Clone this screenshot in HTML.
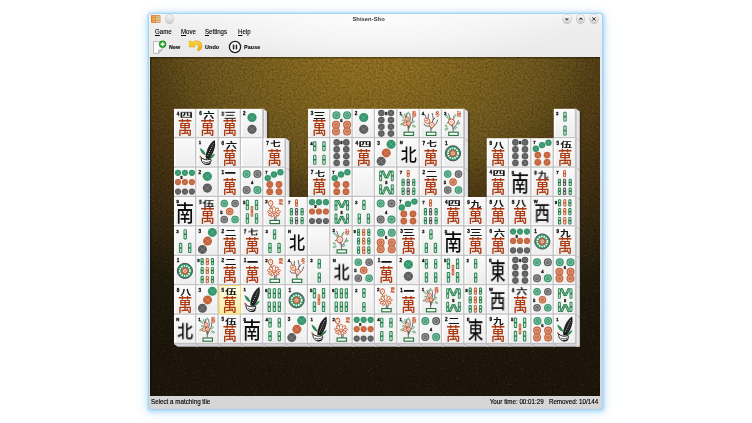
<!DOCTYPE html>
<html lang="en"><head><meta charset="utf-8"><title>Shisen-Sho</title>
<style>
html,body{margin:0;padding:0;background:#fff;}
body{width:752px;height:423px;overflow:hidden;position:relative;font-family:"Liberation Sans",sans-serif;}
#win{will-change:transform;position:absolute;left:148px;top:13px;width:455px;height:396px;}
#frame{position:absolute;left:.8px;top:.8px;right:1.3px;bottom:.4px;border-radius:3px 3px 2px 2px;
background:radial-gradient(ellipse 200px 46px at 50% 6px,rgba(255,255,255,.75) 0,rgba(255,255,255,.45) 50%,rgba(255,255,255,0) 100%),linear-gradient(#f5f5f5 0,#eeeeee 14px,#e9e9e9 44px,#dadada 340px,#d6d6d6 100%);
box-shadow:0 0 1.2px .6px #a2d3f3,.4px .5px 4px 1.2px rgba(140,200,242,.8),0 2px 11px 3px rgba(175,218,246,.45);}
.t{position:absolute;white-space:nowrap;color:#1c1c1c;line-height:1;transform-origin:0 0;}
#title{left:170.6px;width:100px;top:3.6px;text-align:center;font-size:5.8px;font-weight:700;letter-spacing:.05px;color:#333;}
.m{top:16.1px;font-size:7.1px;transform:scaleX(.86);color:#000;-webkit-text-stroke:.12px #000;}
.m u{text-decoration-thickness:.6px;text-underline-offset:.6px;}
.tb{top:31.2px;font-size:6px;font-weight:700;letter-spacing:.1px;color:#111;-webkit-text-stroke:.15px #111;transform:scaleX(.9);}
.sb{top:385.9px;font-size:7.1px;transform:scaleX(.88);color:#000;-webkit-text-stroke:.15px #000;}
.wb{position:absolute;top:2.2px;width:7.8px;height:7.8px;border-radius:50%;background:linear-gradient(#f8f8f8 10%,#e2e2e2 60%,#cbcbcb 100%);box-shadow:0 0 0 .6px #b6b6b6,0 .7px 1px rgba(0,0,0,.2);}
</style></head><body>
<div id="win">
<div id="frame"></div>
<svg style="position:absolute;left:3.4px;top:2.2px" width="9.4" height="7.8" viewBox="0 0 9.4 7.8"><rect width="9.4" height="7.8" rx=".7" fill="#c9722f"/><rect x=".5" y=".5" width="4.2" height="6.8" rx=".4" fill="#ee8a3c"/><rect x="4.9" y=".5" width="4" height="6.8" rx=".4" fill="#f3c49a"/><circle cx="2.6" cy="3.9" r="1.3" fill="#f7b13c"/><rect x=".9" y=".8" width="3.4" height=".9" fill="#f6b684" fill-opacity=".8"/><rect x=".9" y="6.1" width="3.4" height=".8" fill="#f6b684" fill-opacity=".6"/><rect x="5.5" y="1.8" width="1.2" height="1.2" fill="#7fae3e"/><rect x="7.2" y="1.8" width="1.2" height="1.2" fill="#7fae3e"/><rect x="5.5" y="4.5" width="1.2" height="1.2" fill="#7fae3e"/><rect x="7.2" y="4.5" width="1.2" height="1.2" fill="#7fae3e"/></svg>
<div class="wb" style="left:17.6px;width:7.6px;height:7.6px;top:2.2px;background:radial-gradient(circle at 50% 50%,#bdbdbd 0,#bdbdbd 6%,transparent 9%),linear-gradient(#f4f4f4,#cfcfcf)"></div>
<div class="t" id="title">Shisen-Sho</div>
<div class="wb" style="left:414.9px"><svg width="7.8" height="7.8" viewBox="0 0 8.6 8.6" style="display:block"><path d="M2.7 3.6 L4.3 5.3 L5.9 3.6" stroke="#303030" stroke-width="1.15" fill="none"/></svg></div>
<div class="wb" style="left:428.7px"><svg width="7.8" height="7.8" viewBox="0 0 8.6 8.6" style="display:block"><path d="M2.7 5.1 L4.3 3.4 L5.9 5.1" stroke="#303030" stroke-width="1.15" fill="none"/></svg></div>
<div class="wb" style="left:442.1px"><svg width="7.8" height="7.8" viewBox="0 0 8.6 8.6" style="display:block"><path d="M2.5 2.5 L6.1 6.1 M6.1 2.5 L2.5 6.1" stroke="#262626" stroke-width="1.05" fill="none"/></svg></div>
<div class="t m" style="left:6.9px"><u>G</u>ame</div>
<div class="t m" style="left:32.7px"><u>M</u>ove</div>
<div class="t m" style="left:57.3px"><u>S</u>ettings</div>
<div class="t m" style="left:89.5px"><u>H</u>elp</div>
<svg style="position:absolute;left:4px;top:26px" width="16" height="16" viewBox="0 0 16 16"><path d="M1.5 2.6 H10 V10.8 L6.6 14.3 H1.5 Z" fill="#fdfdfd" stroke="#a2a2a2" stroke-width=".7"/><path d="M10 10.8 H6.6 V14.3 Z" fill="#d0d0d0" stroke="#9a9a9a" stroke-width=".5"/><circle cx="10.6" cy="5.2" r="3.4" fill="#23aa1d" stroke="#167a12" stroke-width=".6"/><path d="M10.6 3.2 V7.2 M8.6 5.2 H12.6" stroke="#fff" stroke-width="1.4"/></svg>
<div class="t tb" style="left:20.9px">New</div>
<svg style="position:absolute;left:40px;top:26px" width="16" height="14" viewBox="0 0 16 14"><defs><linearGradient id="ug" x1="0" y1="0" x2="1" y2="1"><stop offset="0" stop-color="#fbd622"/><stop offset=".55" stop-color="#f5bd1a"/><stop offset="1" stop-color="#ec9f18"/></linearGradient></defs><path d="M1.3 2 L1.3 7.9 H7.6 L5.9 6.2 C7.3 4.9 9.6 5 10.2 6.8 C10.7 8.3 10 9.9 9 10.8 L11.4 11.9 C13.6 10.2 14.7 7.4 13.6 4.9 C12.2 1.7 7.4 .6 4.3 3.4 L2.9 2 Z" fill="url(#ug)" stroke="#dba012" stroke-width=".5" stroke-linejoin="round"/><path d="M5.4 4.4 C8 2.6 11.6 3.6 12.4 6.6" fill="none" stroke="#fdeea0" stroke-width=".7" stroke-opacity=".8"/></svg>
<div class="t tb" style="left:56.8px">Undo</div>
<svg style="position:absolute;left:79.7px;top:27px" width="14" height="14" viewBox="0 0 14 14"><circle cx="7" cy="7" r="5.6" fill="#fcfcfc" stroke="#1e1e1e" stroke-width="1.3"/><rect x="4.8" y="4.6" width="1.5" height="4.8" fill="#1e1e1e"/><rect x="7.7" y="4.6" width="1.5" height="4.8" fill="#1e1e1e"/></svg>
<div class="t tb" style="left:95.8px">Pause</div>
<svg width="450" height="339" viewBox="0 0 450 339" style="position:absolute;left:2px;top:44px;display:block"><defs>
<radialGradient id="bg" gradientUnits="userSpaceOnUse" cx="225" cy="0" r="320" gradientTransform="translate(225 0) scale(1.6 1) translate(-225 0)">
<stop offset="0" stop-color="#987525"/>
<stop offset="0.078" stop-color="#947324"/>
<stop offset="0.2" stop-color="#846821"/>
<stop offset="0.324" stop-color="#745b20"/>
<stop offset="0.374" stop-color="#68531b"/>
<stop offset="0.423" stop-color="#5b4418"/>
<stop offset="0.5375" stop-color="#473313"/>
<stop offset="0.67" stop-color="#362911"/>
<stop offset="0.8" stop-color="#241d0e"/>
<stop offset="1" stop-color="#1f170c"/>
</radialGradient>
<linearGradient id="fh" x1="0" x2="1" y1="0" y2="0">
<stop offset="0" stop-color="#d9d9d9"/><stop offset="0.07" stop-color="#f3f3f3"/><stop offset="0.3" stop-color="#ffffff"/><stop offset="0.8" stop-color="#fbfbfb"/><stop offset="0.94" stop-color="#ececec"/><stop offset="1" stop-color="#d4d4d6"/>
</linearGradient>
<linearGradient id="fv" x1="0" x2="0" y1="0" y2="1">
<stop offset="0" stop-color="#fff" stop-opacity=".9"/><stop offset="0.05" stop-color="#fff" stop-opacity="0"/><stop offset="0.85" stop-color="#000" stop-opacity="0"/><stop offset="0.95" stop-color="#000" stop-opacity=".07"/><stop offset="1" stop-color="#000" stop-opacity=".2"/>
</linearGradient>
<linearGradient id="fi" x1="0" x2="0" y1="0" y2="1">
<stop offset="0" stop-color="#f9f9f9"/><stop offset="0.5" stop-color="#f4f4f4"/><stop offset="1" stop-color="#eeeeee"/>
</linearGradient>
<linearGradient id="fs" x1="0" x2="0" y1="0" y2="1">
<stop offset="0" stop-color="#fffce6"/><stop offset="0.6" stop-color="#fdf4c0"/><stop offset="1" stop-color="#f9e69c"/>
</linearGradient>
<linearGradient id="sr" x1="0" x2="1" y1="0" y2="0">
<stop offset="0" stop-color="#efeff1"/><stop offset="0.7" stop-color="#e0e0e3"/><stop offset="1" stop-color="#c6c6ca"/>
</linearGradient>
<linearGradient id="sb" x1="0" x2="0" y1="0" y2="1">
<stop offset="0" stop-color="#e2e2e4"/><stop offset="0.7" stop-color="#cfcfd2"/><stop offset="1" stop-color="#b4b4b8"/>
</linearGradient>
<filter id="grain" x="0" y="0" width="100%" height="100%">
<feTurbulence type="fractalNoise" baseFrequency="0.5" numOctaves="3" seed="7" result="n"/>
<feColorMatrix type="matrix" values="0 0 0 0 0  0 0 0 0 0  0 0 0 0 0  1.6 1.0 0 0 -1.0"/>
</filter>
<filter id="grain2" x="0" y="0" width="100%" height="100%">
<feTurbulence type="fractalNoise" baseFrequency="0.45" numOctaves="3" seed="23" result="n"/>
<feColorMatrix type="matrix" values="0 0 0 0 .78  0 0 0 0 .62  0 0 0 0 .25  0 1.4 1.4 0 -1.62"/>
</filter>
</defs><rect width="450" height="339" fill="url(#bg)"/><rect width="450" height="339" fill="#000" filter="url(#grain)" opacity=".3"/><rect width="450" height="339" fill="#000" filter="url(#grain2)" opacity=".16"/><rect width="450" height="1.6" fill="#000" fill-opacity=".32"/><rect width="1.4" height="339" fill="#000" fill-opacity=".3"/><g transform="translate(24 51.8)"><path d="M22.34 0 L27.79 4 V33.7 H4.75 L0 29.4 Z" fill="#1a1408" fill-opacity=".3"/><path d="M22.34 0 L26.79 3.2 V32.9 H4.15 L0 29.4 Z" fill="#2e281c" fill-opacity=".55"/><path d="M22.34 0 L26.09 2.8 V32.2 H22.34 V29.4 Z" fill="url(#sr)"/><path d="M0 29.4 L3.75 32.2 H26.09 L22.34 29.4 Z" fill="url(#sb)"/><rect width="22.34" height="29.4" fill="#fdfdfd"/><rect x="1.5" y="1.5" width="19.14" height="26" rx="1.6" fill="url(#fi)"/><path d="M21.79 0 V28.85 H0" fill="none" stroke="#c4c4c7" stroke-width="1.7" stroke-opacity=".75"/><path d="M22.04 0 V29.1 H0" fill="none" stroke="#adadb1" stroke-width=".6"/><text x="2.8" y="6.7" font-family="'Liberation Sans',sans-serif" font-size="4.6" font-weight="700" fill="#111" stroke="#111" stroke-width=".3">4</text><text transform="translate(12.23 7.56) scale(1.35 0.61)" text-anchor="middle" font-family="'Liberation Sans','Noto Sans CJK SC',sans-serif" font-size="10" font-weight="700" fill="#151515">四</text><text transform="translate(11.16 25.4) scale(1.46 1.71)" text-anchor="middle" font-family="'Liberation Sans','Noto Sans CJK SC',sans-serif" font-size="10" font-weight="500" fill="#ab3a12">萬</text></g>
<g transform="translate(46.34 51.8)"><path d="M22.34 0 L27.79 4 V33.7 H4.75 L0 29.4 Z" fill="#1a1408" fill-opacity=".3"/><path d="M22.34 0 L26.79 3.2 V32.9 H4.15 L0 29.4 Z" fill="#2e281c" fill-opacity=".55"/><path d="M22.34 0 L26.09 2.8 V32.2 H22.34 V29.4 Z" fill="url(#sr)"/><path d="M0 29.4 L3.75 32.2 H26.09 L22.34 29.4 Z" fill="url(#sb)"/><rect width="22.34" height="29.4" fill="#fdfdfd"/><rect x="1.5" y="1.5" width="19.14" height="26" rx="1.6" fill="url(#fi)"/><path d="M21.79 0 V28.85 H0" fill="none" stroke="#c4c4c7" stroke-width="1.7" stroke-opacity=".75"/><path d="M22.04 0 V29.1 H0" fill="none" stroke="#adadb1" stroke-width=".6"/><text x="2.8" y="6.7" font-family="'Liberation Sans',sans-serif" font-size="4.6" font-weight="700" fill="#111" stroke="#111" stroke-width=".3">6</text><text transform="translate(12.71 9.47) scale(1.14 0.79)" text-anchor="middle" font-family="'Liberation Sans','Noto Sans CJK SC',sans-serif" font-size="10" font-weight="700" fill="#151515">六</text><text transform="translate(11.16 25.4) scale(1.46 1.71)" text-anchor="middle" font-family="'Liberation Sans','Noto Sans CJK SC',sans-serif" font-size="10" font-weight="500" fill="#ab3a12">萬</text></g>
<g transform="translate(68.68 51.8)"><path d="M22.34 0 L27.79 4 V33.7 H4.75 L0 29.4 Z" fill="#1a1408" fill-opacity=".3"/><path d="M22.34 0 L26.79 3.2 V32.9 H4.15 L0 29.4 Z" fill="#2e281c" fill-opacity=".55"/><path d="M22.34 0 L26.09 2.8 V32.2 H22.34 V29.4 Z" fill="url(#sr)"/><path d="M0 29.4 L3.75 32.2 H26.09 L22.34 29.4 Z" fill="url(#sb)"/><rect width="22.34" height="29.4" fill="#fdfdfd"/><rect x="1.5" y="1.5" width="19.14" height="26" rx="1.6" fill="url(#fi)"/><path d="M21.79 0 V28.85 H0" fill="none" stroke="#c4c4c7" stroke-width="1.7" stroke-opacity=".75"/><path d="M22.04 0 V29.1 H0" fill="none" stroke="#adadb1" stroke-width=".6"/><text x="2.8" y="6.7" font-family="'Liberation Sans',sans-serif" font-size="4.6" font-weight="700" fill="#111" stroke="#111" stroke-width=".3">3</text><text transform="translate(11.4 8.76) scale(1.29 0.81)" text-anchor="middle" font-family="'Liberation Sans','Noto Sans CJK SC',sans-serif" font-size="10" font-weight="700" fill="#151515">三</text><text transform="translate(11.16 25.4) scale(1.46 1.71)" text-anchor="middle" font-family="'Liberation Sans','Noto Sans CJK SC',sans-serif" font-size="10" font-weight="500" fill="#ab3a12">萬</text></g>
<g transform="translate(91.02 51.8)"><path d="M22.34 0 L27.79 4 V33.7 H4.75 L0 29.4 Z" fill="#1a1408" fill-opacity=".3"/><path d="M22.34 0 L26.79 3.2 V32.9 H4.15 L0 29.4 Z" fill="#2e281c" fill-opacity=".55"/><path d="M22.34 0 L26.09 2.8 V32.2 H22.34 V29.4 Z" fill="url(#sr)"/><path d="M0 29.4 L3.75 32.2 H26.09 L22.34 29.4 Z" fill="url(#sb)"/><rect width="22.34" height="29.4" fill="#fdfdfd"/><rect x="1.5" y="1.5" width="19.14" height="26" rx="1.6" fill="url(#fi)"/><path d="M21.79 0 V28.85 H0" fill="none" stroke="#c4c4c7" stroke-width="1.7" stroke-opacity=".75"/><path d="M22.04 0 V29.1 H0" fill="none" stroke="#adadb1" stroke-width=".6"/><text x="2.1" y="6.7" font-family="'Liberation Sans',sans-serif" font-size="4.6" font-weight="700" fill="#111" stroke="#111" stroke-width=".3">2</text><circle cx="11" cy="8.7" r="4.6" fill="#33956a"/><path d="M7.96 5.66 L14.04 11.74 M14.04 5.66 L7.96 11.74" stroke="#fff" stroke-opacity=".22" stroke-width="0.92"/><circle cx="11" cy="20.5" r="4.6" fill="#5c5c5c"/><path d="M7.96 17.46 L14.04 23.54 M14.04 17.46 L7.96 23.54" stroke="#fff" stroke-opacity=".22" stroke-width="0.92"/></g>
<g transform="translate(158.04 51.8)"><path d="M22.34 0 L27.79 4 V33.7 H4.75 L0 29.4 Z" fill="#1a1408" fill-opacity=".3"/><path d="M22.34 0 L26.79 3.2 V32.9 H4.15 L0 29.4 Z" fill="#2e281c" fill-opacity=".55"/><path d="M22.34 0 L26.09 2.8 V32.2 H22.34 V29.4 Z" fill="url(#sr)"/><path d="M0 29.4 L3.75 32.2 H26.09 L22.34 29.4 Z" fill="url(#sb)"/><rect width="22.34" height="29.4" fill="#fdfdfd"/><rect x="1.5" y="1.5" width="19.14" height="26" rx="1.6" fill="url(#fi)"/><path d="M21.79 0 V28.85 H0" fill="none" stroke="#c4c4c7" stroke-width="1.7" stroke-opacity=".75"/><path d="M22.04 0 V29.1 H0" fill="none" stroke="#adadb1" stroke-width=".6"/><text x="2.8" y="6.7" font-family="'Liberation Sans',sans-serif" font-size="4.6" font-weight="700" fill="#111" stroke="#111" stroke-width=".3">3</text><text transform="translate(11.4 8.76) scale(1.29 0.81)" text-anchor="middle" font-family="'Liberation Sans','Noto Sans CJK SC',sans-serif" font-size="10" font-weight="700" fill="#151515">三</text><text transform="translate(11.16 25.4) scale(1.46 1.71)" text-anchor="middle" font-family="'Liberation Sans','Noto Sans CJK SC',sans-serif" font-size="10" font-weight="500" fill="#ab3a12">萬</text></g>
<g transform="translate(180.38 51.8)"><path d="M22.34 0 L27.79 4 V33.7 H4.75 L0 29.4 Z" fill="#1a1408" fill-opacity=".3"/><path d="M22.34 0 L26.79 3.2 V32.9 H4.15 L0 29.4 Z" fill="#2e281c" fill-opacity=".55"/><path d="M22.34 0 L26.09 2.8 V32.2 H22.34 V29.4 Z" fill="url(#sr)"/><path d="M0 29.4 L3.75 32.2 H26.09 L22.34 29.4 Z" fill="url(#sb)"/><rect width="22.34" height="29.4" fill="#fdfdfd"/><rect x="1.5" y="1.5" width="19.14" height="26" rx="1.6" fill="url(#fi)"/><path d="M21.79 0 V28.85 H0" fill="none" stroke="#c4c4c7" stroke-width="1.7" stroke-opacity=".75"/><path d="M22.04 0 V29.1 H0" fill="none" stroke="#adadb1" stroke-width=".6"/><circle cx="6" cy="6.4" r="4" fill="#33956a"/><circle cx="6" cy="6.4" r="2.48" fill="none" stroke="#fff" stroke-opacity=".55" stroke-width="0.8"/><circle cx="6" cy="6.4" r="1" fill="none" stroke="#fff" stroke-opacity=".4" stroke-width="0.56"/><circle cx="16.7" cy="6.4" r="4" fill="#33956a"/><circle cx="16.7" cy="6.4" r="2.48" fill="none" stroke="#fff" stroke-opacity=".55" stroke-width="0.8"/><circle cx="16.7" cy="6.4" r="1" fill="none" stroke="#fff" stroke-opacity=".4" stroke-width="0.56"/><circle cx="5.6" cy="16" r="4" fill="#c4623a"/><circle cx="5.6" cy="16" r="2.48" fill="none" stroke="#fff" stroke-opacity=".55" stroke-width="0.8"/><circle cx="5.6" cy="16" r="1" fill="none" stroke="#fff" stroke-opacity=".4" stroke-width="0.56"/><circle cx="16.7" cy="16" r="4" fill="#c4623a"/><circle cx="16.7" cy="16" r="2.48" fill="none" stroke="#fff" stroke-opacity=".55" stroke-width="0.8"/><circle cx="16.7" cy="16" r="1" fill="none" stroke="#fff" stroke-opacity=".4" stroke-width="0.56"/><circle cx="5.6" cy="22.8" r="4" fill="#c4623a"/><circle cx="5.6" cy="22.8" r="2.48" fill="none" stroke="#fff" stroke-opacity=".55" stroke-width="0.8"/><circle cx="5.6" cy="22.8" r="1" fill="none" stroke="#fff" stroke-opacity=".4" stroke-width="0.56"/><circle cx="16.7" cy="22.8" r="4" fill="#c4623a"/><circle cx="16.7" cy="22.8" r="2.48" fill="none" stroke="#fff" stroke-opacity=".55" stroke-width="0.8"/><circle cx="16.7" cy="22.8" r="1" fill="none" stroke="#fff" stroke-opacity=".4" stroke-width="0.56"/><text x="9.9" y="12.8" font-family="'Liberation Sans',sans-serif" font-size="4.2" font-weight="700" fill="#111" stroke="#111" stroke-width=".3">6</text></g>
<g transform="translate(202.72 51.8)"><path d="M22.34 0 L27.79 4 V33.7 H4.75 L0 29.4 Z" fill="#1a1408" fill-opacity=".3"/><path d="M22.34 0 L26.79 3.2 V32.9 H4.15 L0 29.4 Z" fill="#2e281c" fill-opacity=".55"/><path d="M22.34 0 L26.09 2.8 V32.2 H22.34 V29.4 Z" fill="url(#sr)"/><path d="M0 29.4 L3.75 32.2 H26.09 L22.34 29.4 Z" fill="url(#sb)"/><rect width="22.34" height="29.4" fill="#fdfdfd"/><rect x="1.5" y="1.5" width="19.14" height="26" rx="1.6" fill="url(#fi)"/><path d="M21.79 0 V28.85 H0" fill="none" stroke="#c4c4c7" stroke-width="1.7" stroke-opacity=".75"/><path d="M22.04 0 V29.1 H0" fill="none" stroke="#adadb1" stroke-width=".6"/><text x="2.1" y="6.7" font-family="'Liberation Sans',sans-serif" font-size="4.6" font-weight="700" fill="#111" stroke="#111" stroke-width=".3">2</text><circle cx="11" cy="8.7" r="4.6" fill="#33956a"/><path d="M7.96 5.66 L14.04 11.74 M14.04 5.66 L7.96 11.74" stroke="#fff" stroke-opacity=".22" stroke-width="0.92"/><circle cx="11" cy="20.5" r="4.6" fill="#5c5c5c"/><path d="M7.96 17.46 L14.04 23.54 M14.04 17.46 L7.96 23.54" stroke="#fff" stroke-opacity=".22" stroke-width="0.92"/></g>
<g transform="translate(225.06 51.8)"><path d="M22.34 0 L27.79 4 V33.7 H4.75 L0 29.4 Z" fill="#1a1408" fill-opacity=".3"/><path d="M22.34 0 L26.79 3.2 V32.9 H4.15 L0 29.4 Z" fill="#2e281c" fill-opacity=".55"/><path d="M22.34 0 L26.09 2.8 V32.2 H22.34 V29.4 Z" fill="url(#sr)"/><path d="M0 29.4 L3.75 32.2 H26.09 L22.34 29.4 Z" fill="url(#sb)"/><rect width="22.34" height="29.4" fill="#fdfdfd"/><rect x="1.5" y="1.5" width="19.14" height="26" rx="1.6" fill="url(#fi)"/><path d="M21.79 0 V28.85 H0" fill="none" stroke="#c4c4c7" stroke-width="1.7" stroke-opacity=".75"/><path d="M22.04 0 V29.1 H0" fill="none" stroke="#adadb1" stroke-width=".6"/><circle cx="6.3" cy="4.2" r="3.3" fill="#5c5c5c"/><path d="M4.12 2.02 L8.48 6.38 M8.48 2.02 L4.12 6.38" stroke="#fff" stroke-opacity=".22" stroke-width="0.66"/><circle cx="15.9" cy="4.2" r="3.3" fill="#5c5c5c"/><path d="M13.72 2.02 L18.08 6.38 M18.08 2.02 L13.72 6.38" stroke="#fff" stroke-opacity=".22" stroke-width="0.66"/><circle cx="6.3" cy="11.2" r="3.3" fill="#5c5c5c"/><path d="M4.12 9.02 L8.48 13.38 M8.48 9.02 L4.12 13.38" stroke="#fff" stroke-opacity=".22" stroke-width="0.66"/><circle cx="15.9" cy="11.2" r="3.3" fill="#5c5c5c"/><path d="M13.72 9.02 L18.08 13.38 M18.08 9.02 L13.72 13.38" stroke="#fff" stroke-opacity=".22" stroke-width="0.66"/><circle cx="6.3" cy="18" r="3.3" fill="#5c5c5c"/><path d="M4.12 15.82 L8.48 20.18 M8.48 15.82 L4.12 20.18" stroke="#fff" stroke-opacity=".22" stroke-width="0.66"/><circle cx="15.9" cy="18" r="3.3" fill="#5c5c5c"/><path d="M13.72 15.82 L18.08 20.18 M18.08 15.82 L13.72 20.18" stroke="#fff" stroke-opacity=".22" stroke-width="0.66"/><circle cx="6.3" cy="24.8" r="3.3" fill="#5c5c5c"/><path d="M4.12 22.62 L8.48 26.98 M8.48 22.62 L4.12 26.98" stroke="#fff" stroke-opacity=".22" stroke-width="0.66"/><circle cx="15.9" cy="24.8" r="3.3" fill="#5c5c5c"/><path d="M13.72 22.62 L18.08 26.98 M18.08 22.62 L13.72 26.98" stroke="#fff" stroke-opacity=".22" stroke-width="0.66"/><text x="9.9" y="6" font-family="'Liberation Sans',sans-serif" font-size="4.2" font-weight="700" fill="#111" stroke="#111" stroke-width=".3">8</text></g>
<g transform="translate(247.4 51.8)"><path d="M22.34 0 L27.79 4 V33.7 H4.75 L0 29.4 Z" fill="#1a1408" fill-opacity=".3"/><path d="M22.34 0 L26.79 3.2 V32.9 H4.15 L0 29.4 Z" fill="#2e281c" fill-opacity=".55"/><path d="M22.34 0 L26.09 2.8 V32.2 H22.34 V29.4 Z" fill="url(#sr)"/><path d="M0 29.4 L3.75 32.2 H26.09 L22.34 29.4 Z" fill="url(#sb)"/><rect width="22.34" height="29.4" fill="#fdfdfd"/><rect x="1.5" y="1.5" width="19.14" height="26" rx="1.6" fill="url(#fi)"/><path d="M21.79 0 V28.85 H0" fill="none" stroke="#c4c4c7" stroke-width="1.7" stroke-opacity=".75"/><path d="M22.04 0 V29.1 H0" fill="none" stroke="#adadb1" stroke-width=".6"/><text x="2" y="6" font-family="'Liberation Sans',sans-serif" font-size="4.3" font-weight="700" fill="#111" stroke="#111" stroke-width=".3">1</text><text transform="translate(16.79 7.24) scale(0.47 0.54)" text-anchor="middle" font-family="'Liberation Sans','Noto Sans CJK SC',sans-serif" font-size="10" font-weight="700" fill="#c24e22">春</text><rect x="6.7" y="23.4" width="9.4" height="3.2" fill="#fff" stroke="#2a7440" stroke-width="1.15"/><path d="M11 23 L10.6 16 L7.2 4.8 M10.7 18 L9 10 L9.4 4.4 M11 19 L13 10 L12.2 4.6 M11 20.4 L15 12 L15.4 8" stroke="#3a3a3a" stroke-width=".7" fill="none"/><ellipse cx="5.4" cy="7.6" rx="1.6" ry="0.75" transform="rotate(40 5.4 7.6)" fill="#eef6ef" stroke="#4a9a62" stroke-width=".7"/><ellipse cx="4.8" cy="15.2" rx="1.6" ry="0.75" transform="rotate(-20 4.8 15.2)" fill="#eef6ef" stroke="#4a9a62" stroke-width=".7"/><ellipse cx="15.6" cy="13.2" rx="1.6" ry="0.75" transform="rotate(-35 15.6 13.2)" fill="#eef6ef" stroke="#4a9a62" stroke-width=".7"/><ellipse cx="16.6" cy="17.4" rx="1.6" ry="0.75" transform="rotate(20 16.6 17.4)" fill="#eef6ef" stroke="#4a9a62" stroke-width=".7"/><ellipse cx="10.6" cy="4.4" rx="1.3" ry="0.6" transform="rotate(-60 10.6 4.4)" fill="#eef6ef" stroke="#4a9a62" stroke-width=".7"/><ellipse cx="6.2" cy="11.6" rx="1.3" ry="0.6" transform="rotate(10 6.2 11.6)" fill="#eef6ef" stroke="#4a9a62" stroke-width=".7"/><circle cx="9.7" cy="10.2" r="2" fill="#fff" stroke="#c4562a" stroke-width=".9"/><path d="M8.6 10.2 L10.8 10.2 M9.7 9.1 L9.7 11.3" stroke="#c4562a" stroke-width=".5" stroke-opacity=".8"/><circle cx="7.7" cy="15" r="1.9" fill="#fff" stroke="#c4562a" stroke-width=".9"/><path d="M6.66 15 L8.75 15 M7.7 13.96 L7.7 16.05" stroke="#c4562a" stroke-width=".5" stroke-opacity=".8"/><circle cx="11.2" cy="14.7" r="1.9" fill="#fff" stroke="#c4562a" stroke-width=".9"/><path d="M10.15 14.7 L12.24 14.7 M11.2 13.65 L11.2 15.74" stroke="#c4562a" stroke-width=".5" stroke-opacity=".8"/></g>
<g transform="translate(269.74 51.8)"><path d="M22.34 0 L27.79 4 V33.7 H4.75 L0 29.4 Z" fill="#1a1408" fill-opacity=".3"/><path d="M22.34 0 L26.79 3.2 V32.9 H4.15 L0 29.4 Z" fill="#2e281c" fill-opacity=".55"/><path d="M22.34 0 L26.09 2.8 V32.2 H22.34 V29.4 Z" fill="url(#sr)"/><path d="M0 29.4 L3.75 32.2 H26.09 L22.34 29.4 Z" fill="url(#sb)"/><rect width="22.34" height="29.4" fill="#fdfdfd"/><rect x="1.5" y="1.5" width="19.14" height="26" rx="1.6" fill="url(#fi)"/><path d="M21.79 0 V28.85 H0" fill="none" stroke="#c4c4c7" stroke-width="1.7" stroke-opacity=".75"/><path d="M22.04 0 V29.1 H0" fill="none" stroke="#adadb1" stroke-width=".6"/><text x="2" y="6" font-family="'Liberation Sans',sans-serif" font-size="4.3" font-weight="700" fill="#111" stroke="#111" stroke-width=".3">4</text><text transform="translate(17.69 7.2) scale(0.46 0.53)" text-anchor="middle" font-family="'Liberation Sans','Noto Sans CJK SC',sans-serif" font-size="10" font-weight="700" fill="#c24e22">冬</text><rect x="6.7" y="23.4" width="9.4" height="3.2" fill="#fff" stroke="#2a7440" stroke-width="1.15"/><path d="M11.4 23 L10.8 17.4 L5.2 6.2 L3.6 4.6 M8.2 12 L8.8 5.2 M10.9 18.6 L13.6 10 L12.4 4.2 M13.2 11.4 L15.4 8.6 M11.2 20.6 L16.6 14.6 L18 10.8 M10.8 17.6 L5.6 17 L4.2 14.8" stroke="#3a3a3a" stroke-width=".75" fill="none"/><circle cx="7.6" cy="12.2" r="2.5" fill="#fff" stroke="#c4562a" stroke-width=".9"/><path d="M6.22 12.2 L8.97 12.2 M7.6 10.82 L7.6 13.57" stroke="#c4562a" stroke-width=".5" stroke-opacity=".8"/><circle cx="12" cy="16.1" r="2.5" fill="#fff" stroke="#c4562a" stroke-width=".9"/><path d="M10.62 16.1 L13.38 16.1 M12 14.73 L12 17.48" stroke="#c4562a" stroke-width=".5" stroke-opacity=".8"/><circle cx="6" cy="10.6" r="1.3" fill="#fff" stroke="#c4562a" stroke-width=".7"/></g>
<g transform="translate(292.08 51.8)"><path d="M22.34 0 L27.79 4 V33.7 H4.75 L0 29.4 Z" fill="#1a1408" fill-opacity=".3"/><path d="M22.34 0 L26.79 3.2 V32.9 H4.15 L0 29.4 Z" fill="#2e281c" fill-opacity=".55"/><path d="M22.34 0 L26.09 2.8 V32.2 H22.34 V29.4 Z" fill="url(#sr)"/><path d="M0 29.4 L3.75 32.2 H26.09 L22.34 29.4 Z" fill="url(#sb)"/><rect width="22.34" height="29.4" fill="#fdfdfd"/><rect x="1.5" y="1.5" width="19.14" height="26" rx="1.6" fill="url(#fi)"/><path d="M21.79 0 V28.85 H0" fill="none" stroke="#c4c4c7" stroke-width="1.7" stroke-opacity=".75"/><path d="M22.04 0 V29.1 H0" fill="none" stroke="#adadb1" stroke-width=".6"/><text x="2" y="6" font-family="'Liberation Sans',sans-serif" font-size="4.3" font-weight="700" fill="#111" stroke="#111" stroke-width=".3">3</text><text transform="translate(17.01 7.24) scale(0.47 0.54)" text-anchor="middle" font-family="'Liberation Sans','Noto Sans CJK SC',sans-serif" font-size="10" font-weight="700" fill="#c24e22">秋</text><rect x="6.7" y="23.4" width="9.4" height="3.2" fill="#fff" stroke="#2a7440" stroke-width="1.15"/><path d="M11.2 23 L10.6 16 L6.2 4.6 M10.8 18.4 L6.6 13.6 L4.6 14.2 M11 20 L14.6 15.4 L16.4 11.4 M10.2 14 L12.8 6.4" stroke="#3a3a3a" stroke-width=".7" fill="none"/><ellipse cx="4.6" cy="7.6" rx="1.6" ry="0.75" transform="rotate(35 4.6 7.6)" fill="#eef6ef" stroke="#4a9a62" stroke-width=".7"/><ellipse cx="12.6" cy="7.2" rx="1.6" ry="0.75" transform="rotate(-50 12.6 7.2)" fill="#eef6ef" stroke="#4a9a62" stroke-width=".7"/><ellipse cx="4.4" cy="20.2" rx="1.6" ry="0.75" transform="rotate(-25 4.4 20.2)" fill="#eef6ef" stroke="#4a9a62" stroke-width=".7"/><ellipse cx="13.2" cy="19.2" rx="1.6" ry="0.75" transform="rotate(-30 13.2 19.2)" fill="#eef6ef" stroke="#4a9a62" stroke-width=".7"/><ellipse cx="16.6" cy="14.6" rx="1.4" ry="0.65" transform="rotate(-20 16.6 14.6)" fill="#eef6ef" stroke="#4a9a62" stroke-width=".7"/><ellipse cx="7" cy="10.2" rx="1.3" ry="0.6" transform="rotate(60 7 10.2)" fill="#eef6ef" stroke="#4a9a62" stroke-width=".7"/><ellipse cx="4" cy="17" rx="1.2" ry="0.55" transform="rotate(30 4 17)" fill="#eef6ef" stroke="#4a9a62" stroke-width=".7"/><circle cx="9.4" cy="13.2" r="3.0" fill="#fff" stroke="#c4562a" stroke-width="1"/><path d="M7.6 13.6 Q9.4 10.8 11.2 13.6 M8.4 15 Q9.4 13.6 10.4 15" stroke="#c4562a" stroke-width=".6" fill="none"/></g>
<g transform="translate(403.78 51.8)"><path d="M22.34 0 L27.79 4 V33.7 H4.75 L0 29.4 Z" fill="#1a1408" fill-opacity=".3"/><path d="M22.34 0 L26.79 3.2 V32.9 H4.15 L0 29.4 Z" fill="#2e281c" fill-opacity=".55"/><path d="M22.34 0 L26.09 2.8 V32.2 H22.34 V29.4 Z" fill="url(#sr)"/><path d="M0 29.4 L3.75 32.2 H26.09 L22.34 29.4 Z" fill="url(#sb)"/><rect width="22.34" height="29.4" fill="#fdfdfd"/><rect x="1.5" y="1.5" width="19.14" height="26" rx="1.6" fill="url(#fi)"/><path d="M21.79 0 V28.85 H0" fill="none" stroke="#c4c4c7" stroke-width="1.7" stroke-opacity=".75"/><path d="M22.04 0 V29.1 H0" fill="none" stroke="#adadb1" stroke-width=".6"/><text x="2.2" y="6.5" font-family="'Liberation Sans',sans-serif" font-size="4.4" font-weight="700" fill="#111" stroke="#111" stroke-width=".3">2</text><rect x="9.55" y="2.9" width="3.3" height="9.9" rx="1.2" fill="#1f7f48"/><rect x="10.4" y="3.8" width="1.6" height="8.1" rx=".4" fill="#fff" fill-opacity=".74"/><rect x="9.95" y="7.1" width="2.5" height="1.5" fill="#1f7f48"/><rect x="9.55" y="16.7" width="3.3" height="10.1" rx="1.2" fill="#1f7f48"/><rect x="10.4" y="17.6" width="1.6" height="8.3" rx=".4" fill="#fff" fill-opacity=".74"/><rect x="9.95" y="21" width="2.5" height="1.5" fill="#1f7f48"/></g>
<g transform="translate(24 81.2)"><path d="M22.34 0 L27.79 4 V33.7 H4.75 L0 29.4 Z" fill="#1a1408" fill-opacity=".3"/><path d="M22.34 0 L26.79 3.2 V32.9 H4.15 L0 29.4 Z" fill="#2e281c" fill-opacity=".55"/><path d="M22.34 0 L26.09 2.8 V32.2 H22.34 V29.4 Z" fill="url(#sr)"/><path d="M0 29.4 L3.75 32.2 H26.09 L22.34 29.4 Z" fill="url(#sb)"/><rect width="22.34" height="29.4" fill="#fdfdfd"/><rect x="1.5" y="1.5" width="19.14" height="26" rx="1.6" fill="url(#fi)"/><path d="M21.79 0 V28.85 H0" fill="none" stroke="#c4c4c7" stroke-width="1.7" stroke-opacity=".75"/><path d="M22.04 0 V29.1 H0" fill="none" stroke="#adadb1" stroke-width=".6"/></g>
<g transform="translate(46.34 81.2)"><path d="M22.34 0 L27.79 4 V33.7 H4.75 L0 29.4 Z" fill="#1a1408" fill-opacity=".3"/><path d="M22.34 0 L26.79 3.2 V32.9 H4.15 L0 29.4 Z" fill="#2e281c" fill-opacity=".55"/><path d="M22.34 0 L26.09 2.8 V32.2 H22.34 V29.4 Z" fill="url(#sr)"/><path d="M0 29.4 L3.75 32.2 H26.09 L22.34 29.4 Z" fill="url(#sb)"/><rect width="22.34" height="29.4" fill="#fdfdfd"/><rect x="1.5" y="1.5" width="19.14" height="26" rx="1.6" fill="url(#fi)"/><path d="M21.79 0 V28.85 H0" fill="none" stroke="#c4c4c7" stroke-width="1.7" stroke-opacity=".75"/><path d="M22.04 0 V29.1 H0" fill="none" stroke="#adadb1" stroke-width=".6"/><text x="2.4" y="6.2" font-family="'Liberation Sans',sans-serif" font-size="4.3" font-weight="700" fill="#111" stroke="#111" stroke-width=".3">1</text><path d="M3.6 9.8 C6.4 11 8.8 13.6 9.6 17.2 C6.4 16.6 4 13.6 3.6 9.8Z" fill="#2c8a50"/><path d="M18.9 15.6 C17.8 18.6 15.4 20.6 12.4 21.2 C13.2 18.4 15.8 16.2 18.9 15.6Z" fill="#2c8a50"/><path d="M9.4 20.4 C8.8 14.4 12.6 5.4 18.3 1.9 C19.9 7.4 17.4 15.4 12.6 20.8 Z" fill="#1b1b1b"/><path d="M11.4 17.6 L17.1 4.8" stroke="#fff" stroke-opacity=".8" stroke-width="1" stroke-dasharray=".9 1.2" fill="none"/><path d="M13.4 17 L18 7.4" stroke="#fff" stroke-opacity=".5" stroke-width=".7" stroke-dasharray=".7 1.2" fill="none"/><path d="M10.2 15.4 L14.8 5.6" stroke="#fff" stroke-opacity=".35" stroke-width=".6" stroke-dasharray=".6 1.3" fill="none"/><path d="M4.9 19.3 C6.8 21.6 10.6 22.2 14.3 21 C15.6 23.4 13.4 26.2 9.8 26.2 C6.6 26 4.7 23 4.9 19.3Z" fill="#fff" stroke="#1b1b1b" stroke-width="1"/><path d="M7 23.4 C9.2 24.8 12 24.6 13.8 23" stroke="#1b1b1b" stroke-width=".8" fill="none"/><path d="M9.4 26 C11.4 26.6 13.4 25.8 14.2 24.4" stroke="#1b1b1b" stroke-width="1.2" fill="none"/><circle cx="4.1" cy="18.5" r=".85" fill="#c6501e"/></g>
<g transform="translate(68.68 81.2)"><path d="M22.34 0 L27.79 4 V33.7 H4.75 L0 29.4 Z" fill="#1a1408" fill-opacity=".3"/><path d="M22.34 0 L26.79 3.2 V32.9 H4.15 L0 29.4 Z" fill="#2e281c" fill-opacity=".55"/><path d="M22.34 0 L26.09 2.8 V32.2 H22.34 V29.4 Z" fill="url(#sr)"/><path d="M0 29.4 L3.75 32.2 H26.09 L22.34 29.4 Z" fill="url(#sb)"/><rect width="22.34" height="29.4" fill="#fdfdfd"/><rect x="1.5" y="1.5" width="19.14" height="26" rx="1.6" fill="url(#fi)"/><path d="M21.79 0 V28.85 H0" fill="none" stroke="#c4c4c7" stroke-width="1.7" stroke-opacity=".75"/><path d="M22.04 0 V29.1 H0" fill="none" stroke="#adadb1" stroke-width=".6"/><text x="2.8" y="6.7" font-family="'Liberation Sans',sans-serif" font-size="4.6" font-weight="700" fill="#111" stroke="#111" stroke-width=".3">6</text><text transform="translate(12.71 9.47) scale(1.14 0.79)" text-anchor="middle" font-family="'Liberation Sans','Noto Sans CJK SC',sans-serif" font-size="10" font-weight="700" fill="#151515">六</text><text transform="translate(11.16 25.4) scale(1.46 1.71)" text-anchor="middle" font-family="'Liberation Sans','Noto Sans CJK SC',sans-serif" font-size="10" font-weight="500" fill="#ab3a12">萬</text></g>
<g transform="translate(91.02 81.2)"><path d="M22.34 0 L27.79 4 V33.7 H4.75 L0 29.4 Z" fill="#1a1408" fill-opacity=".3"/><path d="M22.34 0 L26.79 3.2 V32.9 H4.15 L0 29.4 Z" fill="#2e281c" fill-opacity=".55"/><path d="M22.34 0 L26.09 2.8 V32.2 H22.34 V29.4 Z" fill="url(#sr)"/><path d="M0 29.4 L3.75 32.2 H26.09 L22.34 29.4 Z" fill="url(#sb)"/><rect width="22.34" height="29.4" fill="#fdfdfd"/><rect x="1.5" y="1.5" width="19.14" height="26" rx="1.6" fill="url(#fi)"/><path d="M21.79 0 V28.85 H0" fill="none" stroke="#c4c4c7" stroke-width="1.7" stroke-opacity=".75"/><path d="M22.04 0 V29.1 H0" fill="none" stroke="#adadb1" stroke-width=".6"/></g>
<g transform="translate(113.36 81.2)"><path d="M22.34 0 L27.79 4 V33.7 H4.75 L0 29.4 Z" fill="#1a1408" fill-opacity=".3"/><path d="M22.34 0 L26.79 3.2 V32.9 H4.15 L0 29.4 Z" fill="#2e281c" fill-opacity=".55"/><path d="M22.34 0 L26.09 2.8 V32.2 H22.34 V29.4 Z" fill="url(#sr)"/><path d="M0 29.4 L3.75 32.2 H26.09 L22.34 29.4 Z" fill="url(#sb)"/><rect width="22.34" height="29.4" fill="#fdfdfd"/><rect x="1.5" y="1.5" width="19.14" height="26" rx="1.6" fill="url(#fi)"/><path d="M21.79 0 V28.85 H0" fill="none" stroke="#c4c4c7" stroke-width="1.7" stroke-opacity=".75"/><path d="M22.04 0 V29.1 H0" fill="none" stroke="#adadb1" stroke-width=".6"/><text x="2.8" y="6.7" font-family="'Liberation Sans',sans-serif" font-size="4.6" font-weight="700" fill="#111" stroke="#111" stroke-width=".3">7</text><text transform="translate(11.97 7.97) scale(1.04 0.72)" text-anchor="middle" font-family="'Liberation Sans','Noto Sans CJK SC',sans-serif" font-size="10" font-weight="700" fill="#151515">七</text><text transform="translate(11.16 25.4) scale(1.46 1.71)" text-anchor="middle" font-family="'Liberation Sans','Noto Sans CJK SC',sans-serif" font-size="10" font-weight="500" fill="#ab3a12">萬</text></g>
<g transform="translate(158.04 81.2)"><path d="M22.34 0 L27.79 4 V33.7 H4.75 L0 29.4 Z" fill="#1a1408" fill-opacity=".3"/><path d="M22.34 0 L26.79 3.2 V32.9 H4.15 L0 29.4 Z" fill="#2e281c" fill-opacity=".55"/><path d="M22.34 0 L26.09 2.8 V32.2 H22.34 V29.4 Z" fill="url(#sr)"/><path d="M0 29.4 L3.75 32.2 H26.09 L22.34 29.4 Z" fill="url(#sb)"/><rect width="22.34" height="29.4" fill="#fdfdfd"/><rect x="1.5" y="1.5" width="19.14" height="26" rx="1.6" fill="url(#fi)"/><path d="M21.79 0 V28.85 H0" fill="none" stroke="#c4c4c7" stroke-width="1.7" stroke-opacity=".75"/><path d="M22.04 0 V29.1 H0" fill="none" stroke="#adadb1" stroke-width=".6"/><text x="2.2" y="6.5" font-family="'Liberation Sans',sans-serif" font-size="4.4" font-weight="700" fill="#111" stroke="#111" stroke-width=".3">4</text><rect x="5.05" y="3.1" width="3.3" height="9.9" rx="1.2" fill="#1f7f48"/><rect x="5.9" y="4" width="1.6" height="8.1" rx=".4" fill="#fff" fill-opacity=".74"/><rect x="5.45" y="7.3" width="2.5" height="1.5" fill="#1f7f48"/><rect x="5.05" y="16.5" width="3.3" height="10.1" rx="1.2" fill="#1f7f48"/><rect x="5.9" y="17.4" width="1.6" height="8.3" rx=".4" fill="#fff" fill-opacity=".74"/><rect x="5.45" y="20.8" width="2.5" height="1.5" fill="#1f7f48"/><rect x="14.25" y="3.1" width="3.3" height="9.9" rx="1.2" fill="#1f7f48"/><rect x="15.1" y="4" width="1.6" height="8.1" rx=".4" fill="#fff" fill-opacity=".74"/><rect x="14.65" y="7.3" width="2.5" height="1.5" fill="#1f7f48"/><rect x="14.25" y="16.5" width="3.3" height="10.1" rx="1.2" fill="#1f7f48"/><rect x="15.1" y="17.4" width="1.6" height="8.3" rx=".4" fill="#fff" fill-opacity=".74"/><rect x="14.65" y="20.8" width="2.5" height="1.5" fill="#1f7f48"/></g>
<g transform="translate(180.38 81.2)"><path d="M22.34 0 L27.79 4 V33.7 H4.75 L0 29.4 Z" fill="#1a1408" fill-opacity=".3"/><path d="M22.34 0 L26.79 3.2 V32.9 H4.15 L0 29.4 Z" fill="#2e281c" fill-opacity=".55"/><path d="M22.34 0 L26.09 2.8 V32.2 H22.34 V29.4 Z" fill="url(#sr)"/><path d="M0 29.4 L3.75 32.2 H26.09 L22.34 29.4 Z" fill="url(#sb)"/><rect width="22.34" height="29.4" fill="#fdfdfd"/><rect x="1.5" y="1.5" width="19.14" height="26" rx="1.6" fill="url(#fi)"/><path d="M21.79 0 V28.85 H0" fill="none" stroke="#c4c4c7" stroke-width="1.7" stroke-opacity=".75"/><path d="M22.04 0 V29.1 H0" fill="none" stroke="#adadb1" stroke-width=".6"/><circle cx="6.3" cy="4.2" r="3.3" fill="#5c5c5c"/><path d="M4.12 2.02 L8.48 6.38 M8.48 2.02 L4.12 6.38" stroke="#fff" stroke-opacity=".22" stroke-width="0.66"/><circle cx="15.9" cy="4.2" r="3.3" fill="#5c5c5c"/><path d="M13.72 2.02 L18.08 6.38 M18.08 2.02 L13.72 6.38" stroke="#fff" stroke-opacity=".22" stroke-width="0.66"/><circle cx="6.3" cy="11.2" r="3.3" fill="#5c5c5c"/><path d="M4.12 9.02 L8.48 13.38 M8.48 9.02 L4.12 13.38" stroke="#fff" stroke-opacity=".22" stroke-width="0.66"/><circle cx="15.9" cy="11.2" r="3.3" fill="#5c5c5c"/><path d="M13.72 9.02 L18.08 13.38 M18.08 9.02 L13.72 13.38" stroke="#fff" stroke-opacity=".22" stroke-width="0.66"/><circle cx="6.3" cy="18" r="3.3" fill="#5c5c5c"/><path d="M4.12 15.82 L8.48 20.18 M8.48 15.82 L4.12 20.18" stroke="#fff" stroke-opacity=".22" stroke-width="0.66"/><circle cx="15.9" cy="18" r="3.3" fill="#5c5c5c"/><path d="M13.72 15.82 L18.08 20.18 M18.08 15.82 L13.72 20.18" stroke="#fff" stroke-opacity=".22" stroke-width="0.66"/><circle cx="6.3" cy="24.8" r="3.3" fill="#5c5c5c"/><path d="M4.12 22.62 L8.48 26.98 M8.48 22.62 L4.12 26.98" stroke="#fff" stroke-opacity=".22" stroke-width="0.66"/><circle cx="15.9" cy="24.8" r="3.3" fill="#5c5c5c"/><path d="M13.72 22.62 L18.08 26.98 M18.08 22.62 L13.72 26.98" stroke="#fff" stroke-opacity=".22" stroke-width="0.66"/><text x="9.9" y="6" font-family="'Liberation Sans',sans-serif" font-size="4.2" font-weight="700" fill="#111" stroke="#111" stroke-width=".3">8</text></g>
<g transform="translate(202.72 81.2)"><path d="M22.34 0 L27.79 4 V33.7 H4.75 L0 29.4 Z" fill="#1a1408" fill-opacity=".3"/><path d="M22.34 0 L26.79 3.2 V32.9 H4.15 L0 29.4 Z" fill="#2e281c" fill-opacity=".55"/><path d="M22.34 0 L26.09 2.8 V32.2 H22.34 V29.4 Z" fill="url(#sr)"/><path d="M0 29.4 L3.75 32.2 H26.09 L22.34 29.4 Z" fill="url(#sb)"/><rect width="22.34" height="29.4" fill="#fdfdfd"/><rect x="1.5" y="1.5" width="19.14" height="26" rx="1.6" fill="url(#fi)"/><path d="M21.79 0 V28.85 H0" fill="none" stroke="#c4c4c7" stroke-width="1.7" stroke-opacity=".75"/><path d="M22.04 0 V29.1 H0" fill="none" stroke="#adadb1" stroke-width=".6"/><text x="2.8" y="6.7" font-family="'Liberation Sans',sans-serif" font-size="4.6" font-weight="700" fill="#111" stroke="#111" stroke-width=".3">4</text><text transform="translate(12.23 7.56) scale(1.35 0.61)" text-anchor="middle" font-family="'Liberation Sans','Noto Sans CJK SC',sans-serif" font-size="10" font-weight="700" fill="#151515">四</text><text transform="translate(11.16 25.4) scale(1.46 1.71)" text-anchor="middle" font-family="'Liberation Sans','Noto Sans CJK SC',sans-serif" font-size="10" font-weight="500" fill="#ab3a12">萬</text></g>
<g transform="translate(225.06 81.2)"><path d="M22.34 0 L27.79 4 V33.7 H4.75 L0 29.4 Z" fill="#1a1408" fill-opacity=".3"/><path d="M22.34 0 L26.79 3.2 V32.9 H4.15 L0 29.4 Z" fill="#2e281c" fill-opacity=".55"/><path d="M22.34 0 L26.09 2.8 V32.2 H22.34 V29.4 Z" fill="url(#sr)"/><path d="M0 29.4 L3.75 32.2 H26.09 L22.34 29.4 Z" fill="url(#sb)"/><rect width="22.34" height="29.4" fill="#fdfdfd"/><rect x="1.5" y="1.5" width="19.14" height="26" rx="1.6" fill="url(#fi)"/><path d="M21.79 0 V28.85 H0" fill="none" stroke="#c4c4c7" stroke-width="1.7" stroke-opacity=".75"/><path d="M22.04 0 V29.1 H0" fill="none" stroke="#adadb1" stroke-width=".6"/><text x="2.1" y="6.7" font-family="'Liberation Sans',sans-serif" font-size="4.6" font-weight="700" fill="#111" stroke="#111" stroke-width=".3">3</text><circle cx="16" cy="6" r="4.5" fill="#33956a"/><path d="M13.03 3.03 L18.97 8.97 M18.97 3.03 L13.03 8.97" stroke="#fff" stroke-opacity=".22" stroke-width="0.9"/><circle cx="11.2" cy="14.7" r="4.5" fill="#c4623a"/><path d="M8.23 11.73 L14.17 17.67 M14.17 11.73 L8.23 17.67" stroke="#fff" stroke-opacity=".22" stroke-width="0.9"/><circle cx="6.1" cy="23" r="4.5" fill="#5c5c5c"/><path d="M3.13 20.03 L9.07 25.97 M9.07 20.03 L3.13 25.97" stroke="#fff" stroke-opacity=".22" stroke-width="0.9"/></g>
<g transform="translate(247.4 81.2)"><path d="M22.34 0 L27.79 4 V33.7 H4.75 L0 29.4 Z" fill="#1a1408" fill-opacity=".3"/><path d="M22.34 0 L26.79 3.2 V32.9 H4.15 L0 29.4 Z" fill="#2e281c" fill-opacity=".55"/><path d="M22.34 0 L26.09 2.8 V32.2 H22.34 V29.4 Z" fill="url(#sr)"/><path d="M0 29.4 L3.75 32.2 H26.09 L22.34 29.4 Z" fill="url(#sb)"/><rect width="22.34" height="29.4" fill="#fdfdfd"/><rect x="1.5" y="1.5" width="19.14" height="26" rx="1.6" fill="url(#fi)"/><path d="M21.79 0 V28.85 H0" fill="none" stroke="#c4c4c7" stroke-width="1.7" stroke-opacity=".75"/><path d="M22.04 0 V29.1 H0" fill="none" stroke="#adadb1" stroke-width=".6"/><text x="2.3" y="6.2" font-family="'Liberation Sans',sans-serif" font-size="4.2" font-weight="700" fill="#111" stroke="#111" stroke-width=".3">N</text><text transform="translate(11.31 22.89) scale(1.61 1.76)" text-anchor="middle" font-family="'Liberation Sans','Noto Sans CJK SC',sans-serif" font-size="10" font-weight="500" fill="#0d0d0d">北</text></g>
<g transform="translate(269.74 81.2)"><path d="M22.34 0 L27.79 4 V33.7 H4.75 L0 29.4 Z" fill="#1a1408" fill-opacity=".3"/><path d="M22.34 0 L26.79 3.2 V32.9 H4.15 L0 29.4 Z" fill="#2e281c" fill-opacity=".55"/><path d="M22.34 0 L26.09 2.8 V32.2 H22.34 V29.4 Z" fill="url(#sr)"/><path d="M0 29.4 L3.75 32.2 H26.09 L22.34 29.4 Z" fill="url(#sb)"/><rect width="22.34" height="29.4" fill="#fdfdfd"/><rect x="1.5" y="1.5" width="19.14" height="26" rx="1.6" fill="url(#fi)"/><path d="M21.79 0 V28.85 H0" fill="none" stroke="#c4c4c7" stroke-width="1.7" stroke-opacity=".75"/><path d="M22.04 0 V29.1 H0" fill="none" stroke="#adadb1" stroke-width=".6"/><text x="2.8" y="6.7" font-family="'Liberation Sans',sans-serif" font-size="4.6" font-weight="700" fill="#111" stroke="#111" stroke-width=".3">7</text><text transform="translate(11.97 7.97) scale(1.04 0.72)" text-anchor="middle" font-family="'Liberation Sans','Noto Sans CJK SC',sans-serif" font-size="10" font-weight="700" fill="#151515">七</text><text transform="translate(11.16 25.4) scale(1.46 1.71)" text-anchor="middle" font-family="'Liberation Sans','Noto Sans CJK SC',sans-serif" font-size="10" font-weight="500" fill="#ab3a12">萬</text></g>
<g transform="translate(292.08 81.2)"><path d="M22.34 0 L27.79 4 V33.7 H4.75 L0 29.4 Z" fill="#1a1408" fill-opacity=".3"/><path d="M22.34 0 L26.79 3.2 V32.9 H4.15 L0 29.4 Z" fill="#2e281c" fill-opacity=".55"/><path d="M22.34 0 L26.09 2.8 V32.2 H22.34 V29.4 Z" fill="url(#sr)"/><path d="M0 29.4 L3.75 32.2 H26.09 L22.34 29.4 Z" fill="url(#sb)"/><rect width="22.34" height="29.4" fill="#fdfdfd"/><rect x="1.5" y="1.5" width="19.14" height="26" rx="1.6" fill="url(#fi)"/><path d="M21.79 0 V28.85 H0" fill="none" stroke="#c4c4c7" stroke-width="1.7" stroke-opacity=".75"/><path d="M22.04 0 V29.1 H0" fill="none" stroke="#adadb1" stroke-width=".6"/><text x="2.8" y="6.7" font-family="'Liberation Sans',sans-serif" font-size="4.6" font-weight="700" fill="#111" stroke="#111" stroke-width=".3">1</text><circle cx="10.9" cy="15.1" r="7.6" fill="#33956a" stroke="#4a4a4a" stroke-width="0.9"/><circle cx="10.9" cy="15.1" r="5.07" fill="none" stroke="#fff" stroke-width="1.7" stroke-dasharray="1.5 .95"/><circle cx="10.9" cy="15.1" r="3.5" fill="#c4623a"/><circle cx="10.9" cy="15.1" r="1.6" fill="none" stroke="#fff" stroke-opacity=".8" stroke-width=".8"/><path d="M10.1 15.1 h1.6 M10.9 14.3 v1.6" stroke="#fff" stroke-opacity=".7" stroke-width=".5"/></g>
<g transform="translate(336.76 81.2)"><path d="M22.34 0 L27.79 4 V33.7 H4.75 L0 29.4 Z" fill="#1a1408" fill-opacity=".3"/><path d="M22.34 0 L26.79 3.2 V32.9 H4.15 L0 29.4 Z" fill="#2e281c" fill-opacity=".55"/><path d="M22.34 0 L26.09 2.8 V32.2 H22.34 V29.4 Z" fill="url(#sr)"/><path d="M0 29.4 L3.75 32.2 H26.09 L22.34 29.4 Z" fill="url(#sb)"/><rect width="22.34" height="29.4" fill="#fdfdfd"/><rect x="1.5" y="1.5" width="19.14" height="26" rx="1.6" fill="url(#fi)"/><path d="M21.79 0 V28.85 H0" fill="none" stroke="#c4c4c7" stroke-width="1.7" stroke-opacity=".75"/><path d="M22.04 0 V29.1 H0" fill="none" stroke="#adadb1" stroke-width=".6"/><text x="2.8" y="6.7" font-family="'Liberation Sans',sans-serif" font-size="4.6" font-weight="700" fill="#111" stroke="#111" stroke-width=".3">8</text><text transform="translate(11.82 9.49) scale(1.12 0.83)" text-anchor="middle" font-family="'Liberation Sans','Noto Sans CJK SC',sans-serif" font-size="10" font-weight="700" fill="#151515">八</text><text transform="translate(11.16 25.4) scale(1.46 1.71)" text-anchor="middle" font-family="'Liberation Sans','Noto Sans CJK SC',sans-serif" font-size="10" font-weight="500" fill="#ab3a12">萬</text></g>
<g transform="translate(359.1 81.2)"><path d="M22.34 0 L27.79 4 V33.7 H4.75 L0 29.4 Z" fill="#1a1408" fill-opacity=".3"/><path d="M22.34 0 L26.79 3.2 V32.9 H4.15 L0 29.4 Z" fill="#2e281c" fill-opacity=".55"/><path d="M22.34 0 L26.09 2.8 V32.2 H22.34 V29.4 Z" fill="url(#sr)"/><path d="M0 29.4 L3.75 32.2 H26.09 L22.34 29.4 Z" fill="url(#sb)"/><rect width="22.34" height="29.4" fill="#fdfdfd"/><rect x="1.5" y="1.5" width="19.14" height="26" rx="1.6" fill="url(#fi)"/><path d="M21.79 0 V28.85 H0" fill="none" stroke="#c4c4c7" stroke-width="1.7" stroke-opacity=".75"/><path d="M22.04 0 V29.1 H0" fill="none" stroke="#adadb1" stroke-width=".6"/><circle cx="6.3" cy="4.2" r="3.3" fill="#5c5c5c"/><path d="M4.12 2.02 L8.48 6.38 M8.48 2.02 L4.12 6.38" stroke="#fff" stroke-opacity=".22" stroke-width="0.66"/><circle cx="15.9" cy="4.2" r="3.3" fill="#5c5c5c"/><path d="M13.72 2.02 L18.08 6.38 M18.08 2.02 L13.72 6.38" stroke="#fff" stroke-opacity=".22" stroke-width="0.66"/><circle cx="6.3" cy="11.2" r="3.3" fill="#5c5c5c"/><path d="M4.12 9.02 L8.48 13.38 M8.48 9.02 L4.12 13.38" stroke="#fff" stroke-opacity=".22" stroke-width="0.66"/><circle cx="15.9" cy="11.2" r="3.3" fill="#5c5c5c"/><path d="M13.72 9.02 L18.08 13.38 M18.08 9.02 L13.72 13.38" stroke="#fff" stroke-opacity=".22" stroke-width="0.66"/><circle cx="6.3" cy="18" r="3.3" fill="#5c5c5c"/><path d="M4.12 15.82 L8.48 20.18 M8.48 15.82 L4.12 20.18" stroke="#fff" stroke-opacity=".22" stroke-width="0.66"/><circle cx="15.9" cy="18" r="3.3" fill="#5c5c5c"/><path d="M13.72 15.82 L18.08 20.18 M18.08 15.82 L13.72 20.18" stroke="#fff" stroke-opacity=".22" stroke-width="0.66"/><circle cx="6.3" cy="24.8" r="3.3" fill="#5c5c5c"/><path d="M4.12 22.62 L8.48 26.98 M8.48 22.62 L4.12 26.98" stroke="#fff" stroke-opacity=".22" stroke-width="0.66"/><circle cx="15.9" cy="24.8" r="3.3" fill="#5c5c5c"/><path d="M13.72 22.62 L18.08 26.98 M18.08 22.62 L13.72 26.98" stroke="#fff" stroke-opacity=".22" stroke-width="0.66"/><text x="9.9" y="6" font-family="'Liberation Sans',sans-serif" font-size="4.2" font-weight="700" fill="#111" stroke="#111" stroke-width=".3">8</text></g>
<g transform="translate(381.44 81.2)"><path d="M22.34 0 L27.79 4 V33.7 H4.75 L0 29.4 Z" fill="#1a1408" fill-opacity=".3"/><path d="M22.34 0 L26.79 3.2 V32.9 H4.15 L0 29.4 Z" fill="#2e281c" fill-opacity=".55"/><path d="M22.34 0 L26.09 2.8 V32.2 H22.34 V29.4 Z" fill="url(#sr)"/><path d="M0 29.4 L3.75 32.2 H26.09 L22.34 29.4 Z" fill="url(#sb)"/><rect width="22.34" height="29.4" fill="#fdfdfd"/><rect x="1.5" y="1.5" width="19.14" height="26" rx="1.6" fill="url(#fi)"/><path d="M21.79 0 V28.85 H0" fill="none" stroke="#c4c4c7" stroke-width="1.7" stroke-opacity=".75"/><path d="M22.04 0 V29.1 H0" fill="none" stroke="#adadb1" stroke-width=".6"/><text x="1.9" y="6" font-family="'Liberation Sans',sans-serif" font-size="4.2" font-weight="700" fill="#111" stroke="#111" stroke-width=".3">7</text><circle cx="4.4" cy="10.5" r="3.2" fill="#33956a"/><path d="M2.29 8.39 L6.51 12.61 M6.51 8.39 L2.29 12.61" stroke="#fff" stroke-opacity=".22" stroke-width="0.64"/><circle cx="10.6" cy="6.9" r="3.2" fill="#33956a"/><path d="M8.49 4.79 L12.71 9.01 M12.71 4.79 L8.49 9.01" stroke="#fff" stroke-opacity=".22" stroke-width="0.64"/><circle cx="17" cy="4.6" r="3.2" fill="#33956a"/><path d="M14.89 2.49 L19.11 6.71 M19.11 2.49 L14.89 6.71" stroke="#fff" stroke-opacity=".22" stroke-width="0.64"/><circle cx="6.4" cy="16.9" r="3.4" fill="#c4623a"/><path d="M4.16 14.66 L8.64 19.14 M8.64 14.66 L4.16 19.14" stroke="#fff" stroke-opacity=".22" stroke-width="0.68"/><circle cx="15.6" cy="16.9" r="3.4" fill="#c4623a"/><path d="M13.36 14.66 L17.84 19.14 M17.84 14.66 L13.36 19.14" stroke="#fff" stroke-opacity=".22" stroke-width="0.68"/><circle cx="6.4" cy="24.1" r="3.4" fill="#c4623a"/><path d="M4.16 21.86 L8.64 26.34 M8.64 21.86 L4.16 26.34" stroke="#fff" stroke-opacity=".22" stroke-width="0.68"/><circle cx="15.6" cy="24.1" r="3.4" fill="#c4623a"/><path d="M13.36 21.86 L17.84 26.34 M17.84 21.86 L13.36 26.34" stroke="#fff" stroke-opacity=".22" stroke-width="0.68"/></g>
<g transform="translate(403.78 81.2)"><path d="M22.34 0 L27.79 4 V33.7 H4.75 L0 29.4 Z" fill="#1a1408" fill-opacity=".3"/><path d="M22.34 0 L26.79 3.2 V32.9 H4.15 L0 29.4 Z" fill="#2e281c" fill-opacity=".55"/><path d="M22.34 0 L26.09 2.8 V32.2 H22.34 V29.4 Z" fill="url(#sr)"/><path d="M0 29.4 L3.75 32.2 H26.09 L22.34 29.4 Z" fill="url(#sb)"/><rect width="22.34" height="29.4" fill="#fdfdfd"/><rect x="1.5" y="1.5" width="19.14" height="26" rx="1.6" fill="url(#fi)"/><path d="M21.79 0 V28.85 H0" fill="none" stroke="#c4c4c7" stroke-width="1.7" stroke-opacity=".75"/><path d="M22.04 0 V29.1 H0" fill="none" stroke="#adadb1" stroke-width=".6"/><text x="2.8" y="6.7" font-family="'Liberation Sans',sans-serif" font-size="4.6" font-weight="700" fill="#111" stroke="#111" stroke-width=".3">5</text><text transform="translate(12.26 8.95) scale(1.18 0.72)" text-anchor="middle" font-family="'Liberation Sans','Noto Sans CJK SC',sans-serif" font-size="10" font-weight="700" fill="#151515">伍</text><text transform="translate(11.16 25.4) scale(1.46 1.71)" text-anchor="middle" font-family="'Liberation Sans','Noto Sans CJK SC',sans-serif" font-size="10" font-weight="500" fill="#ab3a12">萬</text></g>
<g transform="translate(24 110.6)"><path d="M22.34 0 L27.79 4 V33.7 H4.75 L0 29.4 Z" fill="#1a1408" fill-opacity=".3"/><path d="M22.34 0 L26.79 3.2 V32.9 H4.15 L0 29.4 Z" fill="#2e281c" fill-opacity=".55"/><path d="M22.34 0 L26.09 2.8 V32.2 H22.34 V29.4 Z" fill="url(#sr)"/><path d="M0 29.4 L3.75 32.2 H26.09 L22.34 29.4 Z" fill="url(#sb)"/><rect width="22.34" height="29.4" fill="#fdfdfd"/><rect x="1.5" y="1.5" width="19.14" height="26" rx="1.6" fill="url(#fi)"/><path d="M21.79 0 V28.85 H0" fill="none" stroke="#c4c4c7" stroke-width="1.7" stroke-opacity=".75"/><path d="M22.04 0 V29.1 H0" fill="none" stroke="#adadb1" stroke-width=".6"/><circle cx="4" cy="5.2" r="3.1" fill="#33956a"/><path d="M1.95 3.15 L6.05 7.25 M6.05 3.15 L1.95 7.25" stroke="#fff" stroke-opacity=".22" stroke-width="0.62"/><circle cx="10.9" cy="5.2" r="3.1" fill="#33956a"/><path d="M8.85 3.15 L12.95 7.25 M12.95 3.15 L8.85 7.25" stroke="#fff" stroke-opacity=".22" stroke-width="0.62"/><circle cx="17.9" cy="5.2" r="3.1" fill="#33956a"/><path d="M15.85 3.15 L19.95 7.25 M19.95 3.15 L15.85 7.25" stroke="#fff" stroke-opacity=".22" stroke-width="0.62"/><circle cx="4" cy="14.5" r="3.1" fill="#c4623a"/><path d="M1.95 12.45 L6.05 16.55 M6.05 12.45 L1.95 16.55" stroke="#fff" stroke-opacity=".22" stroke-width="0.62"/><circle cx="10.9" cy="14.5" r="3.1" fill="#c4623a"/><path d="M8.85 12.45 L12.95 16.55 M12.95 12.45 L8.85 16.55" stroke="#fff" stroke-opacity=".22" stroke-width="0.62"/><circle cx="17.9" cy="14.5" r="3.1" fill="#c4623a"/><path d="M15.85 12.45 L19.95 16.55 M19.95 12.45 L15.85 16.55" stroke="#fff" stroke-opacity=".22" stroke-width="0.62"/><circle cx="4" cy="24" r="3.1" fill="#5c5c5c"/><path d="M1.95 21.95 L6.05 26.05 M6.05 21.95 L1.95 26.05" stroke="#fff" stroke-opacity=".22" stroke-width="0.62"/><circle cx="10.9" cy="24" r="3.1" fill="#5c5c5c"/><path d="M8.85 21.95 L12.95 26.05 M12.95 21.95 L8.85 26.05" stroke="#fff" stroke-opacity=".22" stroke-width="0.62"/><circle cx="17.9" cy="24" r="3.1" fill="#5c5c5c"/><path d="M15.85 21.95 L19.95 26.05 M19.95 21.95 L15.85 26.05" stroke="#fff" stroke-opacity=".22" stroke-width="0.62"/><text x="6.3" y="11.4" font-family="'Liberation Sans',sans-serif" font-size="4.2" font-weight="700" fill="#111" stroke="#111" stroke-width=".3">9</text></g>
<g transform="translate(46.34 110.6)"><path d="M22.34 0 L27.79 4 V33.7 H4.75 L0 29.4 Z" fill="#1a1408" fill-opacity=".3"/><path d="M22.34 0 L26.79 3.2 V32.9 H4.15 L0 29.4 Z" fill="#2e281c" fill-opacity=".55"/><path d="M22.34 0 L26.09 2.8 V32.2 H22.34 V29.4 Z" fill="url(#sr)"/><path d="M0 29.4 L3.75 32.2 H26.09 L22.34 29.4 Z" fill="url(#sb)"/><rect width="22.34" height="29.4" fill="#fdfdfd"/><rect x="1.5" y="1.5" width="19.14" height="26" rx="1.6" fill="url(#fi)"/><path d="M21.79 0 V28.85 H0" fill="none" stroke="#c4c4c7" stroke-width="1.7" stroke-opacity=".75"/><path d="M22.04 0 V29.1 H0" fill="none" stroke="#adadb1" stroke-width=".6"/><text x="2.1" y="6.7" font-family="'Liberation Sans',sans-serif" font-size="4.6" font-weight="700" fill="#111" stroke="#111" stroke-width=".3">2</text><circle cx="11" cy="8.7" r="4.6" fill="#33956a"/><path d="M7.96 5.66 L14.04 11.74 M14.04 5.66 L7.96 11.74" stroke="#fff" stroke-opacity=".22" stroke-width="0.92"/><circle cx="11" cy="20.5" r="4.6" fill="#5c5c5c"/><path d="M7.96 17.46 L14.04 23.54 M14.04 17.46 L7.96 23.54" stroke="#fff" stroke-opacity=".22" stroke-width="0.92"/></g>
<g transform="translate(68.68 110.6)"><path d="M22.34 0 L27.79 4 V33.7 H4.75 L0 29.4 Z" fill="#1a1408" fill-opacity=".3"/><path d="M22.34 0 L26.79 3.2 V32.9 H4.15 L0 29.4 Z" fill="#2e281c" fill-opacity=".55"/><path d="M22.34 0 L26.09 2.8 V32.2 H22.34 V29.4 Z" fill="url(#sr)"/><path d="M0 29.4 L3.75 32.2 H26.09 L22.34 29.4 Z" fill="url(#sb)"/><rect width="22.34" height="29.4" fill="#fdfdfd"/><rect x="1.5" y="1.5" width="19.14" height="26" rx="1.6" fill="url(#fi)"/><path d="M21.79 0 V28.85 H0" fill="none" stroke="#c4c4c7" stroke-width="1.7" stroke-opacity=".75"/><path d="M22.04 0 V29.1 H0" fill="none" stroke="#adadb1" stroke-width=".6"/><text x="2.8" y="6.7" font-family="'Liberation Sans',sans-serif" font-size="4.6" font-weight="700" fill="#111" stroke="#111" stroke-width=".3">1</text><text transform="translate(11.52 10.7) scale(1.11 1.35)" text-anchor="middle" font-family="'Liberation Sans','Noto Sans CJK SC',sans-serif" font-size="10" font-weight="700" fill="#151515">一</text><text transform="translate(11.16 25.4) scale(1.46 1.71)" text-anchor="middle" font-family="'Liberation Sans','Noto Sans CJK SC',sans-serif" font-size="10" font-weight="500" fill="#ab3a12">萬</text></g>
<g transform="translate(91.02 110.6)"><path d="M22.34 0 L27.79 4 V33.7 H4.75 L0 29.4 Z" fill="#1a1408" fill-opacity=".3"/><path d="M22.34 0 L26.79 3.2 V32.9 H4.15 L0 29.4 Z" fill="#2e281c" fill-opacity=".55"/><path d="M22.34 0 L26.09 2.8 V32.2 H22.34 V29.4 Z" fill="url(#sr)"/><path d="M0 29.4 L3.75 32.2 H26.09 L22.34 29.4 Z" fill="url(#sb)"/><rect width="22.34" height="29.4" fill="#fdfdfd"/><rect x="1.5" y="1.5" width="19.14" height="26" rx="1.6" fill="url(#fi)"/><path d="M21.79 0 V28.85 H0" fill="none" stroke="#c4c4c7" stroke-width="1.7" stroke-opacity=".75"/><path d="M22.04 0 V29.1 H0" fill="none" stroke="#adadb1" stroke-width=".6"/><text x="9.9" y="16.8" font-family="'Liberation Sans',sans-serif" font-size="4.2" font-weight="700" fill="#111" stroke="#111" stroke-width=".3">4</text><circle cx="5.6" cy="6.5" r="4" fill="#33956a"/><circle cx="5.6" cy="6.5" r="2.48" fill="none" stroke="#fff" stroke-opacity=".55" stroke-width="0.8"/><circle cx="5.6" cy="6.5" r="1" fill="none" stroke="#fff" stroke-opacity=".4" stroke-width="0.56"/><circle cx="16.4" cy="6.5" r="4" fill="#5c5c5c"/><circle cx="16.4" cy="6.5" r="2.48" fill="none" stroke="#fff" stroke-opacity=".55" stroke-width="0.8"/><circle cx="16.4" cy="6.5" r="1" fill="none" stroke="#fff" stroke-opacity=".4" stroke-width="0.56"/><circle cx="5.6" cy="22.5" r="4" fill="#5c5c5c"/><circle cx="5.6" cy="22.5" r="2.48" fill="none" stroke="#fff" stroke-opacity=".55" stroke-width="0.8"/><circle cx="5.6" cy="22.5" r="1" fill="none" stroke="#fff" stroke-opacity=".4" stroke-width="0.56"/><circle cx="16.4" cy="22.5" r="4" fill="#33956a"/><circle cx="16.4" cy="22.5" r="2.48" fill="none" stroke="#fff" stroke-opacity=".55" stroke-width="0.8"/><circle cx="16.4" cy="22.5" r="1" fill="none" stroke="#fff" stroke-opacity=".4" stroke-width="0.56"/></g>
<g transform="translate(113.36 110.6)"><path d="M22.34 0 L27.79 4 V33.7 H4.75 L0 29.4 Z" fill="#1a1408" fill-opacity=".3"/><path d="M22.34 0 L26.79 3.2 V32.9 H4.15 L0 29.4 Z" fill="#2e281c" fill-opacity=".55"/><path d="M22.34 0 L26.09 2.8 V32.2 H22.34 V29.4 Z" fill="url(#sr)"/><path d="M0 29.4 L3.75 32.2 H26.09 L22.34 29.4 Z" fill="url(#sb)"/><rect width="22.34" height="29.4" fill="#fdfdfd"/><rect x="1.5" y="1.5" width="19.14" height="26" rx="1.6" fill="url(#fi)"/><path d="M21.79 0 V28.85 H0" fill="none" stroke="#c4c4c7" stroke-width="1.7" stroke-opacity=".75"/><path d="M22.04 0 V29.1 H0" fill="none" stroke="#adadb1" stroke-width=".6"/><text x="1.9" y="6" font-family="'Liberation Sans',sans-serif" font-size="4.2" font-weight="700" fill="#111" stroke="#111" stroke-width=".3">7</text><circle cx="4.4" cy="10.5" r="3.2" fill="#33956a"/><path d="M2.29 8.39 L6.51 12.61 M6.51 8.39 L2.29 12.61" stroke="#fff" stroke-opacity=".22" stroke-width="0.64"/><circle cx="10.6" cy="6.9" r="3.2" fill="#33956a"/><path d="M8.49 4.79 L12.71 9.01 M12.71 4.79 L8.49 9.01" stroke="#fff" stroke-opacity=".22" stroke-width="0.64"/><circle cx="17" cy="4.6" r="3.2" fill="#33956a"/><path d="M14.89 2.49 L19.11 6.71 M19.11 2.49 L14.89 6.71" stroke="#fff" stroke-opacity=".22" stroke-width="0.64"/><circle cx="6.4" cy="16.9" r="3.4" fill="#c4623a"/><path d="M4.16 14.66 L8.64 19.14 M8.64 14.66 L4.16 19.14" stroke="#fff" stroke-opacity=".22" stroke-width="0.68"/><circle cx="15.6" cy="16.9" r="3.4" fill="#c4623a"/><path d="M13.36 14.66 L17.84 19.14 M17.84 14.66 L13.36 19.14" stroke="#fff" stroke-opacity=".22" stroke-width="0.68"/><circle cx="6.4" cy="24.1" r="3.4" fill="#c4623a"/><path d="M4.16 21.86 L8.64 26.34 M8.64 21.86 L4.16 26.34" stroke="#fff" stroke-opacity=".22" stroke-width="0.68"/><circle cx="15.6" cy="24.1" r="3.4" fill="#c4623a"/><path d="M13.36 21.86 L17.84 26.34 M17.84 21.86 L13.36 26.34" stroke="#fff" stroke-opacity=".22" stroke-width="0.68"/></g>
<g transform="translate(158.04 110.6)"><path d="M22.34 0 L27.79 4 V33.7 H4.75 L0 29.4 Z" fill="#1a1408" fill-opacity=".3"/><path d="M22.34 0 L26.79 3.2 V32.9 H4.15 L0 29.4 Z" fill="#2e281c" fill-opacity=".55"/><path d="M22.34 0 L26.09 2.8 V32.2 H22.34 V29.4 Z" fill="url(#sr)"/><path d="M0 29.4 L3.75 32.2 H26.09 L22.34 29.4 Z" fill="url(#sb)"/><rect width="22.34" height="29.4" fill="#fdfdfd"/><rect x="1.5" y="1.5" width="19.14" height="26" rx="1.6" fill="url(#fi)"/><path d="M21.79 0 V28.85 H0" fill="none" stroke="#c4c4c7" stroke-width="1.7" stroke-opacity=".75"/><path d="M22.04 0 V29.1 H0" fill="none" stroke="#adadb1" stroke-width=".6"/><text x="2.8" y="6.7" font-family="'Liberation Sans',sans-serif" font-size="4.6" font-weight="700" fill="#111" stroke="#111" stroke-width=".3">7</text><text transform="translate(11.97 7.97) scale(1.04 0.72)" text-anchor="middle" font-family="'Liberation Sans','Noto Sans CJK SC',sans-serif" font-size="10" font-weight="700" fill="#151515">七</text><text transform="translate(11.16 25.4) scale(1.46 1.71)" text-anchor="middle" font-family="'Liberation Sans','Noto Sans CJK SC',sans-serif" font-size="10" font-weight="500" fill="#ab3a12">萬</text></g>
<g transform="translate(180.38 110.6)"><path d="M22.34 0 L27.79 4 V33.7 H4.75 L0 29.4 Z" fill="#1a1408" fill-opacity=".3"/><path d="M22.34 0 L26.79 3.2 V32.9 H4.15 L0 29.4 Z" fill="#2e281c" fill-opacity=".55"/><path d="M22.34 0 L26.09 2.8 V32.2 H22.34 V29.4 Z" fill="url(#sr)"/><path d="M0 29.4 L3.75 32.2 H26.09 L22.34 29.4 Z" fill="url(#sb)"/><rect width="22.34" height="29.4" fill="#fdfdfd"/><rect x="1.5" y="1.5" width="19.14" height="26" rx="1.6" fill="url(#fi)"/><path d="M21.79 0 V28.85 H0" fill="none" stroke="#c4c4c7" stroke-width="1.7" stroke-opacity=".75"/><path d="M22.04 0 V29.1 H0" fill="none" stroke="#adadb1" stroke-width=".6"/><text x="1.9" y="6" font-family="'Liberation Sans',sans-serif" font-size="4.2" font-weight="700" fill="#111" stroke="#111" stroke-width=".3">7</text><circle cx="4.4" cy="10.5" r="3.2" fill="#33956a"/><path d="M2.29 8.39 L6.51 12.61 M6.51 8.39 L2.29 12.61" stroke="#fff" stroke-opacity=".22" stroke-width="0.64"/><circle cx="10.6" cy="6.9" r="3.2" fill="#33956a"/><path d="M8.49 4.79 L12.71 9.01 M12.71 4.79 L8.49 9.01" stroke="#fff" stroke-opacity=".22" stroke-width="0.64"/><circle cx="17" cy="4.6" r="3.2" fill="#33956a"/><path d="M14.89 2.49 L19.11 6.71 M19.11 2.49 L14.89 6.71" stroke="#fff" stroke-opacity=".22" stroke-width="0.64"/><circle cx="6.4" cy="16.9" r="3.4" fill="#c4623a"/><path d="M4.16 14.66 L8.64 19.14 M8.64 14.66 L4.16 19.14" stroke="#fff" stroke-opacity=".22" stroke-width="0.68"/><circle cx="15.6" cy="16.9" r="3.4" fill="#c4623a"/><path d="M13.36 14.66 L17.84 19.14 M17.84 14.66 L13.36 19.14" stroke="#fff" stroke-opacity=".22" stroke-width="0.68"/><circle cx="6.4" cy="24.1" r="3.4" fill="#c4623a"/><path d="M4.16 21.86 L8.64 26.34 M8.64 21.86 L4.16 26.34" stroke="#fff" stroke-opacity=".22" stroke-width="0.68"/><circle cx="15.6" cy="24.1" r="3.4" fill="#c4623a"/><path d="M13.36 21.86 L17.84 26.34 M17.84 21.86 L13.36 26.34" stroke="#fff" stroke-opacity=".22" stroke-width="0.68"/></g>
<g transform="translate(202.72 110.6)"><path d="M22.34 0 L27.79 4 V33.7 H4.75 L0 29.4 Z" fill="#1a1408" fill-opacity=".3"/><path d="M22.34 0 L26.79 3.2 V32.9 H4.15 L0 29.4 Z" fill="#2e281c" fill-opacity=".55"/><path d="M22.34 0 L26.09 2.8 V32.2 H22.34 V29.4 Z" fill="url(#sr)"/><path d="M0 29.4 L3.75 32.2 H26.09 L22.34 29.4 Z" fill="url(#sb)"/><rect width="22.34" height="29.4" fill="#fdfdfd"/><rect x="1.5" y="1.5" width="19.14" height="26" rx="1.6" fill="url(#fi)"/><path d="M21.79 0 V28.85 H0" fill="none" stroke="#c4c4c7" stroke-width="1.7" stroke-opacity=".75"/><path d="M22.04 0 V29.1 H0" fill="none" stroke="#adadb1" stroke-width=".6"/></g>
<g transform="translate(225.06 110.6)"><path d="M22.34 0 L27.79 4 V33.7 H4.75 L0 29.4 Z" fill="#1a1408" fill-opacity=".3"/><path d="M22.34 0 L26.79 3.2 V32.9 H4.15 L0 29.4 Z" fill="#2e281c" fill-opacity=".55"/><path d="M22.34 0 L26.09 2.8 V32.2 H22.34 V29.4 Z" fill="url(#sr)"/><path d="M0 29.4 L3.75 32.2 H26.09 L22.34 29.4 Z" fill="url(#sb)"/><rect width="22.34" height="29.4" fill="#fdfdfd"/><rect x="1.5" y="1.5" width="19.14" height="26" rx="1.6" fill="url(#fi)"/><path d="M21.79 0 V28.85 H0" fill="none" stroke="#c4c4c7" stroke-width="1.7" stroke-opacity=".75"/><path d="M22.04 0 V29.1 H0" fill="none" stroke="#adadb1" stroke-width=".6"/><rect x="4.15" y="3" width="2.9" height="10.6" rx="1.2" fill="#1f7f48"/><rect x="5" y="3.9" width="1.2" height="8.8" rx=".4" fill="#fff" fill-opacity=".74"/><rect x="4.55" y="7.55" width="2.1" height="1.5" fill="#1f7f48"/><rect x="15.75" y="3" width="2.9" height="10.6" rx="1.2" fill="#1f7f48"/><rect x="16.6" y="3.9" width="1.2" height="8.8" rx=".4" fill="#fff" fill-opacity=".74"/><rect x="16.15" y="7.55" width="2.1" height="1.5" fill="#1f7f48"/><line x1="8" y1="4.1" x2="10.6" y2="9.6" stroke="#1f7f48" stroke-width="2.6" stroke-linecap="round"/><line x1="8" y1="4.1" x2="10.6" y2="9.6" stroke="#fff" stroke-opacity=".8" stroke-width=".8" stroke-dasharray="3 1"/><line x1="14.8" y1="4.1" x2="12.2" y2="9.6" stroke="#1f7f48" stroke-width="2.6" stroke-linecap="round"/><line x1="14.8" y1="4.1" x2="12.2" y2="9.6" stroke="#fff" stroke-opacity=".8" stroke-width=".8" stroke-dasharray="3 1"/><rect x="4.15" y="16.6" width="2.9" height="10.2" rx="1.2" fill="#1f7f48"/><rect x="5" y="17.5" width="1.2" height="8.4" rx=".4" fill="#fff" fill-opacity=".74"/><rect x="4.55" y="20.95" width="2.1" height="1.5" fill="#1f7f48"/><rect x="15.75" y="16.6" width="2.9" height="10.2" rx="1.2" fill="#1f7f48"/><rect x="16.6" y="17.5" width="1.2" height="8.4" rx=".4" fill="#fff" fill-opacity=".74"/><rect x="16.15" y="20.95" width="2.1" height="1.5" fill="#1f7f48"/><line x1="8" y1="25.7" x2="10.6" y2="20.2" stroke="#1f7f48" stroke-width="2.6" stroke-linecap="round"/><line x1="8" y1="25.7" x2="10.6" y2="20.2" stroke="#fff" stroke-opacity=".8" stroke-width=".8" stroke-dasharray="3 1"/><line x1="14.8" y1="25.7" x2="12.2" y2="20.2" stroke="#1f7f48" stroke-width="2.6" stroke-linecap="round"/><line x1="14.8" y1="25.7" x2="12.2" y2="20.2" stroke="#fff" stroke-opacity=".8" stroke-width=".8" stroke-dasharray="3 1"/><text x="10.2" y="16.6" font-family="'Liberation Sans',sans-serif" font-size="3.9" font-weight="700" fill="#111" stroke="#111" stroke-width=".3">8</text></g>
<g transform="translate(247.4 110.6)"><path d="M22.34 0 L27.79 4 V33.7 H4.75 L0 29.4 Z" fill="#1a1408" fill-opacity=".3"/><path d="M22.34 0 L26.79 3.2 V32.9 H4.15 L0 29.4 Z" fill="#2e281c" fill-opacity=".55"/><path d="M22.34 0 L26.09 2.8 V32.2 H22.34 V29.4 Z" fill="url(#sr)"/><path d="M0 29.4 L3.75 32.2 H26.09 L22.34 29.4 Z" fill="url(#sb)"/><rect width="22.34" height="29.4" fill="#fdfdfd"/><rect x="1.5" y="1.5" width="19.14" height="26" rx="1.6" fill="url(#fi)"/><path d="M21.79 0 V28.85 H0" fill="none" stroke="#c4c4c7" stroke-width="1.7" stroke-opacity=".75"/><path d="M22.04 0 V29.1 H0" fill="none" stroke="#adadb1" stroke-width=".6"/><text x="2.4" y="6.5" font-family="'Liberation Sans',sans-serif" font-size="4.4" font-weight="700" fill="#111" stroke="#111" stroke-width=".3">7</text><rect x="9.3" y="2.3" width="3" height="7.4" rx="1.2" fill="#c25a30"/><rect x="10.15" y="3.2" width="1.3" height="5.6" rx=".4" fill="#fff" fill-opacity=".74"/><rect x="9.7" y="5.25" width="2.2" height="1.5" fill="#c25a30"/><rect x="4.15" y="11.1" width="3.1" height="7.4" rx="1.2" fill="#1f7f48"/><rect x="5" y="12" width="1.4" height="5.6" rx=".4" fill="#fff" fill-opacity=".74"/><rect x="4.55" y="14.05" width="2.3" height="1.5" fill="#1f7f48"/><rect x="4.15" y="19.9" width="3.1" height="7.4" rx="1.2" fill="#1f7f48"/><rect x="5" y="20.8" width="1.4" height="5.6" rx=".4" fill="#fff" fill-opacity=".74"/><rect x="4.55" y="22.85" width="2.3" height="1.5" fill="#1f7f48"/><rect x="9.25" y="11.1" width="3.1" height="7.4" rx="1.2" fill="#4d4d4d"/><rect x="10.1" y="12" width="1.4" height="5.6" rx=".4" fill="#fff" fill-opacity=".74"/><rect x="9.65" y="14.05" width="2.3" height="1.5" fill="#4d4d4d"/><rect x="9.25" y="19.9" width="3.1" height="7.4" rx="1.2" fill="#4d4d4d"/><rect x="10.1" y="20.8" width="1.4" height="5.6" rx=".4" fill="#fff" fill-opacity=".74"/><rect x="9.65" y="22.85" width="2.3" height="1.5" fill="#4d4d4d"/><rect x="14.85" y="11.1" width="3.1" height="7.4" rx="1.2" fill="#1f7f48"/><rect x="15.7" y="12" width="1.4" height="5.6" rx=".4" fill="#fff" fill-opacity=".74"/><rect x="15.25" y="14.05" width="2.3" height="1.5" fill="#1f7f48"/><rect x="14.85" y="19.9" width="3.1" height="7.4" rx="1.2" fill="#1f7f48"/><rect x="15.7" y="20.8" width="1.4" height="5.6" rx=".4" fill="#fff" fill-opacity=".74"/><rect x="15.25" y="22.85" width="2.3" height="1.5" fill="#1f7f48"/></g>
<g transform="translate(269.74 110.6)"><path d="M22.34 0 L27.79 4 V33.7 H4.75 L0 29.4 Z" fill="#1a1408" fill-opacity=".3"/><path d="M22.34 0 L26.79 3.2 V32.9 H4.15 L0 29.4 Z" fill="#2e281c" fill-opacity=".55"/><path d="M22.34 0 L26.09 2.8 V32.2 H22.34 V29.4 Z" fill="url(#sr)"/><path d="M0 29.4 L3.75 32.2 H26.09 L22.34 29.4 Z" fill="url(#sb)"/><rect width="22.34" height="29.4" fill="#fdfdfd"/><rect x="1.5" y="1.5" width="19.14" height="26" rx="1.6" fill="url(#fi)"/><path d="M21.79 0 V28.85 H0" fill="none" stroke="#c4c4c7" stroke-width="1.7" stroke-opacity=".75"/><path d="M22.04 0 V29.1 H0" fill="none" stroke="#adadb1" stroke-width=".6"/><text x="2.8" y="6.7" font-family="'Liberation Sans',sans-serif" font-size="4.6" font-weight="700" fill="#111" stroke="#111" stroke-width=".3">2</text><text transform="translate(11.8 8.37) scale(1.17 0.67)" text-anchor="middle" font-family="'Liberation Sans','Noto Sans CJK SC',sans-serif" font-size="10" font-weight="700" fill="#151515">二</text><text transform="translate(11.16 25.4) scale(1.46 1.71)" text-anchor="middle" font-family="'Liberation Sans','Noto Sans CJK SC',sans-serif" font-size="10" font-weight="500" fill="#ab3a12">萬</text></g>
<g transform="translate(292.08 110.6)"><path d="M22.34 0 L27.79 4 V33.7 H4.75 L0 29.4 Z" fill="#1a1408" fill-opacity=".3"/><path d="M22.34 0 L26.79 3.2 V32.9 H4.15 L0 29.4 Z" fill="#2e281c" fill-opacity=".55"/><path d="M22.34 0 L26.09 2.8 V32.2 H22.34 V29.4 Z" fill="url(#sr)"/><path d="M0 29.4 L3.75 32.2 H26.09 L22.34 29.4 Z" fill="url(#sb)"/><rect width="22.34" height="29.4" fill="#fdfdfd"/><rect x="1.5" y="1.5" width="19.14" height="26" rx="1.6" fill="url(#fi)"/><path d="M21.79 0 V28.85 H0" fill="none" stroke="#c4c4c7" stroke-width="1.7" stroke-opacity=".75"/><path d="M22.04 0 V29.1 H0" fill="none" stroke="#adadb1" stroke-width=".6"/><text x="1.6" y="16.6" font-family="'Liberation Sans',sans-serif" font-size="4.2" font-weight="700" fill="#111" stroke="#111" stroke-width=".3">5</text><circle cx="5.6" cy="6.5" r="3.8" fill="#33956a"/><circle cx="5.6" cy="6.5" r="2.36" fill="none" stroke="#fff" stroke-opacity=".55" stroke-width="0.76"/><circle cx="5.6" cy="6.5" r="0.95" fill="none" stroke="#fff" stroke-opacity=".4" stroke-width="0.53"/><circle cx="16.4" cy="6.5" r="3.8" fill="#5c5c5c"/><circle cx="16.4" cy="6.5" r="2.36" fill="none" stroke="#fff" stroke-opacity=".55" stroke-width="0.76"/><circle cx="16.4" cy="6.5" r="0.95" fill="none" stroke="#fff" stroke-opacity=".4" stroke-width="0.53"/><circle cx="11" cy="14.5" r="3.8" fill="#c4623a"/><circle cx="11" cy="14.5" r="2.36" fill="none" stroke="#fff" stroke-opacity=".55" stroke-width="0.76"/><circle cx="11" cy="14.5" r="0.95" fill="none" stroke="#fff" stroke-opacity=".4" stroke-width="0.53"/><circle cx="5.6" cy="22.5" r="3.8" fill="#5c5c5c"/><circle cx="5.6" cy="22.5" r="2.36" fill="none" stroke="#fff" stroke-opacity=".55" stroke-width="0.76"/><circle cx="5.6" cy="22.5" r="0.95" fill="none" stroke="#fff" stroke-opacity=".4" stroke-width="0.53"/><circle cx="16.4" cy="22.5" r="3.8" fill="#33956a"/><circle cx="16.4" cy="22.5" r="2.36" fill="none" stroke="#fff" stroke-opacity=".55" stroke-width="0.76"/><circle cx="16.4" cy="22.5" r="0.95" fill="none" stroke="#fff" stroke-opacity=".4" stroke-width="0.53"/></g>
<g transform="translate(336.76 110.6)"><path d="M22.34 0 L27.79 4 V33.7 H4.75 L0 29.4 Z" fill="#1a1408" fill-opacity=".3"/><path d="M22.34 0 L26.79 3.2 V32.9 H4.15 L0 29.4 Z" fill="#2e281c" fill-opacity=".55"/><path d="M22.34 0 L26.09 2.8 V32.2 H22.34 V29.4 Z" fill="url(#sr)"/><path d="M0 29.4 L3.75 32.2 H26.09 L22.34 29.4 Z" fill="url(#sb)"/><rect width="22.34" height="29.4" fill="#fdfdfd"/><rect x="1.5" y="1.5" width="19.14" height="26" rx="1.6" fill="url(#fi)"/><path d="M21.79 0 V28.85 H0" fill="none" stroke="#c4c4c7" stroke-width="1.7" stroke-opacity=".75"/><path d="M22.04 0 V29.1 H0" fill="none" stroke="#adadb1" stroke-width=".6"/><text x="2.8" y="6.7" font-family="'Liberation Sans',sans-serif" font-size="4.6" font-weight="700" fill="#111" stroke="#111" stroke-width=".3">4</text><text transform="translate(12.23 7.56) scale(1.35 0.61)" text-anchor="middle" font-family="'Liberation Sans','Noto Sans CJK SC',sans-serif" font-size="10" font-weight="700" fill="#151515">四</text><text transform="translate(11.16 25.4) scale(1.46 1.71)" text-anchor="middle" font-family="'Liberation Sans','Noto Sans CJK SC',sans-serif" font-size="10" font-weight="500" fill="#ab3a12">萬</text></g>
<g transform="translate(359.1 110.6)"><path d="M22.34 0 L27.79 4 V33.7 H4.75 L0 29.4 Z" fill="#1a1408" fill-opacity=".3"/><path d="M22.34 0 L26.79 3.2 V32.9 H4.15 L0 29.4 Z" fill="#2e281c" fill-opacity=".55"/><path d="M22.34 0 L26.09 2.8 V32.2 H22.34 V29.4 Z" fill="url(#sr)"/><path d="M0 29.4 L3.75 32.2 H26.09 L22.34 29.4 Z" fill="url(#sb)"/><rect width="22.34" height="29.4" fill="#fdfdfd"/><rect x="1.5" y="1.5" width="19.14" height="26" rx="1.6" fill="url(#fi)"/><path d="M21.79 0 V28.85 H0" fill="none" stroke="#c4c4c7" stroke-width="1.7" stroke-opacity=".75"/><path d="M22.04 0 V29.1 H0" fill="none" stroke="#adadb1" stroke-width=".6"/><text x="2.3" y="6.2" font-family="'Liberation Sans',sans-serif" font-size="4.2" font-weight="700" fill="#111" stroke="#111" stroke-width=".3">S</text><text transform="translate(11.05 23.62) scale(1.79 2.12)" text-anchor="middle" font-family="'Liberation Sans','Noto Sans CJK SC',sans-serif" font-size="10" font-weight="500" fill="#0d0d0d">南</text></g>
<g transform="translate(381.44 110.6)"><path d="M22.34 0 L27.79 4 V33.7 H4.75 L0 29.4 Z" fill="#1a1408" fill-opacity=".3"/><path d="M22.34 0 L26.79 3.2 V32.9 H4.15 L0 29.4 Z" fill="#2e281c" fill-opacity=".55"/><path d="M22.34 0 L26.09 2.8 V32.2 H22.34 V29.4 Z" fill="url(#sr)"/><path d="M0 29.4 L3.75 32.2 H26.09 L22.34 29.4 Z" fill="url(#sb)"/><rect width="22.34" height="29.4" fill="#fdfdfd"/><rect x="1.5" y="1.5" width="19.14" height="26" rx="1.6" fill="url(#fi)"/><path d="M21.79 0 V28.85 H0" fill="none" stroke="#c4c4c7" stroke-width="1.7" stroke-opacity=".75"/><path d="M22.04 0 V29.1 H0" fill="none" stroke="#adadb1" stroke-width=".6"/><text x="2.8" y="6.7" font-family="'Liberation Sans',sans-serif" font-size="4.6" font-weight="700" fill="#111" stroke="#111" stroke-width=".3">9</text><text transform="translate(11.47 9.8) scale(1.07 0.77)" text-anchor="middle" font-family="'Liberation Sans','Noto Sans CJK SC',sans-serif" font-size="10" font-weight="700" fill="#151515">九</text><text transform="translate(11.16 25.4) scale(1.46 1.71)" text-anchor="middle" font-family="'Liberation Sans','Noto Sans CJK SC',sans-serif" font-size="10" font-weight="500" fill="#ab3a12">萬</text></g>
<g transform="translate(403.78 110.6)"><path d="M22.34 0 L27.79 4 V33.7 H4.75 L0 29.4 Z" fill="#1a1408" fill-opacity=".3"/><path d="M22.34 0 L26.79 3.2 V32.9 H4.15 L0 29.4 Z" fill="#2e281c" fill-opacity=".55"/><path d="M22.34 0 L26.09 2.8 V32.2 H22.34 V29.4 Z" fill="url(#sr)"/><path d="M0 29.4 L3.75 32.2 H26.09 L22.34 29.4 Z" fill="url(#sb)"/><rect width="22.34" height="29.4" fill="#fdfdfd"/><rect x="1.5" y="1.5" width="19.14" height="26" rx="1.6" fill="url(#fi)"/><path d="M21.79 0 V28.85 H0" fill="none" stroke="#c4c4c7" stroke-width="1.7" stroke-opacity=".75"/><path d="M22.04 0 V29.1 H0" fill="none" stroke="#adadb1" stroke-width=".6"/><text x="2.4" y="6.5" font-family="'Liberation Sans',sans-serif" font-size="4.4" font-weight="700" fill="#111" stroke="#111" stroke-width=".3">7</text><rect x="9.3" y="2.3" width="3" height="7.4" rx="1.2" fill="#c25a30"/><rect x="10.15" y="3.2" width="1.3" height="5.6" rx=".4" fill="#fff" fill-opacity=".74"/><rect x="9.7" y="5.25" width="2.2" height="1.5" fill="#c25a30"/><rect x="4.15" y="11.1" width="3.1" height="7.4" rx="1.2" fill="#1f7f48"/><rect x="5" y="12" width="1.4" height="5.6" rx=".4" fill="#fff" fill-opacity=".74"/><rect x="4.55" y="14.05" width="2.3" height="1.5" fill="#1f7f48"/><rect x="4.15" y="19.9" width="3.1" height="7.4" rx="1.2" fill="#1f7f48"/><rect x="5" y="20.8" width="1.4" height="5.6" rx=".4" fill="#fff" fill-opacity=".74"/><rect x="4.55" y="22.85" width="2.3" height="1.5" fill="#1f7f48"/><rect x="9.25" y="11.1" width="3.1" height="7.4" rx="1.2" fill="#4d4d4d"/><rect x="10.1" y="12" width="1.4" height="5.6" rx=".4" fill="#fff" fill-opacity=".74"/><rect x="9.65" y="14.05" width="2.3" height="1.5" fill="#4d4d4d"/><rect x="9.25" y="19.9" width="3.1" height="7.4" rx="1.2" fill="#4d4d4d"/><rect x="10.1" y="20.8" width="1.4" height="5.6" rx=".4" fill="#fff" fill-opacity=".74"/><rect x="9.65" y="22.85" width="2.3" height="1.5" fill="#4d4d4d"/><rect x="14.85" y="11.1" width="3.1" height="7.4" rx="1.2" fill="#1f7f48"/><rect x="15.7" y="12" width="1.4" height="5.6" rx=".4" fill="#fff" fill-opacity=".74"/><rect x="15.25" y="14.05" width="2.3" height="1.5" fill="#1f7f48"/><rect x="14.85" y="19.9" width="3.1" height="7.4" rx="1.2" fill="#1f7f48"/><rect x="15.7" y="20.8" width="1.4" height="5.6" rx=".4" fill="#fff" fill-opacity=".74"/><rect x="15.25" y="22.85" width="2.3" height="1.5" fill="#1f7f48"/></g>
<g transform="translate(24 140)"><path d="M22.34 0 L27.79 4 V33.7 H4.75 L0 29.4 Z" fill="#1a1408" fill-opacity=".3"/><path d="M22.34 0 L26.79 3.2 V32.9 H4.15 L0 29.4 Z" fill="#2e281c" fill-opacity=".55"/><path d="M22.34 0 L26.09 2.8 V32.2 H22.34 V29.4 Z" fill="url(#sr)"/><path d="M0 29.4 L3.75 32.2 H26.09 L22.34 29.4 Z" fill="url(#sb)"/><rect width="22.34" height="29.4" fill="#fdfdfd"/><rect x="1.5" y="1.5" width="19.14" height="26" rx="1.6" fill="url(#fi)"/><path d="M21.79 0 V28.85 H0" fill="none" stroke="#c4c4c7" stroke-width="1.7" stroke-opacity=".75"/><path d="M22.04 0 V29.1 H0" fill="none" stroke="#adadb1" stroke-width=".6"/><text x="2.3" y="6.2" font-family="'Liberation Sans',sans-serif" font-size="4.2" font-weight="700" fill="#111" stroke="#111" stroke-width=".3">S</text><text transform="translate(11.05 23.62) scale(1.79 2.12)" text-anchor="middle" font-family="'Liberation Sans','Noto Sans CJK SC',sans-serif" font-size="10" font-weight="500" fill="#0d0d0d">南</text></g>
<g transform="translate(46.34 140)"><path d="M22.34 0 L27.79 4 V33.7 H4.75 L0 29.4 Z" fill="#1a1408" fill-opacity=".3"/><path d="M22.34 0 L26.79 3.2 V32.9 H4.15 L0 29.4 Z" fill="#2e281c" fill-opacity=".55"/><path d="M22.34 0 L26.09 2.8 V32.2 H22.34 V29.4 Z" fill="url(#sr)"/><path d="M0 29.4 L3.75 32.2 H26.09 L22.34 29.4 Z" fill="url(#sb)"/><rect width="22.34" height="29.4" fill="#fdfdfd"/><rect x="1.5" y="1.5" width="19.14" height="26" rx="1.6" fill="url(#fi)"/><path d="M21.79 0 V28.85 H0" fill="none" stroke="#c4c4c7" stroke-width="1.7" stroke-opacity=".75"/><path d="M22.04 0 V29.1 H0" fill="none" stroke="#adadb1" stroke-width=".6"/><text x="2.8" y="6.7" font-family="'Liberation Sans',sans-serif" font-size="4.6" font-weight="700" fill="#111" stroke="#111" stroke-width=".3">5</text><text transform="translate(12.26 8.95) scale(1.18 0.72)" text-anchor="middle" font-family="'Liberation Sans','Noto Sans CJK SC',sans-serif" font-size="10" font-weight="700" fill="#151515">伍</text><text transform="translate(11.16 25.4) scale(1.46 1.71)" text-anchor="middle" font-family="'Liberation Sans','Noto Sans CJK SC',sans-serif" font-size="10" font-weight="500" fill="#ab3a12">萬</text></g>
<g transform="translate(68.68 140)"><path d="M22.34 0 L27.79 4 V33.7 H4.75 L0 29.4 Z" fill="#1a1408" fill-opacity=".3"/><path d="M22.34 0 L26.79 3.2 V32.9 H4.15 L0 29.4 Z" fill="#2e281c" fill-opacity=".55"/><path d="M22.34 0 L26.09 2.8 V32.2 H22.34 V29.4 Z" fill="url(#sr)"/><path d="M0 29.4 L3.75 32.2 H26.09 L22.34 29.4 Z" fill="url(#sb)"/><rect width="22.34" height="29.4" fill="#fdfdfd"/><rect x="1.5" y="1.5" width="19.14" height="26" rx="1.6" fill="url(#fi)"/><path d="M21.79 0 V28.85 H0" fill="none" stroke="#c4c4c7" stroke-width="1.7" stroke-opacity=".75"/><path d="M22.04 0 V29.1 H0" fill="none" stroke="#adadb1" stroke-width=".6"/><text x="1.6" y="16.6" font-family="'Liberation Sans',sans-serif" font-size="4.2" font-weight="700" fill="#111" stroke="#111" stroke-width=".3">5</text><circle cx="5.6" cy="6.5" r="3.8" fill="#33956a"/><circle cx="5.6" cy="6.5" r="2.36" fill="none" stroke="#fff" stroke-opacity=".55" stroke-width="0.76"/><circle cx="5.6" cy="6.5" r="0.95" fill="none" stroke="#fff" stroke-opacity=".4" stroke-width="0.53"/><circle cx="16.4" cy="6.5" r="3.8" fill="#5c5c5c"/><circle cx="16.4" cy="6.5" r="2.36" fill="none" stroke="#fff" stroke-opacity=".55" stroke-width="0.76"/><circle cx="16.4" cy="6.5" r="0.95" fill="none" stroke="#fff" stroke-opacity=".4" stroke-width="0.53"/><circle cx="11" cy="14.5" r="3.8" fill="#c4623a"/><circle cx="11" cy="14.5" r="2.36" fill="none" stroke="#fff" stroke-opacity=".55" stroke-width="0.76"/><circle cx="11" cy="14.5" r="0.95" fill="none" stroke="#fff" stroke-opacity=".4" stroke-width="0.53"/><circle cx="5.6" cy="22.5" r="3.8" fill="#5c5c5c"/><circle cx="5.6" cy="22.5" r="2.36" fill="none" stroke="#fff" stroke-opacity=".55" stroke-width="0.76"/><circle cx="5.6" cy="22.5" r="0.95" fill="none" stroke="#fff" stroke-opacity=".4" stroke-width="0.53"/><circle cx="16.4" cy="22.5" r="3.8" fill="#33956a"/><circle cx="16.4" cy="22.5" r="2.36" fill="none" stroke="#fff" stroke-opacity=".55" stroke-width="0.76"/><circle cx="16.4" cy="22.5" r="0.95" fill="none" stroke="#fff" stroke-opacity=".4" stroke-width="0.53"/></g>
<g transform="translate(91.02 140)"><path d="M22.34 0 L27.79 4 V33.7 H4.75 L0 29.4 Z" fill="#1a1408" fill-opacity=".3"/><path d="M22.34 0 L26.79 3.2 V32.9 H4.15 L0 29.4 Z" fill="#2e281c" fill-opacity=".55"/><path d="M22.34 0 L26.09 2.8 V32.2 H22.34 V29.4 Z" fill="url(#sr)"/><path d="M0 29.4 L3.75 32.2 H26.09 L22.34 29.4 Z" fill="url(#sb)"/><rect width="22.34" height="29.4" fill="#fdfdfd"/><rect x="1.5" y="1.5" width="19.14" height="26" rx="1.6" fill="url(#fi)"/><path d="M21.79 0 V28.85 H0" fill="none" stroke="#c4c4c7" stroke-width="1.7" stroke-opacity=".75"/><path d="M22.04 0 V29.1 H0" fill="none" stroke="#adadb1" stroke-width=".6"/><text x="1.9" y="6.5" font-family="'Liberation Sans',sans-serif" font-size="4.4" font-weight="700" fill="#111" stroke="#111" stroke-width=".3">5</text><rect x="4.75" y="2.8" width="3.3" height="10.5" rx="1.2" fill="#1f7f48"/><rect x="5.6" y="3.7" width="1.6" height="8.7" rx=".4" fill="#fff" fill-opacity=".74"/><rect x="5.15" y="7.3" width="2.5" height="1.5" fill="#1f7f48"/><rect x="4.75" y="16.2" width="3.3" height="10.6" rx="1.2" fill="#1f7f48"/><rect x="5.6" y="17.1" width="1.6" height="8.8" rx=".4" fill="#fff" fill-opacity=".74"/><rect x="5.15" y="20.75" width="2.5" height="1.5" fill="#1f7f48"/><rect x="13.85" y="2.8" width="3.3" height="10.5" rx="1.2" fill="#1f7f48"/><rect x="14.7" y="3.7" width="1.6" height="8.7" rx=".4" fill="#fff" fill-opacity=".74"/><rect x="14.25" y="7.3" width="2.5" height="1.5" fill="#1f7f48"/><rect x="13.85" y="16.2" width="3.3" height="10.6" rx="1.2" fill="#1f7f48"/><rect x="14.7" y="17.1" width="1.6" height="8.8" rx=".4" fill="#fff" fill-opacity=".74"/><rect x="14.25" y="20.75" width="2.5" height="1.5" fill="#1f7f48"/><rect x="9.65" y="9" width="2.5" height="10.8" rx="1.2" fill="#c25a30"/><rect x="10.5" y="9.9" width="0.8" height="9" rx=".4" fill="#fff" fill-opacity=".74"/><rect x="10.05" y="13.65" width="1.7" height="1.5" fill="#c25a30"/></g>
<g transform="translate(113.36 140)"><path d="M22.34 0 L27.79 4 V33.7 H4.75 L0 29.4 Z" fill="#1a1408" fill-opacity=".3"/><path d="M22.34 0 L26.79 3.2 V32.9 H4.15 L0 29.4 Z" fill="#2e281c" fill-opacity=".55"/><path d="M22.34 0 L26.09 2.8 V32.2 H22.34 V29.4 Z" fill="url(#sr)"/><path d="M0 29.4 L3.75 32.2 H26.09 L22.34 29.4 Z" fill="url(#sb)"/><rect width="22.34" height="29.4" fill="#fdfdfd"/><rect x="1.5" y="1.5" width="19.14" height="26" rx="1.6" fill="url(#fi)"/><path d="M21.79 0 V28.85 H0" fill="none" stroke="#c4c4c7" stroke-width="1.7" stroke-opacity=".75"/><path d="M22.04 0 V29.1 H0" fill="none" stroke="#adadb1" stroke-width=".6"/><text x="2" y="6" font-family="'Liberation Sans',sans-serif" font-size="4.3" font-weight="700" fill="#111" stroke="#111" stroke-width=".3">2</text><text transform="translate(17.59 7.28) scale(0.49 0.61)" text-anchor="middle" font-family="'Liberation Sans','Noto Sans CJK SC',sans-serif" font-size="10" font-weight="700" fill="#c24e22">夏</text><rect x="6.7" y="23.4" width="9.4" height="3.2" fill="#fff" stroke="#2a7440" stroke-width="1.15"/><path d="M11.4 23 L11 19.6 M12.6 23 L12.8 19.8 M8.6 15.6 L7.4 9" stroke="#3a3a3a" stroke-width=".75" fill="none"/><ellipse cx="7.3" cy="6.3" rx="2.2" ry="2.8" fill="#fff" stroke="#c4562a" stroke-width=".95"/><path d="M6.2 7.6 Q7.3 4.6 8.5 7.6 M7.3 3.6 V5.4" stroke="#c4562a" stroke-width=".55" fill="none"/><ellipse cx="7.25" cy="15.3" rx="3.3" ry="1.25" transform="rotate(-165 7.25 15.3)" fill="#fff" stroke="#c4562a" stroke-width=".8"/><ellipse cx="13.95" cy="15.3" rx="3.3" ry="1.25" transform="rotate(-15 13.95 15.3)" fill="#fff" stroke="#c4562a" stroke-width=".8"/><ellipse cx="7.84" cy="17.21" rx="2.8" ry="1.15" transform="rotate(160 7.84 17.21)" fill="#fff" stroke="#c4562a" stroke-width=".8"/><ellipse cx="13.36" cy="17.21" rx="2.8" ry="1.15" transform="rotate(20 13.36 17.21)" fill="#fff" stroke="#c4562a" stroke-width=".8"/><ellipse cx="8.44" cy="13.63" rx="3.2" ry="1.35" transform="rotate(-130 8.44 13.63)" fill="#fff" stroke="#c4562a" stroke-width=".8"/><ellipse cx="12.76" cy="13.63" rx="3.2" ry="1.35" transform="rotate(-50 12.76 13.63)" fill="#fff" stroke="#c4562a" stroke-width=".8"/><ellipse cx="10.6" cy="12.73" rx="3.3" ry="1.5" transform="rotate(-90 10.6 12.73)" fill="#fff" stroke="#c4562a" stroke-width=".8"/><ellipse cx="9.21" cy="18.18" rx="2.3" ry="1" transform="rotate(125 9.21 18.18)" fill="#fff" stroke="#c4562a" stroke-width=".8"/><ellipse cx="11.99" cy="18.18" rx="2.3" ry="1" transform="rotate(55 11.99 18.18)" fill="#fff" stroke="#c4562a" stroke-width=".8"/><circle cx="10.6" cy="15.8" r="1.1" fill="#fff" stroke="#c4562a" stroke-width=".6"/></g>
<g transform="translate(135.7 140)"><path d="M22.34 0 L27.79 4 V33.7 H4.75 L0 29.4 Z" fill="#1a1408" fill-opacity=".3"/><path d="M22.34 0 L26.79 3.2 V32.9 H4.15 L0 29.4 Z" fill="#2e281c" fill-opacity=".55"/><path d="M22.34 0 L26.09 2.8 V32.2 H22.34 V29.4 Z" fill="url(#sr)"/><path d="M0 29.4 L3.75 32.2 H26.09 L22.34 29.4 Z" fill="url(#sb)"/><rect width="22.34" height="29.4" fill="#fdfdfd"/><rect x="1.5" y="1.5" width="19.14" height="26" rx="1.6" fill="url(#fi)"/><path d="M21.79 0 V28.85 H0" fill="none" stroke="#c4c4c7" stroke-width="1.7" stroke-opacity=".75"/><path d="M22.04 0 V29.1 H0" fill="none" stroke="#adadb1" stroke-width=".6"/><text x="2.4" y="6.5" font-family="'Liberation Sans',sans-serif" font-size="4.4" font-weight="700" fill="#111" stroke="#111" stroke-width=".3">7</text><rect x="9.3" y="2.3" width="3" height="7.4" rx="1.2" fill="#c25a30"/><rect x="10.15" y="3.2" width="1.3" height="5.6" rx=".4" fill="#fff" fill-opacity=".74"/><rect x="9.7" y="5.25" width="2.2" height="1.5" fill="#c25a30"/><rect x="4.15" y="11.1" width="3.1" height="7.4" rx="1.2" fill="#1f7f48"/><rect x="5" y="12" width="1.4" height="5.6" rx=".4" fill="#fff" fill-opacity=".74"/><rect x="4.55" y="14.05" width="2.3" height="1.5" fill="#1f7f48"/><rect x="4.15" y="19.9" width="3.1" height="7.4" rx="1.2" fill="#1f7f48"/><rect x="5" y="20.8" width="1.4" height="5.6" rx=".4" fill="#fff" fill-opacity=".74"/><rect x="4.55" y="22.85" width="2.3" height="1.5" fill="#1f7f48"/><rect x="9.25" y="11.1" width="3.1" height="7.4" rx="1.2" fill="#4d4d4d"/><rect x="10.1" y="12" width="1.4" height="5.6" rx=".4" fill="#fff" fill-opacity=".74"/><rect x="9.65" y="14.05" width="2.3" height="1.5" fill="#4d4d4d"/><rect x="9.25" y="19.9" width="3.1" height="7.4" rx="1.2" fill="#4d4d4d"/><rect x="10.1" y="20.8" width="1.4" height="5.6" rx=".4" fill="#fff" fill-opacity=".74"/><rect x="9.65" y="22.85" width="2.3" height="1.5" fill="#4d4d4d"/><rect x="14.85" y="11.1" width="3.1" height="7.4" rx="1.2" fill="#1f7f48"/><rect x="15.7" y="12" width="1.4" height="5.6" rx=".4" fill="#fff" fill-opacity=".74"/><rect x="15.25" y="14.05" width="2.3" height="1.5" fill="#1f7f48"/><rect x="14.85" y="19.9" width="3.1" height="7.4" rx="1.2" fill="#1f7f48"/><rect x="15.7" y="20.8" width="1.4" height="5.6" rx=".4" fill="#fff" fill-opacity=".74"/><rect x="15.25" y="22.85" width="2.3" height="1.5" fill="#1f7f48"/></g>
<g transform="translate(158.04 140)"><path d="M22.34 0 L27.79 4 V33.7 H4.75 L0 29.4 Z" fill="#1a1408" fill-opacity=".3"/><path d="M22.34 0 L26.79 3.2 V32.9 H4.15 L0 29.4 Z" fill="#2e281c" fill-opacity=".55"/><path d="M22.34 0 L26.09 2.8 V32.2 H22.34 V29.4 Z" fill="url(#sr)"/><path d="M0 29.4 L3.75 32.2 H26.09 L22.34 29.4 Z" fill="url(#sb)"/><rect width="22.34" height="29.4" fill="#fdfdfd"/><rect x="1.5" y="1.5" width="19.14" height="26" rx="1.6" fill="url(#fi)"/><path d="M21.79 0 V28.85 H0" fill="none" stroke="#c4c4c7" stroke-width="1.7" stroke-opacity=".75"/><path d="M22.04 0 V29.1 H0" fill="none" stroke="#adadb1" stroke-width=".6"/><circle cx="4" cy="5.2" r="3.1" fill="#33956a"/><path d="M1.95 3.15 L6.05 7.25 M6.05 3.15 L1.95 7.25" stroke="#fff" stroke-opacity=".22" stroke-width="0.62"/><circle cx="10.9" cy="5.2" r="3.1" fill="#33956a"/><path d="M8.85 3.15 L12.95 7.25 M12.95 3.15 L8.85 7.25" stroke="#fff" stroke-opacity=".22" stroke-width="0.62"/><circle cx="17.9" cy="5.2" r="3.1" fill="#33956a"/><path d="M15.85 3.15 L19.95 7.25 M19.95 3.15 L15.85 7.25" stroke="#fff" stroke-opacity=".22" stroke-width="0.62"/><circle cx="4" cy="14.5" r="3.1" fill="#c4623a"/><path d="M1.95 12.45 L6.05 16.55 M6.05 12.45 L1.95 16.55" stroke="#fff" stroke-opacity=".22" stroke-width="0.62"/><circle cx="10.9" cy="14.5" r="3.1" fill="#c4623a"/><path d="M8.85 12.45 L12.95 16.55 M12.95 12.45 L8.85 16.55" stroke="#fff" stroke-opacity=".22" stroke-width="0.62"/><circle cx="17.9" cy="14.5" r="3.1" fill="#c4623a"/><path d="M15.85 12.45 L19.95 16.55 M19.95 12.45 L15.85 16.55" stroke="#fff" stroke-opacity=".22" stroke-width="0.62"/><circle cx="4" cy="24" r="3.1" fill="#5c5c5c"/><path d="M1.95 21.95 L6.05 26.05 M6.05 21.95 L1.95 26.05" stroke="#fff" stroke-opacity=".22" stroke-width="0.62"/><circle cx="10.9" cy="24" r="3.1" fill="#5c5c5c"/><path d="M8.85 21.95 L12.95 26.05 M12.95 21.95 L8.85 26.05" stroke="#fff" stroke-opacity=".22" stroke-width="0.62"/><circle cx="17.9" cy="24" r="3.1" fill="#5c5c5c"/><path d="M15.85 21.95 L19.95 26.05 M19.95 21.95 L15.85 26.05" stroke="#fff" stroke-opacity=".22" stroke-width="0.62"/><text x="6.3" y="11.4" font-family="'Liberation Sans',sans-serif" font-size="4.2" font-weight="700" fill="#111" stroke="#111" stroke-width=".3">9</text></g>
<g transform="translate(180.38 140)"><path d="M22.34 0 L27.79 4 V33.7 H4.75 L0 29.4 Z" fill="#1a1408" fill-opacity=".3"/><path d="M22.34 0 L26.79 3.2 V32.9 H4.15 L0 29.4 Z" fill="#2e281c" fill-opacity=".55"/><path d="M22.34 0 L26.09 2.8 V32.2 H22.34 V29.4 Z" fill="url(#sr)"/><path d="M0 29.4 L3.75 32.2 H26.09 L22.34 29.4 Z" fill="url(#sb)"/><rect width="22.34" height="29.4" fill="#fdfdfd"/><rect x="1.5" y="1.5" width="19.14" height="26" rx="1.6" fill="url(#fi)"/><path d="M21.79 0 V28.85 H0" fill="none" stroke="#c4c4c7" stroke-width="1.7" stroke-opacity=".75"/><path d="M22.04 0 V29.1 H0" fill="none" stroke="#adadb1" stroke-width=".6"/><rect x="4.15" y="3" width="2.9" height="10.6" rx="1.2" fill="#1f7f48"/><rect x="5" y="3.9" width="1.2" height="8.8" rx=".4" fill="#fff" fill-opacity=".74"/><rect x="4.55" y="7.55" width="2.1" height="1.5" fill="#1f7f48"/><rect x="15.75" y="3" width="2.9" height="10.6" rx="1.2" fill="#1f7f48"/><rect x="16.6" y="3.9" width="1.2" height="8.8" rx=".4" fill="#fff" fill-opacity=".74"/><rect x="16.15" y="7.55" width="2.1" height="1.5" fill="#1f7f48"/><line x1="8" y1="4.1" x2="10.6" y2="9.6" stroke="#1f7f48" stroke-width="2.6" stroke-linecap="round"/><line x1="8" y1="4.1" x2="10.6" y2="9.6" stroke="#fff" stroke-opacity=".8" stroke-width=".8" stroke-dasharray="3 1"/><line x1="14.8" y1="4.1" x2="12.2" y2="9.6" stroke="#1f7f48" stroke-width="2.6" stroke-linecap="round"/><line x1="14.8" y1="4.1" x2="12.2" y2="9.6" stroke="#fff" stroke-opacity=".8" stroke-width=".8" stroke-dasharray="3 1"/><rect x="4.15" y="16.6" width="2.9" height="10.2" rx="1.2" fill="#1f7f48"/><rect x="5" y="17.5" width="1.2" height="8.4" rx=".4" fill="#fff" fill-opacity=".74"/><rect x="4.55" y="20.95" width="2.1" height="1.5" fill="#1f7f48"/><rect x="15.75" y="16.6" width="2.9" height="10.2" rx="1.2" fill="#1f7f48"/><rect x="16.6" y="17.5" width="1.2" height="8.4" rx=".4" fill="#fff" fill-opacity=".74"/><rect x="16.15" y="20.95" width="2.1" height="1.5" fill="#1f7f48"/><line x1="8" y1="25.7" x2="10.6" y2="20.2" stroke="#1f7f48" stroke-width="2.6" stroke-linecap="round"/><line x1="8" y1="25.7" x2="10.6" y2="20.2" stroke="#fff" stroke-opacity=".8" stroke-width=".8" stroke-dasharray="3 1"/><line x1="14.8" y1="25.7" x2="12.2" y2="20.2" stroke="#1f7f48" stroke-width="2.6" stroke-linecap="round"/><line x1="14.8" y1="25.7" x2="12.2" y2="20.2" stroke="#fff" stroke-opacity=".8" stroke-width=".8" stroke-dasharray="3 1"/><text x="10.2" y="16.6" font-family="'Liberation Sans',sans-serif" font-size="3.9" font-weight="700" fill="#111" stroke="#111" stroke-width=".3">8</text></g>
<g transform="translate(202.72 140)"><path d="M22.34 0 L27.79 4 V33.7 H4.75 L0 29.4 Z" fill="#1a1408" fill-opacity=".3"/><path d="M22.34 0 L26.79 3.2 V32.9 H4.15 L0 29.4 Z" fill="#2e281c" fill-opacity=".55"/><path d="M22.34 0 L26.09 2.8 V32.2 H22.34 V29.4 Z" fill="url(#sr)"/><path d="M0 29.4 L3.75 32.2 H26.09 L22.34 29.4 Z" fill="url(#sb)"/><rect width="22.34" height="29.4" fill="#fdfdfd"/><rect x="1.5" y="1.5" width="19.14" height="26" rx="1.6" fill="url(#fi)"/><path d="M21.79 0 V28.85 H0" fill="none" stroke="#c4c4c7" stroke-width="1.7" stroke-opacity=".75"/><path d="M22.04 0 V29.1 H0" fill="none" stroke="#adadb1" stroke-width=".6"/><text x="2.2" y="6.5" font-family="'Liberation Sans',sans-serif" font-size="4.4" font-weight="700" fill="#111" stroke="#111" stroke-width=".3">3</text><rect x="9.55" y="2.8" width="3.3" height="10.2" rx="1.2" fill="#1f7f48"/><rect x="10.4" y="3.7" width="1.6" height="8.4" rx=".4" fill="#fff" fill-opacity=".74"/><rect x="9.95" y="7.15" width="2.5" height="1.5" fill="#1f7f48"/><rect x="4.95" y="16.4" width="3.3" height="10.3" rx="1.2" fill="#1f7f48"/><rect x="5.8" y="17.3" width="1.6" height="8.5" rx=".4" fill="#fff" fill-opacity=".74"/><rect x="5.35" y="20.8" width="2.5" height="1.5" fill="#1f7f48"/><rect x="14.05" y="16.4" width="3.3" height="10.3" rx="1.2" fill="#1f7f48"/><rect x="14.9" y="17.3" width="1.6" height="8.5" rx=".4" fill="#fff" fill-opacity=".74"/><rect x="14.45" y="20.8" width="2.5" height="1.5" fill="#1f7f48"/></g>
<g transform="translate(225.06 140)"><path d="M22.34 0 L27.79 4 V33.7 H4.75 L0 29.4 Z" fill="#1a1408" fill-opacity=".3"/><path d="M22.34 0 L26.79 3.2 V32.9 H4.15 L0 29.4 Z" fill="#2e281c" fill-opacity=".55"/><path d="M22.34 0 L26.09 2.8 V32.2 H22.34 V29.4 Z" fill="url(#sr)"/><path d="M0 29.4 L3.75 32.2 H26.09 L22.34 29.4 Z" fill="url(#sb)"/><rect width="22.34" height="29.4" fill="#fdfdfd"/><rect x="1.5" y="1.5" width="19.14" height="26" rx="1.6" fill="url(#fi)"/><path d="M21.79 0 V28.85 H0" fill="none" stroke="#c4c4c7" stroke-width="1.7" stroke-opacity=".75"/><path d="M22.04 0 V29.1 H0" fill="none" stroke="#adadb1" stroke-width=".6"/><text x="9.9" y="16.8" font-family="'Liberation Sans',sans-serif" font-size="4.2" font-weight="700" fill="#111" stroke="#111" stroke-width=".3">4</text><circle cx="5.6" cy="6.5" r="4" fill="#33956a"/><circle cx="5.6" cy="6.5" r="2.48" fill="none" stroke="#fff" stroke-opacity=".55" stroke-width="0.8"/><circle cx="5.6" cy="6.5" r="1" fill="none" stroke="#fff" stroke-opacity=".4" stroke-width="0.56"/><circle cx="16.4" cy="6.5" r="4" fill="#5c5c5c"/><circle cx="16.4" cy="6.5" r="2.48" fill="none" stroke="#fff" stroke-opacity=".55" stroke-width="0.8"/><circle cx="16.4" cy="6.5" r="1" fill="none" stroke="#fff" stroke-opacity=".4" stroke-width="0.56"/><circle cx="5.6" cy="22.5" r="4" fill="#5c5c5c"/><circle cx="5.6" cy="22.5" r="2.48" fill="none" stroke="#fff" stroke-opacity=".55" stroke-width="0.8"/><circle cx="5.6" cy="22.5" r="1" fill="none" stroke="#fff" stroke-opacity=".4" stroke-width="0.56"/><circle cx="16.4" cy="22.5" r="4" fill="#33956a"/><circle cx="16.4" cy="22.5" r="2.48" fill="none" stroke="#fff" stroke-opacity=".55" stroke-width="0.8"/><circle cx="16.4" cy="22.5" r="1" fill="none" stroke="#fff" stroke-opacity=".4" stroke-width="0.56"/></g>
<g transform="translate(247.4 140)"><path d="M22.34 0 L27.79 4 V33.7 H4.75 L0 29.4 Z" fill="#1a1408" fill-opacity=".3"/><path d="M22.34 0 L26.79 3.2 V32.9 H4.15 L0 29.4 Z" fill="#2e281c" fill-opacity=".55"/><path d="M22.34 0 L26.09 2.8 V32.2 H22.34 V29.4 Z" fill="url(#sr)"/><path d="M0 29.4 L3.75 32.2 H26.09 L22.34 29.4 Z" fill="url(#sb)"/><rect width="22.34" height="29.4" fill="#fdfdfd"/><rect x="1.5" y="1.5" width="19.14" height="26" rx="1.6" fill="url(#fi)"/><path d="M21.79 0 V28.85 H0" fill="none" stroke="#c4c4c7" stroke-width="1.7" stroke-opacity=".75"/><path d="M22.04 0 V29.1 H0" fill="none" stroke="#adadb1" stroke-width=".6"/><text x="1.9" y="6" font-family="'Liberation Sans',sans-serif" font-size="4.2" font-weight="700" fill="#111" stroke="#111" stroke-width=".3">7</text><circle cx="4.4" cy="10.5" r="3.2" fill="#33956a"/><path d="M2.29 8.39 L6.51 12.61 M6.51 8.39 L2.29 12.61" stroke="#fff" stroke-opacity=".22" stroke-width="0.64"/><circle cx="10.6" cy="6.9" r="3.2" fill="#33956a"/><path d="M8.49 4.79 L12.71 9.01 M12.71 4.79 L8.49 9.01" stroke="#fff" stroke-opacity=".22" stroke-width="0.64"/><circle cx="17" cy="4.6" r="3.2" fill="#33956a"/><path d="M14.89 2.49 L19.11 6.71 M19.11 2.49 L14.89 6.71" stroke="#fff" stroke-opacity=".22" stroke-width="0.64"/><circle cx="6.4" cy="16.9" r="3.4" fill="#c4623a"/><path d="M4.16 14.66 L8.64 19.14 M8.64 14.66 L4.16 19.14" stroke="#fff" stroke-opacity=".22" stroke-width="0.68"/><circle cx="15.6" cy="16.9" r="3.4" fill="#c4623a"/><path d="M13.36 14.66 L17.84 19.14 M17.84 14.66 L13.36 19.14" stroke="#fff" stroke-opacity=".22" stroke-width="0.68"/><circle cx="6.4" cy="24.1" r="3.4" fill="#c4623a"/><path d="M4.16 21.86 L8.64 26.34 M8.64 21.86 L4.16 26.34" stroke="#fff" stroke-opacity=".22" stroke-width="0.68"/><circle cx="15.6" cy="24.1" r="3.4" fill="#c4623a"/><path d="M13.36 21.86 L17.84 26.34 M17.84 21.86 L13.36 26.34" stroke="#fff" stroke-opacity=".22" stroke-width="0.68"/></g>
<g transform="translate(269.74 140)"><path d="M22.34 0 L27.79 4 V33.7 H4.75 L0 29.4 Z" fill="#1a1408" fill-opacity=".3"/><path d="M22.34 0 L26.79 3.2 V32.9 H4.15 L0 29.4 Z" fill="#2e281c" fill-opacity=".55"/><path d="M22.34 0 L26.09 2.8 V32.2 H22.34 V29.4 Z" fill="url(#sr)"/><path d="M0 29.4 L3.75 32.2 H26.09 L22.34 29.4 Z" fill="url(#sb)"/><rect width="22.34" height="29.4" fill="#fdfdfd"/><rect x="1.5" y="1.5" width="19.14" height="26" rx="1.6" fill="url(#fi)"/><path d="M21.79 0 V28.85 H0" fill="none" stroke="#c4c4c7" stroke-width="1.7" stroke-opacity=".75"/><path d="M22.04 0 V29.1 H0" fill="none" stroke="#adadb1" stroke-width=".6"/><text x="2.4" y="6.5" font-family="'Liberation Sans',sans-serif" font-size="4.4" font-weight="700" fill="#111" stroke="#111" stroke-width=".3">7</text><rect x="9.3" y="2.3" width="3" height="7.4" rx="1.2" fill="#c25a30"/><rect x="10.15" y="3.2" width="1.3" height="5.6" rx=".4" fill="#fff" fill-opacity=".74"/><rect x="9.7" y="5.25" width="2.2" height="1.5" fill="#c25a30"/><rect x="4.15" y="11.1" width="3.1" height="7.4" rx="1.2" fill="#1f7f48"/><rect x="5" y="12" width="1.4" height="5.6" rx=".4" fill="#fff" fill-opacity=".74"/><rect x="4.55" y="14.05" width="2.3" height="1.5" fill="#1f7f48"/><rect x="4.15" y="19.9" width="3.1" height="7.4" rx="1.2" fill="#1f7f48"/><rect x="5" y="20.8" width="1.4" height="5.6" rx=".4" fill="#fff" fill-opacity=".74"/><rect x="4.55" y="22.85" width="2.3" height="1.5" fill="#1f7f48"/><rect x="9.25" y="11.1" width="3.1" height="7.4" rx="1.2" fill="#4d4d4d"/><rect x="10.1" y="12" width="1.4" height="5.6" rx=".4" fill="#fff" fill-opacity=".74"/><rect x="9.65" y="14.05" width="2.3" height="1.5" fill="#4d4d4d"/><rect x="9.25" y="19.9" width="3.1" height="7.4" rx="1.2" fill="#4d4d4d"/><rect x="10.1" y="20.8" width="1.4" height="5.6" rx=".4" fill="#fff" fill-opacity=".74"/><rect x="9.65" y="22.85" width="2.3" height="1.5" fill="#4d4d4d"/><rect x="14.85" y="11.1" width="3.1" height="7.4" rx="1.2" fill="#1f7f48"/><rect x="15.7" y="12" width="1.4" height="5.6" rx=".4" fill="#fff" fill-opacity=".74"/><rect x="15.25" y="14.05" width="2.3" height="1.5" fill="#1f7f48"/><rect x="14.85" y="19.9" width="3.1" height="7.4" rx="1.2" fill="#1f7f48"/><rect x="15.7" y="20.8" width="1.4" height="5.6" rx=".4" fill="#fff" fill-opacity=".74"/><rect x="15.25" y="22.85" width="2.3" height="1.5" fill="#1f7f48"/></g>
<g transform="translate(292.08 140)"><path d="M22.34 0 L27.79 4 V33.7 H4.75 L0 29.4 Z" fill="#1a1408" fill-opacity=".3"/><path d="M22.34 0 L26.79 3.2 V32.9 H4.15 L0 29.4 Z" fill="#2e281c" fill-opacity=".55"/><path d="M22.34 0 L26.09 2.8 V32.2 H22.34 V29.4 Z" fill="url(#sr)"/><path d="M0 29.4 L3.75 32.2 H26.09 L22.34 29.4 Z" fill="url(#sb)"/><rect width="22.34" height="29.4" fill="#fdfdfd"/><rect x="1.5" y="1.5" width="19.14" height="26" rx="1.6" fill="url(#fi)"/><path d="M21.79 0 V28.85 H0" fill="none" stroke="#c4c4c7" stroke-width="1.7" stroke-opacity=".75"/><path d="M22.04 0 V29.1 H0" fill="none" stroke="#adadb1" stroke-width=".6"/><text x="2.8" y="6.7" font-family="'Liberation Sans',sans-serif" font-size="4.6" font-weight="700" fill="#111" stroke="#111" stroke-width=".3">4</text><text transform="translate(12.23 7.56) scale(1.35 0.61)" text-anchor="middle" font-family="'Liberation Sans','Noto Sans CJK SC',sans-serif" font-size="10" font-weight="700" fill="#151515">四</text><text transform="translate(11.16 25.4) scale(1.46 1.71)" text-anchor="middle" font-family="'Liberation Sans','Noto Sans CJK SC',sans-serif" font-size="10" font-weight="500" fill="#ab3a12">萬</text></g>
<g transform="translate(314.42 140)"><path d="M22.34 0 L27.79 4 V33.7 H4.75 L0 29.4 Z" fill="#1a1408" fill-opacity=".3"/><path d="M22.34 0 L26.79 3.2 V32.9 H4.15 L0 29.4 Z" fill="#2e281c" fill-opacity=".55"/><path d="M22.34 0 L26.09 2.8 V32.2 H22.34 V29.4 Z" fill="url(#sr)"/><path d="M0 29.4 L3.75 32.2 H26.09 L22.34 29.4 Z" fill="url(#sb)"/><rect width="22.34" height="29.4" fill="#fdfdfd"/><rect x="1.5" y="1.5" width="19.14" height="26" rx="1.6" fill="url(#fi)"/><path d="M21.79 0 V28.85 H0" fill="none" stroke="#c4c4c7" stroke-width="1.7" stroke-opacity=".75"/><path d="M22.04 0 V29.1 H0" fill="none" stroke="#adadb1" stroke-width=".6"/><text x="2.8" y="6.7" font-family="'Liberation Sans',sans-serif" font-size="4.6" font-weight="700" fill="#111" stroke="#111" stroke-width=".3">9</text><text transform="translate(11.47 9.8) scale(1.07 0.77)" text-anchor="middle" font-family="'Liberation Sans','Noto Sans CJK SC',sans-serif" font-size="10" font-weight="700" fill="#151515">九</text><text transform="translate(11.16 25.4) scale(1.46 1.71)" text-anchor="middle" font-family="'Liberation Sans','Noto Sans CJK SC',sans-serif" font-size="10" font-weight="500" fill="#ab3a12">萬</text></g>
<g transform="translate(336.76 140)"><path d="M22.34 0 L27.79 4 V33.7 H4.75 L0 29.4 Z" fill="#1a1408" fill-opacity=".3"/><path d="M22.34 0 L26.79 3.2 V32.9 H4.15 L0 29.4 Z" fill="#2e281c" fill-opacity=".55"/><path d="M22.34 0 L26.09 2.8 V32.2 H22.34 V29.4 Z" fill="url(#sr)"/><path d="M0 29.4 L3.75 32.2 H26.09 L22.34 29.4 Z" fill="url(#sb)"/><rect width="22.34" height="29.4" fill="#fdfdfd"/><rect x="1.5" y="1.5" width="19.14" height="26" rx="1.6" fill="url(#fi)"/><path d="M21.79 0 V28.85 H0" fill="none" stroke="#c4c4c7" stroke-width="1.7" stroke-opacity=".75"/><path d="M22.04 0 V29.1 H0" fill="none" stroke="#adadb1" stroke-width=".6"/><text x="2.8" y="6.7" font-family="'Liberation Sans',sans-serif" font-size="4.6" font-weight="700" fill="#111" stroke="#111" stroke-width=".3">8</text><text transform="translate(11.82 9.49) scale(1.12 0.83)" text-anchor="middle" font-family="'Liberation Sans','Noto Sans CJK SC',sans-serif" font-size="10" font-weight="700" fill="#151515">八</text><text transform="translate(11.16 25.4) scale(1.46 1.71)" text-anchor="middle" font-family="'Liberation Sans','Noto Sans CJK SC',sans-serif" font-size="10" font-weight="500" fill="#ab3a12">萬</text></g>
<g transform="translate(359.1 140)"><path d="M22.34 0 L27.79 4 V33.7 H4.75 L0 29.4 Z" fill="#1a1408" fill-opacity=".3"/><path d="M22.34 0 L26.79 3.2 V32.9 H4.15 L0 29.4 Z" fill="#2e281c" fill-opacity=".55"/><path d="M22.34 0 L26.09 2.8 V32.2 H22.34 V29.4 Z" fill="url(#sr)"/><path d="M0 29.4 L3.75 32.2 H26.09 L22.34 29.4 Z" fill="url(#sb)"/><rect width="22.34" height="29.4" fill="#fdfdfd"/><rect x="1.5" y="1.5" width="19.14" height="26" rx="1.6" fill="url(#fi)"/><path d="M21.79 0 V28.85 H0" fill="none" stroke="#c4c4c7" stroke-width="1.7" stroke-opacity=".75"/><path d="M22.04 0 V29.1 H0" fill="none" stroke="#adadb1" stroke-width=".6"/><text x="2.8" y="6.7" font-family="'Liberation Sans',sans-serif" font-size="4.6" font-weight="700" fill="#111" stroke="#111" stroke-width=".3">8</text><text transform="translate(11.82 9.49) scale(1.12 0.83)" text-anchor="middle" font-family="'Liberation Sans','Noto Sans CJK SC',sans-serif" font-size="10" font-weight="700" fill="#151515">八</text><text transform="translate(11.16 25.4) scale(1.46 1.71)" text-anchor="middle" font-family="'Liberation Sans','Noto Sans CJK SC',sans-serif" font-size="10" font-weight="500" fill="#ab3a12">萬</text></g>
<g transform="translate(381.44 140)"><path d="M22.34 0 L27.79 4 V33.7 H4.75 L0 29.4 Z" fill="#1a1408" fill-opacity=".3"/><path d="M22.34 0 L26.79 3.2 V32.9 H4.15 L0 29.4 Z" fill="#2e281c" fill-opacity=".55"/><path d="M22.34 0 L26.09 2.8 V32.2 H22.34 V29.4 Z" fill="url(#sr)"/><path d="M0 29.4 L3.75 32.2 H26.09 L22.34 29.4 Z" fill="url(#sb)"/><rect width="22.34" height="29.4" fill="#fdfdfd"/><rect x="1.5" y="1.5" width="19.14" height="26" rx="1.6" fill="url(#fi)"/><path d="M21.79 0 V28.85 H0" fill="none" stroke="#c4c4c7" stroke-width="1.7" stroke-opacity=".75"/><path d="M22.04 0 V29.1 H0" fill="none" stroke="#adadb1" stroke-width=".6"/><text x="2.3" y="6.2" font-family="'Liberation Sans',sans-serif" font-size="4.2" font-weight="700" fill="#111" stroke="#111" stroke-width=".3">W</text><text transform="translate(10.75 23.97) scale(1.54 2.01)" text-anchor="middle" font-family="'Liberation Sans','Noto Sans CJK SC',sans-serif" font-size="10" font-weight="500" fill="#0d0d0d">西</text></g>
<g transform="translate(403.78 140)"><path d="M22.34 0 L27.79 4 V33.7 H4.75 L0 29.4 Z" fill="#1a1408" fill-opacity=".3"/><path d="M22.34 0 L26.79 3.2 V32.9 H4.15 L0 29.4 Z" fill="#2e281c" fill-opacity=".55"/><path d="M22.34 0 L26.09 2.8 V32.2 H22.34 V29.4 Z" fill="url(#sr)"/><path d="M0 29.4 L3.75 32.2 H26.09 L22.34 29.4 Z" fill="url(#sb)"/><rect width="22.34" height="29.4" fill="#fdfdfd"/><rect x="1.5" y="1.5" width="19.14" height="26" rx="1.6" fill="url(#fi)"/><path d="M21.79 0 V28.85 H0" fill="none" stroke="#c4c4c7" stroke-width="1.7" stroke-opacity=".75"/><path d="M22.04 0 V29.1 H0" fill="none" stroke="#adadb1" stroke-width=".6"/><text x="0.9" y="6.5" font-family="'Liberation Sans',sans-serif" font-size="4.4" font-weight="700" fill="#111" stroke="#111" stroke-width=".3">9</text><rect x="4.25" y="2.3" width="3.1" height="7.2" rx="1.2" fill="#1f7f48"/><rect x="5.1" y="3.2" width="1.4" height="5.4" rx=".4" fill="#fff" fill-opacity=".74"/><rect x="4.65" y="5.15" width="2.3" height="1.5" fill="#1f7f48"/><rect x="4.25" y="11.1" width="3.1" height="7.2" rx="1.2" fill="#1f7f48"/><rect x="5.1" y="12" width="1.4" height="5.4" rx=".4" fill="#fff" fill-opacity=".74"/><rect x="4.65" y="13.95" width="2.3" height="1.5" fill="#1f7f48"/><rect x="4.25" y="19.9" width="3.1" height="7.6" rx="1.2" fill="#1f7f48"/><rect x="5.1" y="20.8" width="1.4" height="5.8" rx=".4" fill="#fff" fill-opacity=".74"/><rect x="4.65" y="22.95" width="2.3" height="1.5" fill="#1f7f48"/><rect x="9.45" y="2.3" width="3.1" height="7.2" rx="1.2" fill="#c25a30"/><rect x="10.3" y="3.2" width="1.4" height="5.4" rx=".4" fill="#fff" fill-opacity=".74"/><rect x="9.85" y="5.15" width="2.3" height="1.5" fill="#c25a30"/><rect x="9.45" y="11.1" width="3.1" height="7.2" rx="1.2" fill="#c25a30"/><rect x="10.3" y="12" width="1.4" height="5.4" rx=".4" fill="#fff" fill-opacity=".74"/><rect x="9.85" y="13.95" width="2.3" height="1.5" fill="#c25a30"/><rect x="9.45" y="19.9" width="3.1" height="7.6" rx="1.2" fill="#c25a30"/><rect x="10.3" y="20.8" width="1.4" height="5.8" rx=".4" fill="#fff" fill-opacity=".74"/><rect x="9.85" y="22.95" width="2.3" height="1.5" fill="#c25a30"/><rect x="14.55" y="2.3" width="3.1" height="7.2" rx="1.2" fill="#1f7f48"/><rect x="15.4" y="3.2" width="1.4" height="5.4" rx=".4" fill="#fff" fill-opacity=".74"/><rect x="14.95" y="5.15" width="2.3" height="1.5" fill="#1f7f48"/><rect x="14.55" y="11.1" width="3.1" height="7.2" rx="1.2" fill="#1f7f48"/><rect x="15.4" y="12" width="1.4" height="5.4" rx=".4" fill="#fff" fill-opacity=".74"/><rect x="14.95" y="13.95" width="2.3" height="1.5" fill="#1f7f48"/><rect x="14.55" y="19.9" width="3.1" height="7.6" rx="1.2" fill="#1f7f48"/><rect x="15.4" y="20.8" width="1.4" height="5.8" rx=".4" fill="#fff" fill-opacity=".74"/><rect x="14.95" y="22.95" width="2.3" height="1.5" fill="#1f7f48"/></g>
<g transform="translate(24 169.4)"><path d="M22.34 0 L27.79 4 V33.7 H4.75 L0 29.4 Z" fill="#1a1408" fill-opacity=".3"/><path d="M22.34 0 L26.79 3.2 V32.9 H4.15 L0 29.4 Z" fill="#2e281c" fill-opacity=".55"/><path d="M22.34 0 L26.09 2.8 V32.2 H22.34 V29.4 Z" fill="url(#sr)"/><path d="M0 29.4 L3.75 32.2 H26.09 L22.34 29.4 Z" fill="url(#sb)"/><rect width="22.34" height="29.4" fill="#fdfdfd"/><rect x="1.5" y="1.5" width="19.14" height="26" rx="1.6" fill="url(#fi)"/><path d="M21.79 0 V28.85 H0" fill="none" stroke="#c4c4c7" stroke-width="1.7" stroke-opacity=".75"/><path d="M22.04 0 V29.1 H0" fill="none" stroke="#adadb1" stroke-width=".6"/><text x="2.2" y="6.5" font-family="'Liberation Sans',sans-serif" font-size="4.4" font-weight="700" fill="#111" stroke="#111" stroke-width=".3">3</text><rect x="9.55" y="2.8" width="3.3" height="10.2" rx="1.2" fill="#1f7f48"/><rect x="10.4" y="3.7" width="1.6" height="8.4" rx=".4" fill="#fff" fill-opacity=".74"/><rect x="9.95" y="7.15" width="2.5" height="1.5" fill="#1f7f48"/><rect x="4.95" y="16.4" width="3.3" height="10.3" rx="1.2" fill="#1f7f48"/><rect x="5.8" y="17.3" width="1.6" height="8.5" rx=".4" fill="#fff" fill-opacity=".74"/><rect x="5.35" y="20.8" width="2.5" height="1.5" fill="#1f7f48"/><rect x="14.05" y="16.4" width="3.3" height="10.3" rx="1.2" fill="#1f7f48"/><rect x="14.9" y="17.3" width="1.6" height="8.5" rx=".4" fill="#fff" fill-opacity=".74"/><rect x="14.45" y="20.8" width="2.5" height="1.5" fill="#1f7f48"/></g>
<g transform="translate(46.34 169.4)"><path d="M22.34 0 L27.79 4 V33.7 H4.75 L0 29.4 Z" fill="#1a1408" fill-opacity=".3"/><path d="M22.34 0 L26.79 3.2 V32.9 H4.15 L0 29.4 Z" fill="#2e281c" fill-opacity=".55"/><path d="M22.34 0 L26.09 2.8 V32.2 H22.34 V29.4 Z" fill="url(#sr)"/><path d="M0 29.4 L3.75 32.2 H26.09 L22.34 29.4 Z" fill="url(#sb)"/><rect width="22.34" height="29.4" fill="#fdfdfd"/><rect x="1.5" y="1.5" width="19.14" height="26" rx="1.6" fill="url(#fi)"/><path d="M21.79 0 V28.85 H0" fill="none" stroke="#c4c4c7" stroke-width="1.7" stroke-opacity=".75"/><path d="M22.04 0 V29.1 H0" fill="none" stroke="#adadb1" stroke-width=".6"/><text x="2.1" y="6.7" font-family="'Liberation Sans',sans-serif" font-size="4.6" font-weight="700" fill="#111" stroke="#111" stroke-width=".3">3</text><circle cx="16" cy="6" r="4.5" fill="#33956a"/><path d="M13.03 3.03 L18.97 8.97 M18.97 3.03 L13.03 8.97" stroke="#fff" stroke-opacity=".22" stroke-width="0.9"/><circle cx="11.2" cy="14.7" r="4.5" fill="#c4623a"/><path d="M8.23 11.73 L14.17 17.67 M14.17 11.73 L8.23 17.67" stroke="#fff" stroke-opacity=".22" stroke-width="0.9"/><circle cx="6.1" cy="23" r="4.5" fill="#5c5c5c"/><path d="M3.13 20.03 L9.07 25.97 M9.07 20.03 L3.13 25.97" stroke="#fff" stroke-opacity=".22" stroke-width="0.9"/></g>
<g transform="translate(68.68 169.4)"><path d="M22.34 0 L27.79 4 V33.7 H4.75 L0 29.4 Z" fill="#1a1408" fill-opacity=".3"/><path d="M22.34 0 L26.79 3.2 V32.9 H4.15 L0 29.4 Z" fill="#2e281c" fill-opacity=".55"/><path d="M22.34 0 L26.09 2.8 V32.2 H22.34 V29.4 Z" fill="url(#sr)"/><path d="M0 29.4 L3.75 32.2 H26.09 L22.34 29.4 Z" fill="url(#sb)"/><rect width="22.34" height="29.4" fill="#fdfdfd"/><rect x="1.5" y="1.5" width="19.14" height="26" rx="1.6" fill="url(#fi)"/><path d="M21.79 0 V28.85 H0" fill="none" stroke="#c4c4c7" stroke-width="1.7" stroke-opacity=".75"/><path d="M22.04 0 V29.1 H0" fill="none" stroke="#adadb1" stroke-width=".6"/><text x="2.8" y="6.7" font-family="'Liberation Sans',sans-serif" font-size="4.6" font-weight="700" fill="#111" stroke="#111" stroke-width=".3">2</text><text transform="translate(11.8 8.37) scale(1.17 0.67)" text-anchor="middle" font-family="'Liberation Sans','Noto Sans CJK SC',sans-serif" font-size="10" font-weight="700" fill="#151515">二</text><text transform="translate(11.16 25.4) scale(1.46 1.71)" text-anchor="middle" font-family="'Liberation Sans','Noto Sans CJK SC',sans-serif" font-size="10" font-weight="500" fill="#ab3a12">萬</text></g>
<g transform="translate(91.02 169.4)"><path d="M22.34 0 L27.79 4 V33.7 H4.75 L0 29.4 Z" fill="#1a1408" fill-opacity=".3"/><path d="M22.34 0 L26.79 3.2 V32.9 H4.15 L0 29.4 Z" fill="#2e281c" fill-opacity=".55"/><path d="M22.34 0 L26.09 2.8 V32.2 H22.34 V29.4 Z" fill="url(#sr)"/><path d="M0 29.4 L3.75 32.2 H26.09 L22.34 29.4 Z" fill="url(#sb)"/><rect width="22.34" height="29.4" fill="#fdfdfd"/><rect x="1.5" y="1.5" width="19.14" height="26" rx="1.6" fill="url(#fi)"/><path d="M21.79 0 V28.85 H0" fill="none" stroke="#c4c4c7" stroke-width="1.7" stroke-opacity=".75"/><path d="M22.04 0 V29.1 H0" fill="none" stroke="#adadb1" stroke-width=".6"/><text x="2.8" y="6.7" font-family="'Liberation Sans',sans-serif" font-size="4.6" font-weight="700" fill="#111" stroke="#111" stroke-width=".3">7</text><text transform="translate(11.97 7.97) scale(1.04 0.72)" text-anchor="middle" font-family="'Liberation Sans','Noto Sans CJK SC',sans-serif" font-size="10" font-weight="700" fill="#151515">七</text><text transform="translate(11.16 25.4) scale(1.46 1.71)" text-anchor="middle" font-family="'Liberation Sans','Noto Sans CJK SC',sans-serif" font-size="10" font-weight="500" fill="#ab3a12">萬</text></g>
<g transform="translate(113.36 169.4)"><path d="M22.34 0 L27.79 4 V33.7 H4.75 L0 29.4 Z" fill="#1a1408" fill-opacity=".3"/><path d="M22.34 0 L26.79 3.2 V32.9 H4.15 L0 29.4 Z" fill="#2e281c" fill-opacity=".55"/><path d="M22.34 0 L26.09 2.8 V32.2 H22.34 V29.4 Z" fill="url(#sr)"/><path d="M0 29.4 L3.75 32.2 H26.09 L22.34 29.4 Z" fill="url(#sb)"/><rect width="22.34" height="29.4" fill="#fdfdfd"/><rect x="1.5" y="1.5" width="19.14" height="26" rx="1.6" fill="url(#fi)"/><path d="M21.79 0 V28.85 H0" fill="none" stroke="#c4c4c7" stroke-width="1.7" stroke-opacity=".75"/><path d="M22.04 0 V29.1 H0" fill="none" stroke="#adadb1" stroke-width=".6"/><text x="2.2" y="6.5" font-family="'Liberation Sans',sans-serif" font-size="4.4" font-weight="700" fill="#111" stroke="#111" stroke-width=".3">3</text><rect x="9.55" y="2.8" width="3.3" height="10.2" rx="1.2" fill="#1f7f48"/><rect x="10.4" y="3.7" width="1.6" height="8.4" rx=".4" fill="#fff" fill-opacity=".74"/><rect x="9.95" y="7.15" width="2.5" height="1.5" fill="#1f7f48"/><rect x="4.95" y="16.4" width="3.3" height="10.3" rx="1.2" fill="#1f7f48"/><rect x="5.8" y="17.3" width="1.6" height="8.5" rx=".4" fill="#fff" fill-opacity=".74"/><rect x="5.35" y="20.8" width="2.5" height="1.5" fill="#1f7f48"/><rect x="14.05" y="16.4" width="3.3" height="10.3" rx="1.2" fill="#1f7f48"/><rect x="14.9" y="17.3" width="1.6" height="8.5" rx=".4" fill="#fff" fill-opacity=".74"/><rect x="14.45" y="20.8" width="2.5" height="1.5" fill="#1f7f48"/></g>
<g transform="translate(135.7 169.4)"><path d="M22.34 0 L27.79 4 V33.7 H4.75 L0 29.4 Z" fill="#1a1408" fill-opacity=".3"/><path d="M22.34 0 L26.79 3.2 V32.9 H4.15 L0 29.4 Z" fill="#2e281c" fill-opacity=".55"/><path d="M22.34 0 L26.09 2.8 V32.2 H22.34 V29.4 Z" fill="url(#sr)"/><path d="M0 29.4 L3.75 32.2 H26.09 L22.34 29.4 Z" fill="url(#sb)"/><rect width="22.34" height="29.4" fill="#fdfdfd"/><rect x="1.5" y="1.5" width="19.14" height="26" rx="1.6" fill="url(#fi)"/><path d="M21.79 0 V28.85 H0" fill="none" stroke="#c4c4c7" stroke-width="1.7" stroke-opacity=".75"/><path d="M22.04 0 V29.1 H0" fill="none" stroke="#adadb1" stroke-width=".6"/><text x="2.3" y="6.2" font-family="'Liberation Sans',sans-serif" font-size="4.2" font-weight="700" fill="#111" stroke="#111" stroke-width=".3">N</text><text transform="translate(11.31 22.89) scale(1.61 1.76)" text-anchor="middle" font-family="'Liberation Sans','Noto Sans CJK SC',sans-serif" font-size="10" font-weight="500" fill="#0d0d0d">北</text></g>
<g transform="translate(158.04 169.4)"><path d="M22.34 0 L27.79 4 V33.7 H4.75 L0 29.4 Z" fill="#1a1408" fill-opacity=".3"/><path d="M22.34 0 L26.79 3.2 V32.9 H4.15 L0 29.4 Z" fill="#2e281c" fill-opacity=".55"/><path d="M22.34 0 L26.09 2.8 V32.2 H22.34 V29.4 Z" fill="url(#sr)"/><path d="M0 29.4 L3.75 32.2 H26.09 L22.34 29.4 Z" fill="url(#sb)"/><rect width="22.34" height="29.4" fill="#fdfdfd"/><rect x="1.5" y="1.5" width="19.14" height="26" rx="1.6" fill="url(#fi)"/><path d="M21.79 0 V28.85 H0" fill="none" stroke="#c4c4c7" stroke-width="1.7" stroke-opacity=".75"/><path d="M22.04 0 V29.1 H0" fill="none" stroke="#adadb1" stroke-width=".6"/></g>
<g transform="translate(180.38 169.4)"><path d="M22.34 0 L27.79 4 V33.7 H4.75 L0 29.4 Z" fill="#1a1408" fill-opacity=".3"/><path d="M22.34 0 L26.79 3.2 V32.9 H4.15 L0 29.4 Z" fill="#2e281c" fill-opacity=".55"/><path d="M22.34 0 L26.09 2.8 V32.2 H22.34 V29.4 Z" fill="url(#sr)"/><path d="M0 29.4 L3.75 32.2 H26.09 L22.34 29.4 Z" fill="url(#sb)"/><rect width="22.34" height="29.4" fill="#fdfdfd"/><rect x="1.5" y="1.5" width="19.14" height="26" rx="1.6" fill="url(#fi)"/><path d="M21.79 0 V28.85 H0" fill="none" stroke="#c4c4c7" stroke-width="1.7" stroke-opacity=".75"/><path d="M22.04 0 V29.1 H0" fill="none" stroke="#adadb1" stroke-width=".6"/><text x="2" y="6" font-family="'Liberation Sans',sans-serif" font-size="4.3" font-weight="700" fill="#111" stroke="#111" stroke-width=".3">3</text><text transform="translate(17.01 7.24) scale(0.47 0.54)" text-anchor="middle" font-family="'Liberation Sans','Noto Sans CJK SC',sans-serif" font-size="10" font-weight="700" fill="#c24e22">秋</text><rect x="6.7" y="23.4" width="9.4" height="3.2" fill="#fff" stroke="#2a7440" stroke-width="1.15"/><path d="M11.2 23 L10.6 16 L6.2 4.6 M10.8 18.4 L6.6 13.6 L4.6 14.2 M11 20 L14.6 15.4 L16.4 11.4 M10.2 14 L12.8 6.4" stroke="#3a3a3a" stroke-width=".7" fill="none"/><ellipse cx="4.6" cy="7.6" rx="1.6" ry="0.75" transform="rotate(35 4.6 7.6)" fill="#eef6ef" stroke="#4a9a62" stroke-width=".7"/><ellipse cx="12.6" cy="7.2" rx="1.6" ry="0.75" transform="rotate(-50 12.6 7.2)" fill="#eef6ef" stroke="#4a9a62" stroke-width=".7"/><ellipse cx="4.4" cy="20.2" rx="1.6" ry="0.75" transform="rotate(-25 4.4 20.2)" fill="#eef6ef" stroke="#4a9a62" stroke-width=".7"/><ellipse cx="13.2" cy="19.2" rx="1.6" ry="0.75" transform="rotate(-30 13.2 19.2)" fill="#eef6ef" stroke="#4a9a62" stroke-width=".7"/><ellipse cx="16.6" cy="14.6" rx="1.4" ry="0.65" transform="rotate(-20 16.6 14.6)" fill="#eef6ef" stroke="#4a9a62" stroke-width=".7"/><ellipse cx="7" cy="10.2" rx="1.3" ry="0.6" transform="rotate(60 7 10.2)" fill="#eef6ef" stroke="#4a9a62" stroke-width=".7"/><ellipse cx="4" cy="17" rx="1.2" ry="0.55" transform="rotate(30 4 17)" fill="#eef6ef" stroke="#4a9a62" stroke-width=".7"/><circle cx="9.4" cy="13.2" r="3.0" fill="#fff" stroke="#c4562a" stroke-width="1"/><path d="M7.6 13.6 Q9.4 10.8 11.2 13.6 M8.4 15 Q9.4 13.6 10.4 15" stroke="#c4562a" stroke-width=".6" fill="none"/></g>
<g transform="translate(202.72 169.4)"><path d="M22.34 0 L27.79 4 V33.7 H4.75 L0 29.4 Z" fill="#1a1408" fill-opacity=".3"/><path d="M22.34 0 L26.79 3.2 V32.9 H4.15 L0 29.4 Z" fill="#2e281c" fill-opacity=".55"/><path d="M22.34 0 L26.09 2.8 V32.2 H22.34 V29.4 Z" fill="url(#sr)"/><path d="M0 29.4 L3.75 32.2 H26.09 L22.34 29.4 Z" fill="url(#sb)"/><rect width="22.34" height="29.4" fill="#fdfdfd"/><rect x="1.5" y="1.5" width="19.14" height="26" rx="1.6" fill="url(#fi)"/><path d="M21.79 0 V28.85 H0" fill="none" stroke="#c4c4c7" stroke-width="1.7" stroke-opacity=".75"/><path d="M22.04 0 V29.1 H0" fill="none" stroke="#adadb1" stroke-width=".6"/><text x="0.9" y="6.5" font-family="'Liberation Sans',sans-serif" font-size="4.4" font-weight="700" fill="#111" stroke="#111" stroke-width=".3">9</text><rect x="4.25" y="2.3" width="3.1" height="7.2" rx="1.2" fill="#1f7f48"/><rect x="5.1" y="3.2" width="1.4" height="5.4" rx=".4" fill="#fff" fill-opacity=".74"/><rect x="4.65" y="5.15" width="2.3" height="1.5" fill="#1f7f48"/><rect x="4.25" y="11.1" width="3.1" height="7.2" rx="1.2" fill="#1f7f48"/><rect x="5.1" y="12" width="1.4" height="5.4" rx=".4" fill="#fff" fill-opacity=".74"/><rect x="4.65" y="13.95" width="2.3" height="1.5" fill="#1f7f48"/><rect x="4.25" y="19.9" width="3.1" height="7.6" rx="1.2" fill="#1f7f48"/><rect x="5.1" y="20.8" width="1.4" height="5.8" rx=".4" fill="#fff" fill-opacity=".74"/><rect x="4.65" y="22.95" width="2.3" height="1.5" fill="#1f7f48"/><rect x="9.45" y="2.3" width="3.1" height="7.2" rx="1.2" fill="#c25a30"/><rect x="10.3" y="3.2" width="1.4" height="5.4" rx=".4" fill="#fff" fill-opacity=".74"/><rect x="9.85" y="5.15" width="2.3" height="1.5" fill="#c25a30"/><rect x="9.45" y="11.1" width="3.1" height="7.2" rx="1.2" fill="#c25a30"/><rect x="10.3" y="12" width="1.4" height="5.4" rx=".4" fill="#fff" fill-opacity=".74"/><rect x="9.85" y="13.95" width="2.3" height="1.5" fill="#c25a30"/><rect x="9.45" y="19.9" width="3.1" height="7.6" rx="1.2" fill="#c25a30"/><rect x="10.3" y="20.8" width="1.4" height="5.8" rx=".4" fill="#fff" fill-opacity=".74"/><rect x="9.85" y="22.95" width="2.3" height="1.5" fill="#c25a30"/><rect x="14.55" y="2.3" width="3.1" height="7.2" rx="1.2" fill="#1f7f48"/><rect x="15.4" y="3.2" width="1.4" height="5.4" rx=".4" fill="#fff" fill-opacity=".74"/><rect x="14.95" y="5.15" width="2.3" height="1.5" fill="#1f7f48"/><rect x="14.55" y="11.1" width="3.1" height="7.2" rx="1.2" fill="#1f7f48"/><rect x="15.4" y="12" width="1.4" height="5.4" rx=".4" fill="#fff" fill-opacity=".74"/><rect x="14.95" y="13.95" width="2.3" height="1.5" fill="#1f7f48"/><rect x="14.55" y="19.9" width="3.1" height="7.6" rx="1.2" fill="#1f7f48"/><rect x="15.4" y="20.8" width="1.4" height="5.8" rx=".4" fill="#fff" fill-opacity=".74"/><rect x="14.95" y="22.95" width="2.3" height="1.5" fill="#1f7f48"/></g>
<g transform="translate(225.06 169.4)"><path d="M22.34 0 L27.79 4 V33.7 H4.75 L0 29.4 Z" fill="#1a1408" fill-opacity=".3"/><path d="M22.34 0 L26.79 3.2 V32.9 H4.15 L0 29.4 Z" fill="#2e281c" fill-opacity=".55"/><path d="M22.34 0 L26.09 2.8 V32.2 H22.34 V29.4 Z" fill="url(#sr)"/><path d="M0 29.4 L3.75 32.2 H26.09 L22.34 29.4 Z" fill="url(#sb)"/><rect width="22.34" height="29.4" fill="#fdfdfd"/><rect x="1.5" y="1.5" width="19.14" height="26" rx="1.6" fill="url(#fi)"/><path d="M21.79 0 V28.85 H0" fill="none" stroke="#c4c4c7" stroke-width="1.7" stroke-opacity=".75"/><path d="M22.04 0 V29.1 H0" fill="none" stroke="#adadb1" stroke-width=".6"/><circle cx="6" cy="6.4" r="4" fill="#33956a"/><circle cx="6" cy="6.4" r="2.48" fill="none" stroke="#fff" stroke-opacity=".55" stroke-width="0.8"/><circle cx="6" cy="6.4" r="1" fill="none" stroke="#fff" stroke-opacity=".4" stroke-width="0.56"/><circle cx="16.7" cy="6.4" r="4" fill="#33956a"/><circle cx="16.7" cy="6.4" r="2.48" fill="none" stroke="#fff" stroke-opacity=".55" stroke-width="0.8"/><circle cx="16.7" cy="6.4" r="1" fill="none" stroke="#fff" stroke-opacity=".4" stroke-width="0.56"/><circle cx="5.6" cy="16" r="4" fill="#c4623a"/><circle cx="5.6" cy="16" r="2.48" fill="none" stroke="#fff" stroke-opacity=".55" stroke-width="0.8"/><circle cx="5.6" cy="16" r="1" fill="none" stroke="#fff" stroke-opacity=".4" stroke-width="0.56"/><circle cx="16.7" cy="16" r="4" fill="#c4623a"/><circle cx="16.7" cy="16" r="2.48" fill="none" stroke="#fff" stroke-opacity=".55" stroke-width="0.8"/><circle cx="16.7" cy="16" r="1" fill="none" stroke="#fff" stroke-opacity=".4" stroke-width="0.56"/><circle cx="5.6" cy="22.8" r="4" fill="#c4623a"/><circle cx="5.6" cy="22.8" r="2.48" fill="none" stroke="#fff" stroke-opacity=".55" stroke-width="0.8"/><circle cx="5.6" cy="22.8" r="1" fill="none" stroke="#fff" stroke-opacity=".4" stroke-width="0.56"/><circle cx="16.7" cy="22.8" r="4" fill="#c4623a"/><circle cx="16.7" cy="22.8" r="2.48" fill="none" stroke="#fff" stroke-opacity=".55" stroke-width="0.8"/><circle cx="16.7" cy="22.8" r="1" fill="none" stroke="#fff" stroke-opacity=".4" stroke-width="0.56"/><text x="9.9" y="12.8" font-family="'Liberation Sans',sans-serif" font-size="4.2" font-weight="700" fill="#111" stroke="#111" stroke-width=".3">6</text></g>
<g transform="translate(247.4 169.4)"><path d="M22.34 0 L27.79 4 V33.7 H4.75 L0 29.4 Z" fill="#1a1408" fill-opacity=".3"/><path d="M22.34 0 L26.79 3.2 V32.9 H4.15 L0 29.4 Z" fill="#2e281c" fill-opacity=".55"/><path d="M22.34 0 L26.09 2.8 V32.2 H22.34 V29.4 Z" fill="url(#sr)"/><path d="M0 29.4 L3.75 32.2 H26.09 L22.34 29.4 Z" fill="url(#sb)"/><rect width="22.34" height="29.4" fill="#fdfdfd"/><rect x="1.5" y="1.5" width="19.14" height="26" rx="1.6" fill="url(#fi)"/><path d="M21.79 0 V28.85 H0" fill="none" stroke="#c4c4c7" stroke-width="1.7" stroke-opacity=".75"/><path d="M22.04 0 V29.1 H0" fill="none" stroke="#adadb1" stroke-width=".6"/><text x="2.8" y="6.7" font-family="'Liberation Sans',sans-serif" font-size="4.6" font-weight="700" fill="#111" stroke="#111" stroke-width=".3">3</text><text transform="translate(11.4 8.76) scale(1.29 0.81)" text-anchor="middle" font-family="'Liberation Sans','Noto Sans CJK SC',sans-serif" font-size="10" font-weight="700" fill="#151515">三</text><text transform="translate(11.16 25.4) scale(1.46 1.71)" text-anchor="middle" font-family="'Liberation Sans','Noto Sans CJK SC',sans-serif" font-size="10" font-weight="500" fill="#ab3a12">萬</text></g>
<g transform="translate(269.74 169.4)"><path d="M22.34 0 L27.79 4 V33.7 H4.75 L0 29.4 Z" fill="#1a1408" fill-opacity=".3"/><path d="M22.34 0 L26.79 3.2 V32.9 H4.15 L0 29.4 Z" fill="#2e281c" fill-opacity=".55"/><path d="M22.34 0 L26.09 2.8 V32.2 H22.34 V29.4 Z" fill="url(#sr)"/><path d="M0 29.4 L3.75 32.2 H26.09 L22.34 29.4 Z" fill="url(#sb)"/><rect width="22.34" height="29.4" fill="#fdfdfd"/><rect x="1.5" y="1.5" width="19.14" height="26" rx="1.6" fill="url(#fi)"/><path d="M21.79 0 V28.85 H0" fill="none" stroke="#c4c4c7" stroke-width="1.7" stroke-opacity=".75"/><path d="M22.04 0 V29.1 H0" fill="none" stroke="#adadb1" stroke-width=".6"/><text x="2.2" y="6.5" font-family="'Liberation Sans',sans-serif" font-size="4.4" font-weight="700" fill="#111" stroke="#111" stroke-width=".3">3</text><rect x="9.55" y="2.8" width="3.3" height="10.2" rx="1.2" fill="#1f7f48"/><rect x="10.4" y="3.7" width="1.6" height="8.4" rx=".4" fill="#fff" fill-opacity=".74"/><rect x="9.95" y="7.15" width="2.5" height="1.5" fill="#1f7f48"/><rect x="4.95" y="16.4" width="3.3" height="10.3" rx="1.2" fill="#1f7f48"/><rect x="5.8" y="17.3" width="1.6" height="8.5" rx=".4" fill="#fff" fill-opacity=".74"/><rect x="5.35" y="20.8" width="2.5" height="1.5" fill="#1f7f48"/><rect x="14.05" y="16.4" width="3.3" height="10.3" rx="1.2" fill="#1f7f48"/><rect x="14.9" y="17.3" width="1.6" height="8.5" rx=".4" fill="#fff" fill-opacity=".74"/><rect x="14.45" y="20.8" width="2.5" height="1.5" fill="#1f7f48"/></g>
<g transform="translate(292.08 169.4)"><path d="M22.34 0 L27.79 4 V33.7 H4.75 L0 29.4 Z" fill="#1a1408" fill-opacity=".3"/><path d="M22.34 0 L26.79 3.2 V32.9 H4.15 L0 29.4 Z" fill="#2e281c" fill-opacity=".55"/><path d="M22.34 0 L26.09 2.8 V32.2 H22.34 V29.4 Z" fill="url(#sr)"/><path d="M0 29.4 L3.75 32.2 H26.09 L22.34 29.4 Z" fill="url(#sb)"/><rect width="22.34" height="29.4" fill="#fdfdfd"/><rect x="1.5" y="1.5" width="19.14" height="26" rx="1.6" fill="url(#fi)"/><path d="M21.79 0 V28.85 H0" fill="none" stroke="#c4c4c7" stroke-width="1.7" stroke-opacity=".75"/><path d="M22.04 0 V29.1 H0" fill="none" stroke="#adadb1" stroke-width=".6"/><text x="2.3" y="6.2" font-family="'Liberation Sans',sans-serif" font-size="4.2" font-weight="700" fill="#111" stroke="#111" stroke-width=".3">S</text><text transform="translate(11.05 23.62) scale(1.79 2.12)" text-anchor="middle" font-family="'Liberation Sans','Noto Sans CJK SC',sans-serif" font-size="10" font-weight="500" fill="#0d0d0d">南</text></g>
<g transform="translate(314.42 169.4)"><path d="M22.34 0 L27.79 4 V33.7 H4.75 L0 29.4 Z" fill="#1a1408" fill-opacity=".3"/><path d="M22.34 0 L26.79 3.2 V32.9 H4.15 L0 29.4 Z" fill="#2e281c" fill-opacity=".55"/><path d="M22.34 0 L26.09 2.8 V32.2 H22.34 V29.4 Z" fill="url(#sr)"/><path d="M0 29.4 L3.75 32.2 H26.09 L22.34 29.4 Z" fill="url(#sb)"/><rect width="22.34" height="29.4" fill="#fdfdfd"/><rect x="1.5" y="1.5" width="19.14" height="26" rx="1.6" fill="url(#fi)"/><path d="M21.79 0 V28.85 H0" fill="none" stroke="#c4c4c7" stroke-width="1.7" stroke-opacity=".75"/><path d="M22.04 0 V29.1 H0" fill="none" stroke="#adadb1" stroke-width=".6"/><text x="2.8" y="6.7" font-family="'Liberation Sans',sans-serif" font-size="4.6" font-weight="700" fill="#111" stroke="#111" stroke-width=".3">3</text><text transform="translate(11.4 8.76) scale(1.29 0.81)" text-anchor="middle" font-family="'Liberation Sans','Noto Sans CJK SC',sans-serif" font-size="10" font-weight="700" fill="#151515">三</text><text transform="translate(11.16 25.4) scale(1.46 1.71)" text-anchor="middle" font-family="'Liberation Sans','Noto Sans CJK SC',sans-serif" font-size="10" font-weight="500" fill="#ab3a12">萬</text></g>
<g transform="translate(336.76 169.4)"><path d="M22.34 0 L27.79 4 V33.7 H4.75 L0 29.4 Z" fill="#1a1408" fill-opacity=".3"/><path d="M22.34 0 L26.79 3.2 V32.9 H4.15 L0 29.4 Z" fill="#2e281c" fill-opacity=".55"/><path d="M22.34 0 L26.09 2.8 V32.2 H22.34 V29.4 Z" fill="url(#sr)"/><path d="M0 29.4 L3.75 32.2 H26.09 L22.34 29.4 Z" fill="url(#sb)"/><rect width="22.34" height="29.4" fill="#fdfdfd"/><rect x="1.5" y="1.5" width="19.14" height="26" rx="1.6" fill="url(#fi)"/><path d="M21.79 0 V28.85 H0" fill="none" stroke="#c4c4c7" stroke-width="1.7" stroke-opacity=".75"/><path d="M22.04 0 V29.1 H0" fill="none" stroke="#adadb1" stroke-width=".6"/><text x="2.8" y="6.7" font-family="'Liberation Sans',sans-serif" font-size="4.6" font-weight="700" fill="#111" stroke="#111" stroke-width=".3">6</text><text transform="translate(12.71 9.47) scale(1.14 0.79)" text-anchor="middle" font-family="'Liberation Sans','Noto Sans CJK SC',sans-serif" font-size="10" font-weight="700" fill="#151515">六</text><text transform="translate(11.16 25.4) scale(1.46 1.71)" text-anchor="middle" font-family="'Liberation Sans','Noto Sans CJK SC',sans-serif" font-size="10" font-weight="500" fill="#ab3a12">萬</text></g>
<g transform="translate(359.1 169.4)"><path d="M22.34 0 L27.79 4 V33.7 H4.75 L0 29.4 Z" fill="#1a1408" fill-opacity=".3"/><path d="M22.34 0 L26.79 3.2 V32.9 H4.15 L0 29.4 Z" fill="#2e281c" fill-opacity=".55"/><path d="M22.34 0 L26.09 2.8 V32.2 H22.34 V29.4 Z" fill="url(#sr)"/><path d="M0 29.4 L3.75 32.2 H26.09 L22.34 29.4 Z" fill="url(#sb)"/><rect width="22.34" height="29.4" fill="#fdfdfd"/><rect x="1.5" y="1.5" width="19.14" height="26" rx="1.6" fill="url(#fi)"/><path d="M21.79 0 V28.85 H0" fill="none" stroke="#c4c4c7" stroke-width="1.7" stroke-opacity=".75"/><path d="M22.04 0 V29.1 H0" fill="none" stroke="#adadb1" stroke-width=".6"/><circle cx="4" cy="5.2" r="3.1" fill="#33956a"/><path d="M1.95 3.15 L6.05 7.25 M6.05 3.15 L1.95 7.25" stroke="#fff" stroke-opacity=".22" stroke-width="0.62"/><circle cx="10.9" cy="5.2" r="3.1" fill="#33956a"/><path d="M8.85 3.15 L12.95 7.25 M12.95 3.15 L8.85 7.25" stroke="#fff" stroke-opacity=".22" stroke-width="0.62"/><circle cx="17.9" cy="5.2" r="3.1" fill="#33956a"/><path d="M15.85 3.15 L19.95 7.25 M19.95 3.15 L15.85 7.25" stroke="#fff" stroke-opacity=".22" stroke-width="0.62"/><circle cx="4" cy="14.5" r="3.1" fill="#c4623a"/><path d="M1.95 12.45 L6.05 16.55 M6.05 12.45 L1.95 16.55" stroke="#fff" stroke-opacity=".22" stroke-width="0.62"/><circle cx="10.9" cy="14.5" r="3.1" fill="#c4623a"/><path d="M8.85 12.45 L12.95 16.55 M12.95 12.45 L8.85 16.55" stroke="#fff" stroke-opacity=".22" stroke-width="0.62"/><circle cx="17.9" cy="14.5" r="3.1" fill="#c4623a"/><path d="M15.85 12.45 L19.95 16.55 M19.95 12.45 L15.85 16.55" stroke="#fff" stroke-opacity=".22" stroke-width="0.62"/><circle cx="4" cy="24" r="3.1" fill="#5c5c5c"/><path d="M1.95 21.95 L6.05 26.05 M6.05 21.95 L1.95 26.05" stroke="#fff" stroke-opacity=".22" stroke-width="0.62"/><circle cx="10.9" cy="24" r="3.1" fill="#5c5c5c"/><path d="M8.85 21.95 L12.95 26.05 M12.95 21.95 L8.85 26.05" stroke="#fff" stroke-opacity=".22" stroke-width="0.62"/><circle cx="17.9" cy="24" r="3.1" fill="#5c5c5c"/><path d="M15.85 21.95 L19.95 26.05 M19.95 21.95 L15.85 26.05" stroke="#fff" stroke-opacity=".22" stroke-width="0.62"/><text x="6.3" y="11.4" font-family="'Liberation Sans',sans-serif" font-size="4.2" font-weight="700" fill="#111" stroke="#111" stroke-width=".3">9</text></g>
<g transform="translate(381.44 169.4)"><path d="M22.34 0 L27.79 4 V33.7 H4.75 L0 29.4 Z" fill="#1a1408" fill-opacity=".3"/><path d="M22.34 0 L26.79 3.2 V32.9 H4.15 L0 29.4 Z" fill="#2e281c" fill-opacity=".55"/><path d="M22.34 0 L26.09 2.8 V32.2 H22.34 V29.4 Z" fill="url(#sr)"/><path d="M0 29.4 L3.75 32.2 H26.09 L22.34 29.4 Z" fill="url(#sb)"/><rect width="22.34" height="29.4" fill="#fdfdfd"/><rect x="1.5" y="1.5" width="19.14" height="26" rx="1.6" fill="url(#fi)"/><path d="M21.79 0 V28.85 H0" fill="none" stroke="#c4c4c7" stroke-width="1.7" stroke-opacity=".75"/><path d="M22.04 0 V29.1 H0" fill="none" stroke="#adadb1" stroke-width=".6"/><text x="2.8" y="6.7" font-family="'Liberation Sans',sans-serif" font-size="4.6" font-weight="700" fill="#111" stroke="#111" stroke-width=".3">1</text><circle cx="10.9" cy="15.1" r="7.6" fill="#33956a" stroke="#4a4a4a" stroke-width="0.9"/><circle cx="10.9" cy="15.1" r="5.07" fill="none" stroke="#fff" stroke-width="1.7" stroke-dasharray="1.5 .95"/><circle cx="10.9" cy="15.1" r="3.5" fill="#c4623a"/><circle cx="10.9" cy="15.1" r="1.6" fill="none" stroke="#fff" stroke-opacity=".8" stroke-width=".8"/><path d="M10.1 15.1 h1.6 M10.9 14.3 v1.6" stroke="#fff" stroke-opacity=".7" stroke-width=".5"/></g>
<g transform="translate(403.78 169.4)"><path d="M22.34 0 L27.79 4 V33.7 H4.75 L0 29.4 Z" fill="#1a1408" fill-opacity=".3"/><path d="M22.34 0 L26.79 3.2 V32.9 H4.15 L0 29.4 Z" fill="#2e281c" fill-opacity=".55"/><path d="M22.34 0 L26.09 2.8 V32.2 H22.34 V29.4 Z" fill="url(#sr)"/><path d="M0 29.4 L3.75 32.2 H26.09 L22.34 29.4 Z" fill="url(#sb)"/><rect width="22.34" height="29.4" fill="#fdfdfd"/><rect x="1.5" y="1.5" width="19.14" height="26" rx="1.6" fill="url(#fi)"/><path d="M21.79 0 V28.85 H0" fill="none" stroke="#c4c4c7" stroke-width="1.7" stroke-opacity=".75"/><path d="M22.04 0 V29.1 H0" fill="none" stroke="#adadb1" stroke-width=".6"/><text x="2.8" y="6.7" font-family="'Liberation Sans',sans-serif" font-size="4.6" font-weight="700" fill="#111" stroke="#111" stroke-width=".3">9</text><text transform="translate(11.47 9.8) scale(1.07 0.77)" text-anchor="middle" font-family="'Liberation Sans','Noto Sans CJK SC',sans-serif" font-size="10" font-weight="700" fill="#151515">九</text><text transform="translate(11.16 25.4) scale(1.46 1.71)" text-anchor="middle" font-family="'Liberation Sans','Noto Sans CJK SC',sans-serif" font-size="10" font-weight="500" fill="#ab3a12">萬</text></g>
<g transform="translate(24 198.8)"><path d="M22.34 0 L27.79 4 V33.7 H4.75 L0 29.4 Z" fill="#1a1408" fill-opacity=".3"/><path d="M22.34 0 L26.79 3.2 V32.9 H4.15 L0 29.4 Z" fill="#2e281c" fill-opacity=".55"/><path d="M22.34 0 L26.09 2.8 V32.2 H22.34 V29.4 Z" fill="url(#sr)"/><path d="M0 29.4 L3.75 32.2 H26.09 L22.34 29.4 Z" fill="url(#sb)"/><rect width="22.34" height="29.4" fill="#fdfdfd"/><rect x="1.5" y="1.5" width="19.14" height="26" rx="1.6" fill="url(#fi)"/><path d="M21.79 0 V28.85 H0" fill="none" stroke="#c4c4c7" stroke-width="1.7" stroke-opacity=".75"/><path d="M22.04 0 V29.1 H0" fill="none" stroke="#adadb1" stroke-width=".6"/><text x="2.8" y="6.7" font-family="'Liberation Sans',sans-serif" font-size="4.6" font-weight="700" fill="#111" stroke="#111" stroke-width=".3">1</text><circle cx="10.9" cy="15.1" r="7.6" fill="#33956a" stroke="#4a4a4a" stroke-width="0.9"/><circle cx="10.9" cy="15.1" r="5.07" fill="none" stroke="#fff" stroke-width="1.7" stroke-dasharray="1.5 .95"/><circle cx="10.9" cy="15.1" r="3.5" fill="#c4623a"/><circle cx="10.9" cy="15.1" r="1.6" fill="none" stroke="#fff" stroke-opacity=".8" stroke-width=".8"/><path d="M10.1 15.1 h1.6 M10.9 14.3 v1.6" stroke="#fff" stroke-opacity=".7" stroke-width=".5"/></g>
<g transform="translate(46.34 198.8)"><path d="M22.34 0 L27.79 4 V33.7 H4.75 L0 29.4 Z" fill="#1a1408" fill-opacity=".3"/><path d="M22.34 0 L26.79 3.2 V32.9 H4.15 L0 29.4 Z" fill="#2e281c" fill-opacity=".55"/><path d="M22.34 0 L26.09 2.8 V32.2 H22.34 V29.4 Z" fill="url(#sr)"/><path d="M0 29.4 L3.75 32.2 H26.09 L22.34 29.4 Z" fill="url(#sb)"/><rect width="22.34" height="29.4" fill="#fdfdfd"/><rect x="1.5" y="1.5" width="19.14" height="26" rx="1.6" fill="url(#fi)"/><path d="M21.79 0 V28.85 H0" fill="none" stroke="#c4c4c7" stroke-width="1.7" stroke-opacity=".75"/><path d="M22.04 0 V29.1 H0" fill="none" stroke="#adadb1" stroke-width=".6"/><text x="0.9" y="6.5" font-family="'Liberation Sans',sans-serif" font-size="4.4" font-weight="700" fill="#111" stroke="#111" stroke-width=".3">9</text><rect x="4.25" y="2.3" width="3.1" height="7.2" rx="1.2" fill="#1f7f48"/><rect x="5.1" y="3.2" width="1.4" height="5.4" rx=".4" fill="#fff" fill-opacity=".74"/><rect x="4.65" y="5.15" width="2.3" height="1.5" fill="#1f7f48"/><rect x="4.25" y="11.1" width="3.1" height="7.2" rx="1.2" fill="#1f7f48"/><rect x="5.1" y="12" width="1.4" height="5.4" rx=".4" fill="#fff" fill-opacity=".74"/><rect x="4.65" y="13.95" width="2.3" height="1.5" fill="#1f7f48"/><rect x="4.25" y="19.9" width="3.1" height="7.6" rx="1.2" fill="#1f7f48"/><rect x="5.1" y="20.8" width="1.4" height="5.8" rx=".4" fill="#fff" fill-opacity=".74"/><rect x="4.65" y="22.95" width="2.3" height="1.5" fill="#1f7f48"/><rect x="9.45" y="2.3" width="3.1" height="7.2" rx="1.2" fill="#c25a30"/><rect x="10.3" y="3.2" width="1.4" height="5.4" rx=".4" fill="#fff" fill-opacity=".74"/><rect x="9.85" y="5.15" width="2.3" height="1.5" fill="#c25a30"/><rect x="9.45" y="11.1" width="3.1" height="7.2" rx="1.2" fill="#c25a30"/><rect x="10.3" y="12" width="1.4" height="5.4" rx=".4" fill="#fff" fill-opacity=".74"/><rect x="9.85" y="13.95" width="2.3" height="1.5" fill="#c25a30"/><rect x="9.45" y="19.9" width="3.1" height="7.6" rx="1.2" fill="#c25a30"/><rect x="10.3" y="20.8" width="1.4" height="5.8" rx=".4" fill="#fff" fill-opacity=".74"/><rect x="9.85" y="22.95" width="2.3" height="1.5" fill="#c25a30"/><rect x="14.55" y="2.3" width="3.1" height="7.2" rx="1.2" fill="#1f7f48"/><rect x="15.4" y="3.2" width="1.4" height="5.4" rx=".4" fill="#fff" fill-opacity=".74"/><rect x="14.95" y="5.15" width="2.3" height="1.5" fill="#1f7f48"/><rect x="14.55" y="11.1" width="3.1" height="7.2" rx="1.2" fill="#1f7f48"/><rect x="15.4" y="12" width="1.4" height="5.4" rx=".4" fill="#fff" fill-opacity=".74"/><rect x="14.95" y="13.95" width="2.3" height="1.5" fill="#1f7f48"/><rect x="14.55" y="19.9" width="3.1" height="7.6" rx="1.2" fill="#1f7f48"/><rect x="15.4" y="20.8" width="1.4" height="5.8" rx=".4" fill="#fff" fill-opacity=".74"/><rect x="14.95" y="22.95" width="2.3" height="1.5" fill="#1f7f48"/></g>
<g transform="translate(68.68 198.8)"><path d="M22.34 0 L27.79 4 V33.7 H4.75 L0 29.4 Z" fill="#1a1408" fill-opacity=".3"/><path d="M22.34 0 L26.79 3.2 V32.9 H4.15 L0 29.4 Z" fill="#2e281c" fill-opacity=".55"/><path d="M22.34 0 L26.09 2.8 V32.2 H22.34 V29.4 Z" fill="url(#sr)"/><path d="M0 29.4 L3.75 32.2 H26.09 L22.34 29.4 Z" fill="url(#sb)"/><rect width="22.34" height="29.4" fill="#fdfdfd"/><rect x="1.5" y="1.5" width="19.14" height="26" rx="1.6" fill="url(#fi)"/><path d="M21.79 0 V28.85 H0" fill="none" stroke="#c4c4c7" stroke-width="1.7" stroke-opacity=".75"/><path d="M22.04 0 V29.1 H0" fill="none" stroke="#adadb1" stroke-width=".6"/><text x="2.8" y="6.7" font-family="'Liberation Sans',sans-serif" font-size="4.6" font-weight="700" fill="#111" stroke="#111" stroke-width=".3">2</text><text transform="translate(11.8 8.37) scale(1.17 0.67)" text-anchor="middle" font-family="'Liberation Sans','Noto Sans CJK SC',sans-serif" font-size="10" font-weight="700" fill="#151515">二</text><text transform="translate(11.16 25.4) scale(1.46 1.71)" text-anchor="middle" font-family="'Liberation Sans','Noto Sans CJK SC',sans-serif" font-size="10" font-weight="500" fill="#ab3a12">萬</text></g>
<g transform="translate(91.02 198.8)"><path d="M22.34 0 L27.79 4 V33.7 H4.75 L0 29.4 Z" fill="#1a1408" fill-opacity=".3"/><path d="M22.34 0 L26.79 3.2 V32.9 H4.15 L0 29.4 Z" fill="#2e281c" fill-opacity=".55"/><path d="M22.34 0 L26.09 2.8 V32.2 H22.34 V29.4 Z" fill="url(#sr)"/><path d="M0 29.4 L3.75 32.2 H26.09 L22.34 29.4 Z" fill="url(#sb)"/><rect width="22.34" height="29.4" fill="#fdfdfd"/><rect x="1.5" y="1.5" width="19.14" height="26" rx="1.6" fill="url(#fi)"/><path d="M21.79 0 V28.85 H0" fill="none" stroke="#c4c4c7" stroke-width="1.7" stroke-opacity=".75"/><path d="M22.04 0 V29.1 H0" fill="none" stroke="#adadb1" stroke-width=".6"/><text x="2.8" y="6.7" font-family="'Liberation Sans',sans-serif" font-size="4.6" font-weight="700" fill="#111" stroke="#111" stroke-width=".3">1</text><text transform="translate(11.52 10.7) scale(1.11 1.35)" text-anchor="middle" font-family="'Liberation Sans','Noto Sans CJK SC',sans-serif" font-size="10" font-weight="700" fill="#151515">一</text><text transform="translate(11.16 25.4) scale(1.46 1.71)" text-anchor="middle" font-family="'Liberation Sans','Noto Sans CJK SC',sans-serif" font-size="10" font-weight="500" fill="#ab3a12">萬</text></g>
<g transform="translate(113.36 198.8)"><path d="M22.34 0 L27.79 4 V33.7 H4.75 L0 29.4 Z" fill="#1a1408" fill-opacity=".3"/><path d="M22.34 0 L26.79 3.2 V32.9 H4.15 L0 29.4 Z" fill="#2e281c" fill-opacity=".55"/><path d="M22.34 0 L26.09 2.8 V32.2 H22.34 V29.4 Z" fill="url(#sr)"/><path d="M0 29.4 L3.75 32.2 H26.09 L22.34 29.4 Z" fill="url(#sb)"/><rect width="22.34" height="29.4" fill="#fdfdfd"/><rect x="1.5" y="1.5" width="19.14" height="26" rx="1.6" fill="url(#fi)"/><path d="M21.79 0 V28.85 H0" fill="none" stroke="#c4c4c7" stroke-width="1.7" stroke-opacity=".75"/><path d="M22.04 0 V29.1 H0" fill="none" stroke="#adadb1" stroke-width=".6"/><text x="2" y="6" font-family="'Liberation Sans',sans-serif" font-size="4.3" font-weight="700" fill="#111" stroke="#111" stroke-width=".3">2</text><text transform="translate(17.59 7.28) scale(0.49 0.61)" text-anchor="middle" font-family="'Liberation Sans','Noto Sans CJK SC',sans-serif" font-size="10" font-weight="700" fill="#c24e22">夏</text><rect x="6.7" y="23.4" width="9.4" height="3.2" fill="#fff" stroke="#2a7440" stroke-width="1.15"/><path d="M11.4 23 L11 19.6 M12.6 23 L12.8 19.8 M8.6 15.6 L7.4 9" stroke="#3a3a3a" stroke-width=".75" fill="none"/><ellipse cx="7.3" cy="6.3" rx="2.2" ry="2.8" fill="#fff" stroke="#c4562a" stroke-width=".95"/><path d="M6.2 7.6 Q7.3 4.6 8.5 7.6 M7.3 3.6 V5.4" stroke="#c4562a" stroke-width=".55" fill="none"/><ellipse cx="7.25" cy="15.3" rx="3.3" ry="1.25" transform="rotate(-165 7.25 15.3)" fill="#fff" stroke="#c4562a" stroke-width=".8"/><ellipse cx="13.95" cy="15.3" rx="3.3" ry="1.25" transform="rotate(-15 13.95 15.3)" fill="#fff" stroke="#c4562a" stroke-width=".8"/><ellipse cx="7.84" cy="17.21" rx="2.8" ry="1.15" transform="rotate(160 7.84 17.21)" fill="#fff" stroke="#c4562a" stroke-width=".8"/><ellipse cx="13.36" cy="17.21" rx="2.8" ry="1.15" transform="rotate(20 13.36 17.21)" fill="#fff" stroke="#c4562a" stroke-width=".8"/><ellipse cx="8.44" cy="13.63" rx="3.2" ry="1.35" transform="rotate(-130 8.44 13.63)" fill="#fff" stroke="#c4562a" stroke-width=".8"/><ellipse cx="12.76" cy="13.63" rx="3.2" ry="1.35" transform="rotate(-50 12.76 13.63)" fill="#fff" stroke="#c4562a" stroke-width=".8"/><ellipse cx="10.6" cy="12.73" rx="3.3" ry="1.5" transform="rotate(-90 10.6 12.73)" fill="#fff" stroke="#c4562a" stroke-width=".8"/><ellipse cx="9.21" cy="18.18" rx="2.3" ry="1" transform="rotate(125 9.21 18.18)" fill="#fff" stroke="#c4562a" stroke-width=".8"/><ellipse cx="11.99" cy="18.18" rx="2.3" ry="1" transform="rotate(55 11.99 18.18)" fill="#fff" stroke="#c4562a" stroke-width=".8"/><circle cx="10.6" cy="15.8" r="1.1" fill="#fff" stroke="#c4562a" stroke-width=".6"/></g>
<g transform="translate(135.7 198.8)"><path d="M22.34 0 L27.79 4 V33.7 H4.75 L0 29.4 Z" fill="#1a1408" fill-opacity=".3"/><path d="M22.34 0 L26.79 3.2 V32.9 H4.15 L0 29.4 Z" fill="#2e281c" fill-opacity=".55"/><path d="M22.34 0 L26.09 2.8 V32.2 H22.34 V29.4 Z" fill="url(#sr)"/><path d="M0 29.4 L3.75 32.2 H26.09 L22.34 29.4 Z" fill="url(#sb)"/><rect width="22.34" height="29.4" fill="#fdfdfd"/><rect x="1.5" y="1.5" width="19.14" height="26" rx="1.6" fill="url(#fi)"/><path d="M21.79 0 V28.85 H0" fill="none" stroke="#c4c4c7" stroke-width="1.7" stroke-opacity=".75"/><path d="M22.04 0 V29.1 H0" fill="none" stroke="#adadb1" stroke-width=".6"/><text x="2" y="6" font-family="'Liberation Sans',sans-serif" font-size="4.3" font-weight="700" fill="#111" stroke="#111" stroke-width=".3">4</text><text transform="translate(17.69 7.2) scale(0.46 0.53)" text-anchor="middle" font-family="'Liberation Sans','Noto Sans CJK SC',sans-serif" font-size="10" font-weight="700" fill="#c24e22">冬</text><rect x="6.7" y="23.4" width="9.4" height="3.2" fill="#fff" stroke="#2a7440" stroke-width="1.15"/><path d="M11.4 23 L10.8 17.4 L5.2 6.2 L3.6 4.6 M8.2 12 L8.8 5.2 M10.9 18.6 L13.6 10 L12.4 4.2 M13.2 11.4 L15.4 8.6 M11.2 20.6 L16.6 14.6 L18 10.8 M10.8 17.6 L5.6 17 L4.2 14.8" stroke="#3a3a3a" stroke-width=".75" fill="none"/><circle cx="7.6" cy="12.2" r="2.5" fill="#fff" stroke="#c4562a" stroke-width=".9"/><path d="M6.22 12.2 L8.97 12.2 M7.6 10.82 L7.6 13.57" stroke="#c4562a" stroke-width=".5" stroke-opacity=".8"/><circle cx="12" cy="16.1" r="2.5" fill="#fff" stroke="#c4562a" stroke-width=".9"/><path d="M10.62 16.1 L13.38 16.1 M12 14.73 L12 17.48" stroke="#c4562a" stroke-width=".5" stroke-opacity=".8"/><circle cx="6" cy="10.6" r="1.3" fill="#fff" stroke="#c4562a" stroke-width=".7"/></g>
<g transform="translate(158.04 198.8)"><path d="M22.34 0 L27.79 4 V33.7 H4.75 L0 29.4 Z" fill="#1a1408" fill-opacity=".3"/><path d="M22.34 0 L26.79 3.2 V32.9 H4.15 L0 29.4 Z" fill="#2e281c" fill-opacity=".55"/><path d="M22.34 0 L26.09 2.8 V32.2 H22.34 V29.4 Z" fill="url(#sr)"/><path d="M0 29.4 L3.75 32.2 H26.09 L22.34 29.4 Z" fill="url(#sb)"/><rect width="22.34" height="29.4" fill="#fdfdfd"/><rect x="1.5" y="1.5" width="19.14" height="26" rx="1.6" fill="url(#fi)"/><path d="M21.79 0 V28.85 H0" fill="none" stroke="#c4c4c7" stroke-width="1.7" stroke-opacity=".75"/><path d="M22.04 0 V29.1 H0" fill="none" stroke="#adadb1" stroke-width=".6"/><text x="2.2" y="6.5" font-family="'Liberation Sans',sans-serif" font-size="4.4" font-weight="700" fill="#111" stroke="#111" stroke-width=".3">2</text><rect x="9.55" y="2.9" width="3.3" height="9.9" rx="1.2" fill="#1f7f48"/><rect x="10.4" y="3.8" width="1.6" height="8.1" rx=".4" fill="#fff" fill-opacity=".74"/><rect x="9.95" y="7.1" width="2.5" height="1.5" fill="#1f7f48"/><rect x="9.55" y="16.7" width="3.3" height="10.1" rx="1.2" fill="#1f7f48"/><rect x="10.4" y="17.6" width="1.6" height="8.3" rx=".4" fill="#fff" fill-opacity=".74"/><rect x="9.95" y="21" width="2.5" height="1.5" fill="#1f7f48"/></g>
<g transform="translate(180.38 198.8)"><path d="M22.34 0 L27.79 4 V33.7 H4.75 L0 29.4 Z" fill="#1a1408" fill-opacity=".3"/><path d="M22.34 0 L26.79 3.2 V32.9 H4.15 L0 29.4 Z" fill="#2e281c" fill-opacity=".55"/><path d="M22.34 0 L26.09 2.8 V32.2 H22.34 V29.4 Z" fill="url(#sr)"/><path d="M0 29.4 L3.75 32.2 H26.09 L22.34 29.4 Z" fill="url(#sb)"/><rect width="22.34" height="29.4" fill="#fdfdfd"/><rect x="1.5" y="1.5" width="19.14" height="26" rx="1.6" fill="url(#fi)"/><path d="M21.79 0 V28.85 H0" fill="none" stroke="#c4c4c7" stroke-width="1.7" stroke-opacity=".75"/><path d="M22.04 0 V29.1 H0" fill="none" stroke="#adadb1" stroke-width=".6"/><text x="2.3" y="6.2" font-family="'Liberation Sans',sans-serif" font-size="4.2" font-weight="700" fill="#111" stroke="#111" stroke-width=".3">N</text><text transform="translate(11.31 22.89) scale(1.61 1.76)" text-anchor="middle" font-family="'Liberation Sans','Noto Sans CJK SC',sans-serif" font-size="10" font-weight="500" fill="#0d0d0d">北</text></g>
<g transform="translate(202.72 198.8)"><path d="M22.34 0 L27.79 4 V33.7 H4.75 L0 29.4 Z" fill="#1a1408" fill-opacity=".3"/><path d="M22.34 0 L26.79 3.2 V32.9 H4.15 L0 29.4 Z" fill="#2e281c" fill-opacity=".55"/><path d="M22.34 0 L26.09 2.8 V32.2 H22.34 V29.4 Z" fill="url(#sr)"/><path d="M0 29.4 L3.75 32.2 H26.09 L22.34 29.4 Z" fill="url(#sb)"/><rect width="22.34" height="29.4" fill="#fdfdfd"/><rect x="1.5" y="1.5" width="19.14" height="26" rx="1.6" fill="url(#fi)"/><path d="M21.79 0 V28.85 H0" fill="none" stroke="#c4c4c7" stroke-width="1.7" stroke-opacity=".75"/><path d="M22.04 0 V29.1 H0" fill="none" stroke="#adadb1" stroke-width=".6"/><text x="1.6" y="16.6" font-family="'Liberation Sans',sans-serif" font-size="4.2" font-weight="700" fill="#111" stroke="#111" stroke-width=".3">5</text><circle cx="5.6" cy="6.5" r="3.8" fill="#33956a"/><circle cx="5.6" cy="6.5" r="2.36" fill="none" stroke="#fff" stroke-opacity=".55" stroke-width="0.76"/><circle cx="5.6" cy="6.5" r="0.95" fill="none" stroke="#fff" stroke-opacity=".4" stroke-width="0.53"/><circle cx="16.4" cy="6.5" r="3.8" fill="#5c5c5c"/><circle cx="16.4" cy="6.5" r="2.36" fill="none" stroke="#fff" stroke-opacity=".55" stroke-width="0.76"/><circle cx="16.4" cy="6.5" r="0.95" fill="none" stroke="#fff" stroke-opacity=".4" stroke-width="0.53"/><circle cx="11" cy="14.5" r="3.8" fill="#c4623a"/><circle cx="11" cy="14.5" r="2.36" fill="none" stroke="#fff" stroke-opacity=".55" stroke-width="0.76"/><circle cx="11" cy="14.5" r="0.95" fill="none" stroke="#fff" stroke-opacity=".4" stroke-width="0.53"/><circle cx="5.6" cy="22.5" r="3.8" fill="#5c5c5c"/><circle cx="5.6" cy="22.5" r="2.36" fill="none" stroke="#fff" stroke-opacity=".55" stroke-width="0.76"/><circle cx="5.6" cy="22.5" r="0.95" fill="none" stroke="#fff" stroke-opacity=".4" stroke-width="0.53"/><circle cx="16.4" cy="22.5" r="3.8" fill="#33956a"/><circle cx="16.4" cy="22.5" r="2.36" fill="none" stroke="#fff" stroke-opacity=".55" stroke-width="0.76"/><circle cx="16.4" cy="22.5" r="0.95" fill="none" stroke="#fff" stroke-opacity=".4" stroke-width="0.53"/></g>
<g transform="translate(225.06 198.8)"><path d="M22.34 0 L27.79 4 V33.7 H4.75 L0 29.4 Z" fill="#1a1408" fill-opacity=".3"/><path d="M22.34 0 L26.79 3.2 V32.9 H4.15 L0 29.4 Z" fill="#2e281c" fill-opacity=".55"/><path d="M22.34 0 L26.09 2.8 V32.2 H22.34 V29.4 Z" fill="url(#sr)"/><path d="M0 29.4 L3.75 32.2 H26.09 L22.34 29.4 Z" fill="url(#sb)"/><rect width="22.34" height="29.4" fill="#fdfdfd"/><rect x="1.5" y="1.5" width="19.14" height="26" rx="1.6" fill="url(#fi)"/><path d="M21.79 0 V28.85 H0" fill="none" stroke="#c4c4c7" stroke-width="1.7" stroke-opacity=".75"/><path d="M22.04 0 V29.1 H0" fill="none" stroke="#adadb1" stroke-width=".6"/><text x="2.8" y="6.7" font-family="'Liberation Sans',sans-serif" font-size="4.6" font-weight="700" fill="#111" stroke="#111" stroke-width=".3">1</text><text transform="translate(11.52 10.7) scale(1.11 1.35)" text-anchor="middle" font-family="'Liberation Sans','Noto Sans CJK SC',sans-serif" font-size="10" font-weight="700" fill="#151515">一</text><text transform="translate(11.16 25.4) scale(1.46 1.71)" text-anchor="middle" font-family="'Liberation Sans','Noto Sans CJK SC',sans-serif" font-size="10" font-weight="500" fill="#ab3a12">萬</text></g>
<g transform="translate(247.4 198.8)"><path d="M22.34 0 L27.79 4 V33.7 H4.75 L0 29.4 Z" fill="#1a1408" fill-opacity=".3"/><path d="M22.34 0 L26.79 3.2 V32.9 H4.15 L0 29.4 Z" fill="#2e281c" fill-opacity=".55"/><path d="M22.34 0 L26.09 2.8 V32.2 H22.34 V29.4 Z" fill="url(#sr)"/><path d="M0 29.4 L3.75 32.2 H26.09 L22.34 29.4 Z" fill="url(#sb)"/><rect width="22.34" height="29.4" fill="#fdfdfd"/><rect x="1.5" y="1.5" width="19.14" height="26" rx="1.6" fill="url(#fi)"/><path d="M21.79 0 V28.85 H0" fill="none" stroke="#c4c4c7" stroke-width="1.7" stroke-opacity=".75"/><path d="M22.04 0 V29.1 H0" fill="none" stroke="#adadb1" stroke-width=".6"/><text x="2.1" y="6.7" font-family="'Liberation Sans',sans-serif" font-size="4.6" font-weight="700" fill="#111" stroke="#111" stroke-width=".3">2</text><circle cx="11" cy="8.7" r="4.6" fill="#33956a"/><path d="M7.96 5.66 L14.04 11.74 M14.04 5.66 L7.96 11.74" stroke="#fff" stroke-opacity=".22" stroke-width="0.92"/><circle cx="11" cy="20.5" r="4.6" fill="#5c5c5c"/><path d="M7.96 17.46 L14.04 23.54 M14.04 17.46 L7.96 23.54" stroke="#fff" stroke-opacity=".22" stroke-width="0.92"/></g>
<g transform="translate(269.74 198.8)"><path d="M22.34 0 L27.79 4 V33.7 H4.75 L0 29.4 Z" fill="#1a1408" fill-opacity=".3"/><path d="M22.34 0 L26.79 3.2 V32.9 H4.15 L0 29.4 Z" fill="#2e281c" fill-opacity=".55"/><path d="M22.34 0 L26.09 2.8 V32.2 H22.34 V29.4 Z" fill="url(#sr)"/><path d="M0 29.4 L3.75 32.2 H26.09 L22.34 29.4 Z" fill="url(#sb)"/><rect width="22.34" height="29.4" fill="#fdfdfd"/><rect x="1.5" y="1.5" width="19.14" height="26" rx="1.6" fill="url(#fi)"/><path d="M21.79 0 V28.85 H0" fill="none" stroke="#c4c4c7" stroke-width="1.7" stroke-opacity=".75"/><path d="M22.04 0 V29.1 H0" fill="none" stroke="#adadb1" stroke-width=".6"/><text x="2.2" y="6.5" font-family="'Liberation Sans',sans-serif" font-size="4.4" font-weight="700" fill="#111" stroke="#111" stroke-width=".3">4</text><rect x="5.05" y="3.1" width="3.3" height="9.9" rx="1.2" fill="#1f7f48"/><rect x="5.9" y="4" width="1.6" height="8.1" rx=".4" fill="#fff" fill-opacity=".74"/><rect x="5.45" y="7.3" width="2.5" height="1.5" fill="#1f7f48"/><rect x="5.05" y="16.5" width="3.3" height="10.1" rx="1.2" fill="#1f7f48"/><rect x="5.9" y="17.4" width="1.6" height="8.3" rx=".4" fill="#fff" fill-opacity=".74"/><rect x="5.45" y="20.8" width="2.5" height="1.5" fill="#1f7f48"/><rect x="14.25" y="3.1" width="3.3" height="9.9" rx="1.2" fill="#1f7f48"/><rect x="15.1" y="4" width="1.6" height="8.1" rx=".4" fill="#fff" fill-opacity=".74"/><rect x="14.65" y="7.3" width="2.5" height="1.5" fill="#1f7f48"/><rect x="14.25" y="16.5" width="3.3" height="10.1" rx="1.2" fill="#1f7f48"/><rect x="15.1" y="17.4" width="1.6" height="8.3" rx=".4" fill="#fff" fill-opacity=".74"/><rect x="14.65" y="20.8" width="2.5" height="1.5" fill="#1f7f48"/></g>
<g transform="translate(292.08 198.8)"><path d="M22.34 0 L27.79 4 V33.7 H4.75 L0 29.4 Z" fill="#1a1408" fill-opacity=".3"/><path d="M22.34 0 L26.79 3.2 V32.9 H4.15 L0 29.4 Z" fill="#2e281c" fill-opacity=".55"/><path d="M22.34 0 L26.09 2.8 V32.2 H22.34 V29.4 Z" fill="url(#sr)"/><path d="M0 29.4 L3.75 32.2 H26.09 L22.34 29.4 Z" fill="url(#sb)"/><rect width="22.34" height="29.4" fill="#fdfdfd"/><rect x="1.5" y="1.5" width="19.14" height="26" rx="1.6" fill="url(#fi)"/><path d="M21.79 0 V28.85 H0" fill="none" stroke="#c4c4c7" stroke-width="1.7" stroke-opacity=".75"/><path d="M22.04 0 V29.1 H0" fill="none" stroke="#adadb1" stroke-width=".6"/><text x="1.9" y="6.5" font-family="'Liberation Sans',sans-serif" font-size="4.4" font-weight="700" fill="#111" stroke="#111" stroke-width=".3">5</text><rect x="4.75" y="2.8" width="3.3" height="10.5" rx="1.2" fill="#1f7f48"/><rect x="5.6" y="3.7" width="1.6" height="8.7" rx=".4" fill="#fff" fill-opacity=".74"/><rect x="5.15" y="7.3" width="2.5" height="1.5" fill="#1f7f48"/><rect x="4.75" y="16.2" width="3.3" height="10.6" rx="1.2" fill="#1f7f48"/><rect x="5.6" y="17.1" width="1.6" height="8.8" rx=".4" fill="#fff" fill-opacity=".74"/><rect x="5.15" y="20.75" width="2.5" height="1.5" fill="#1f7f48"/><rect x="13.85" y="2.8" width="3.3" height="10.5" rx="1.2" fill="#1f7f48"/><rect x="14.7" y="3.7" width="1.6" height="8.7" rx=".4" fill="#fff" fill-opacity=".74"/><rect x="14.25" y="7.3" width="2.5" height="1.5" fill="#1f7f48"/><rect x="13.85" y="16.2" width="3.3" height="10.6" rx="1.2" fill="#1f7f48"/><rect x="14.7" y="17.1" width="1.6" height="8.8" rx=".4" fill="#fff" fill-opacity=".74"/><rect x="14.25" y="20.75" width="2.5" height="1.5" fill="#1f7f48"/><rect x="9.65" y="9" width="2.5" height="10.8" rx="1.2" fill="#c25a30"/><rect x="10.5" y="9.9" width="0.8" height="9" rx=".4" fill="#fff" fill-opacity=".74"/><rect x="10.05" y="13.65" width="1.7" height="1.5" fill="#c25a30"/></g>
<g transform="translate(314.42 198.8)"><path d="M22.34 0 L27.79 4 V33.7 H4.75 L0 29.4 Z" fill="#1a1408" fill-opacity=".3"/><path d="M22.34 0 L26.79 3.2 V32.9 H4.15 L0 29.4 Z" fill="#2e281c" fill-opacity=".55"/><path d="M22.34 0 L26.09 2.8 V32.2 H22.34 V29.4 Z" fill="url(#sr)"/><path d="M0 29.4 L3.75 32.2 H26.09 L22.34 29.4 Z" fill="url(#sb)"/><rect width="22.34" height="29.4" fill="#fdfdfd"/><rect x="1.5" y="1.5" width="19.14" height="26" rx="1.6" fill="url(#fi)"/><path d="M21.79 0 V28.85 H0" fill="none" stroke="#c4c4c7" stroke-width="1.7" stroke-opacity=".75"/><path d="M22.04 0 V29.1 H0" fill="none" stroke="#adadb1" stroke-width=".6"/><text x="2.2" y="6.5" font-family="'Liberation Sans',sans-serif" font-size="4.4" font-weight="700" fill="#111" stroke="#111" stroke-width=".3">2</text><rect x="9.55" y="2.9" width="3.3" height="9.9" rx="1.2" fill="#1f7f48"/><rect x="10.4" y="3.8" width="1.6" height="8.1" rx=".4" fill="#fff" fill-opacity=".74"/><rect x="9.95" y="7.1" width="2.5" height="1.5" fill="#1f7f48"/><rect x="9.55" y="16.7" width="3.3" height="10.1" rx="1.2" fill="#1f7f48"/><rect x="10.4" y="17.6" width="1.6" height="8.3" rx=".4" fill="#fff" fill-opacity=".74"/><rect x="9.95" y="21" width="2.5" height="1.5" fill="#1f7f48"/></g>
<g transform="translate(336.76 198.8)"><path d="M22.34 0 L27.79 4 V33.7 H4.75 L0 29.4 Z" fill="#1a1408" fill-opacity=".3"/><path d="M22.34 0 L26.79 3.2 V32.9 H4.15 L0 29.4 Z" fill="#2e281c" fill-opacity=".55"/><path d="M22.34 0 L26.09 2.8 V32.2 H22.34 V29.4 Z" fill="url(#sr)"/><path d="M0 29.4 L3.75 32.2 H26.09 L22.34 29.4 Z" fill="url(#sb)"/><rect width="22.34" height="29.4" fill="#fdfdfd"/><rect x="1.5" y="1.5" width="19.14" height="26" rx="1.6" fill="url(#fi)"/><path d="M21.79 0 V28.85 H0" fill="none" stroke="#c4c4c7" stroke-width="1.7" stroke-opacity=".75"/><path d="M22.04 0 V29.1 H0" fill="none" stroke="#adadb1" stroke-width=".6"/><text x="2.3" y="6.2" font-family="'Liberation Sans',sans-serif" font-size="4.2" font-weight="700" fill="#111" stroke="#111" stroke-width=".3">E</text><text transform="translate(11.11 23.78) scale(1.53 2.23)" text-anchor="middle" font-family="'Liberation Sans','Noto Sans CJK SC',sans-serif" font-size="10" font-weight="500" fill="#0d0d0d">東</text></g>
<g transform="translate(359.1 198.8)"><path d="M22.34 0 L27.79 4 V33.7 H4.75 L0 29.4 Z" fill="#1a1408" fill-opacity=".3"/><path d="M22.34 0 L26.79 3.2 V32.9 H4.15 L0 29.4 Z" fill="#2e281c" fill-opacity=".55"/><path d="M22.34 0 L26.09 2.8 V32.2 H22.34 V29.4 Z" fill="url(#sr)"/><path d="M0 29.4 L3.75 32.2 H26.09 L22.34 29.4 Z" fill="url(#sb)"/><rect width="22.34" height="29.4" fill="#fdfdfd"/><rect x="1.5" y="1.5" width="19.14" height="26" rx="1.6" fill="url(#fi)"/><path d="M21.79 0 V28.85 H0" fill="none" stroke="#c4c4c7" stroke-width="1.7" stroke-opacity=".75"/><path d="M22.04 0 V29.1 H0" fill="none" stroke="#adadb1" stroke-width=".6"/><circle cx="6.3" cy="4.2" r="3.3" fill="#5c5c5c"/><path d="M4.12 2.02 L8.48 6.38 M8.48 2.02 L4.12 6.38" stroke="#fff" stroke-opacity=".22" stroke-width="0.66"/><circle cx="15.9" cy="4.2" r="3.3" fill="#5c5c5c"/><path d="M13.72 2.02 L18.08 6.38 M18.08 2.02 L13.72 6.38" stroke="#fff" stroke-opacity=".22" stroke-width="0.66"/><circle cx="6.3" cy="11.2" r="3.3" fill="#5c5c5c"/><path d="M4.12 9.02 L8.48 13.38 M8.48 9.02 L4.12 13.38" stroke="#fff" stroke-opacity=".22" stroke-width="0.66"/><circle cx="15.9" cy="11.2" r="3.3" fill="#5c5c5c"/><path d="M13.72 9.02 L18.08 13.38 M18.08 9.02 L13.72 13.38" stroke="#fff" stroke-opacity=".22" stroke-width="0.66"/><circle cx="6.3" cy="18" r="3.3" fill="#5c5c5c"/><path d="M4.12 15.82 L8.48 20.18 M8.48 15.82 L4.12 20.18" stroke="#fff" stroke-opacity=".22" stroke-width="0.66"/><circle cx="15.9" cy="18" r="3.3" fill="#5c5c5c"/><path d="M13.72 15.82 L18.08 20.18 M18.08 15.82 L13.72 20.18" stroke="#fff" stroke-opacity=".22" stroke-width="0.66"/><circle cx="6.3" cy="24.8" r="3.3" fill="#5c5c5c"/><path d="M4.12 22.62 L8.48 26.98 M8.48 22.62 L4.12 26.98" stroke="#fff" stroke-opacity=".22" stroke-width="0.66"/><circle cx="15.9" cy="24.8" r="3.3" fill="#5c5c5c"/><path d="M13.72 22.62 L18.08 26.98 M18.08 22.62 L13.72 26.98" stroke="#fff" stroke-opacity=".22" stroke-width="0.66"/><text x="9.9" y="6" font-family="'Liberation Sans',sans-serif" font-size="4.2" font-weight="700" fill="#111" stroke="#111" stroke-width=".3">8</text></g>
<g transform="translate(381.44 198.8)"><path d="M22.34 0 L27.79 4 V33.7 H4.75 L0 29.4 Z" fill="#1a1408" fill-opacity=".3"/><path d="M22.34 0 L26.79 3.2 V32.9 H4.15 L0 29.4 Z" fill="#2e281c" fill-opacity=".55"/><path d="M22.34 0 L26.09 2.8 V32.2 H22.34 V29.4 Z" fill="url(#sr)"/><path d="M0 29.4 L3.75 32.2 H26.09 L22.34 29.4 Z" fill="url(#sb)"/><rect width="22.34" height="29.4" fill="#fdfdfd"/><rect x="1.5" y="1.5" width="19.14" height="26" rx="1.6" fill="url(#fi)"/><path d="M21.79 0 V28.85 H0" fill="none" stroke="#c4c4c7" stroke-width="1.7" stroke-opacity=".75"/><path d="M22.04 0 V29.1 H0" fill="none" stroke="#adadb1" stroke-width=".6"/><text x="9.9" y="16.8" font-family="'Liberation Sans',sans-serif" font-size="4.2" font-weight="700" fill="#111" stroke="#111" stroke-width=".3">4</text><circle cx="5.6" cy="6.5" r="4" fill="#33956a"/><circle cx="5.6" cy="6.5" r="2.48" fill="none" stroke="#fff" stroke-opacity=".55" stroke-width="0.8"/><circle cx="5.6" cy="6.5" r="1" fill="none" stroke="#fff" stroke-opacity=".4" stroke-width="0.56"/><circle cx="16.4" cy="6.5" r="4" fill="#5c5c5c"/><circle cx="16.4" cy="6.5" r="2.48" fill="none" stroke="#fff" stroke-opacity=".55" stroke-width="0.8"/><circle cx="16.4" cy="6.5" r="1" fill="none" stroke="#fff" stroke-opacity=".4" stroke-width="0.56"/><circle cx="5.6" cy="22.5" r="4" fill="#5c5c5c"/><circle cx="5.6" cy="22.5" r="2.48" fill="none" stroke="#fff" stroke-opacity=".55" stroke-width="0.8"/><circle cx="5.6" cy="22.5" r="1" fill="none" stroke="#fff" stroke-opacity=".4" stroke-width="0.56"/><circle cx="16.4" cy="22.5" r="4" fill="#33956a"/><circle cx="16.4" cy="22.5" r="2.48" fill="none" stroke="#fff" stroke-opacity=".55" stroke-width="0.8"/><circle cx="16.4" cy="22.5" r="1" fill="none" stroke="#fff" stroke-opacity=".4" stroke-width="0.56"/></g>
<g transform="translate(403.78 198.8)"><path d="M22.34 0 L27.79 4 V33.7 H4.75 L0 29.4 Z" fill="#1a1408" fill-opacity=".3"/><path d="M22.34 0 L26.79 3.2 V32.9 H4.15 L0 29.4 Z" fill="#2e281c" fill-opacity=".55"/><path d="M22.34 0 L26.09 2.8 V32.2 H22.34 V29.4 Z" fill="url(#sr)"/><path d="M0 29.4 L3.75 32.2 H26.09 L22.34 29.4 Z" fill="url(#sb)"/><rect width="22.34" height="29.4" fill="#fdfdfd"/><rect x="1.5" y="1.5" width="19.14" height="26" rx="1.6" fill="url(#fi)"/><path d="M21.79 0 V28.85 H0" fill="none" stroke="#c4c4c7" stroke-width="1.7" stroke-opacity=".75"/><path d="M22.04 0 V29.1 H0" fill="none" stroke="#adadb1" stroke-width=".6"/><circle cx="6" cy="6.4" r="4" fill="#33956a"/><circle cx="6" cy="6.4" r="2.48" fill="none" stroke="#fff" stroke-opacity=".55" stroke-width="0.8"/><circle cx="6" cy="6.4" r="1" fill="none" stroke="#fff" stroke-opacity=".4" stroke-width="0.56"/><circle cx="16.7" cy="6.4" r="4" fill="#33956a"/><circle cx="16.7" cy="6.4" r="2.48" fill="none" stroke="#fff" stroke-opacity=".55" stroke-width="0.8"/><circle cx="16.7" cy="6.4" r="1" fill="none" stroke="#fff" stroke-opacity=".4" stroke-width="0.56"/><circle cx="5.6" cy="16" r="4" fill="#c4623a"/><circle cx="5.6" cy="16" r="2.48" fill="none" stroke="#fff" stroke-opacity=".55" stroke-width="0.8"/><circle cx="5.6" cy="16" r="1" fill="none" stroke="#fff" stroke-opacity=".4" stroke-width="0.56"/><circle cx="16.7" cy="16" r="4" fill="#c4623a"/><circle cx="16.7" cy="16" r="2.48" fill="none" stroke="#fff" stroke-opacity=".55" stroke-width="0.8"/><circle cx="16.7" cy="16" r="1" fill="none" stroke="#fff" stroke-opacity=".4" stroke-width="0.56"/><circle cx="5.6" cy="22.8" r="4" fill="#c4623a"/><circle cx="5.6" cy="22.8" r="2.48" fill="none" stroke="#fff" stroke-opacity=".55" stroke-width="0.8"/><circle cx="5.6" cy="22.8" r="1" fill="none" stroke="#fff" stroke-opacity=".4" stroke-width="0.56"/><circle cx="16.7" cy="22.8" r="4" fill="#c4623a"/><circle cx="16.7" cy="22.8" r="2.48" fill="none" stroke="#fff" stroke-opacity=".55" stroke-width="0.8"/><circle cx="16.7" cy="22.8" r="1" fill="none" stroke="#fff" stroke-opacity=".4" stroke-width="0.56"/><text x="9.9" y="12.8" font-family="'Liberation Sans',sans-serif" font-size="4.2" font-weight="700" fill="#111" stroke="#111" stroke-width=".3">6</text></g>
<g transform="translate(24 228.2)"><path d="M22.34 0 L27.79 4 V33.7 H4.75 L0 29.4 Z" fill="#1a1408" fill-opacity=".3"/><path d="M22.34 0 L26.79 3.2 V32.9 H4.15 L0 29.4 Z" fill="#2e281c" fill-opacity=".55"/><path d="M22.34 0 L26.09 2.8 V32.2 H22.34 V29.4 Z" fill="url(#sr)"/><path d="M0 29.4 L3.75 32.2 H26.09 L22.34 29.4 Z" fill="url(#sb)"/><rect width="22.34" height="29.4" fill="#fdfdfd"/><rect x="1.5" y="1.5" width="19.14" height="26" rx="1.6" fill="url(#fi)"/><path d="M21.79 0 V28.85 H0" fill="none" stroke="#c4c4c7" stroke-width="1.7" stroke-opacity=".75"/><path d="M22.04 0 V29.1 H0" fill="none" stroke="#adadb1" stroke-width=".6"/><text x="2.8" y="6.7" font-family="'Liberation Sans',sans-serif" font-size="4.6" font-weight="700" fill="#111" stroke="#111" stroke-width=".3">8</text><text transform="translate(11.82 9.49) scale(1.12 0.83)" text-anchor="middle" font-family="'Liberation Sans','Noto Sans CJK SC',sans-serif" font-size="10" font-weight="700" fill="#151515">八</text><text transform="translate(11.16 25.4) scale(1.46 1.71)" text-anchor="middle" font-family="'Liberation Sans','Noto Sans CJK SC',sans-serif" font-size="10" font-weight="500" fill="#ab3a12">萬</text></g>
<g transform="translate(46.34 228.2)"><path d="M22.34 0 L27.79 4 V33.7 H4.75 L0 29.4 Z" fill="#1a1408" fill-opacity=".3"/><path d="M22.34 0 L26.79 3.2 V32.9 H4.15 L0 29.4 Z" fill="#2e281c" fill-opacity=".55"/><path d="M22.34 0 L26.09 2.8 V32.2 H22.34 V29.4 Z" fill="url(#sr)"/><path d="M0 29.4 L3.75 32.2 H26.09 L22.34 29.4 Z" fill="url(#sb)"/><rect width="22.34" height="29.4" fill="#fdfdfd"/><rect x="1.5" y="1.5" width="19.14" height="26" rx="1.6" fill="url(#fi)"/><path d="M21.79 0 V28.85 H0" fill="none" stroke="#c4c4c7" stroke-width="1.7" stroke-opacity=".75"/><path d="M22.04 0 V29.1 H0" fill="none" stroke="#adadb1" stroke-width=".6"/><text x="2.1" y="6.7" font-family="'Liberation Sans',sans-serif" font-size="4.6" font-weight="700" fill="#111" stroke="#111" stroke-width=".3">3</text><circle cx="16" cy="6" r="4.5" fill="#33956a"/><path d="M13.03 3.03 L18.97 8.97 M18.97 3.03 L13.03 8.97" stroke="#fff" stroke-opacity=".22" stroke-width="0.9"/><circle cx="11.2" cy="14.7" r="4.5" fill="#c4623a"/><path d="M8.23 11.73 L14.17 17.67 M14.17 11.73 L8.23 17.67" stroke="#fff" stroke-opacity=".22" stroke-width="0.9"/><circle cx="6.1" cy="23" r="4.5" fill="#5c5c5c"/><path d="M3.13 20.03 L9.07 25.97 M9.07 20.03 L3.13 25.97" stroke="#fff" stroke-opacity=".22" stroke-width="0.9"/></g>
<g transform="translate(68.68 228.2)"><path d="M22.34 0 L27.79 4 V33.7 H4.75 L0 29.4 Z" fill="#1a1408" fill-opacity=".3"/><path d="M22.34 0 L26.79 3.2 V32.9 H4.15 L0 29.4 Z" fill="#2e281c" fill-opacity=".55"/><path d="M22.34 0 L26.09 2.8 V32.2 H22.34 V29.4 Z" fill="url(#sr)"/><path d="M0 29.4 L3.75 32.2 H26.09 L22.34 29.4 Z" fill="url(#sb)"/><rect width="22.34" height="29.4" fill="url(#fs)"/><rect x=".4" y=".4" width="21.54" height="28.6" fill="none" stroke="#f1cf63" stroke-width=".8"/><text x="2.8" y="6.7" font-family="'Liberation Sans',sans-serif" font-size="4.6" font-weight="700" fill="#111" stroke="#111" stroke-width=".3">5</text><text transform="translate(12.26 8.95) scale(1.18 0.72)" text-anchor="middle" font-family="'Liberation Sans','Noto Sans CJK SC',sans-serif" font-size="10" font-weight="700" fill="#151515">伍</text><text transform="translate(11.16 25.4) scale(1.46 1.71)" text-anchor="middle" font-family="'Liberation Sans','Noto Sans CJK SC',sans-serif" font-size="10" font-weight="500" fill="#ab3a12">萬</text></g>
<g transform="translate(91.02 228.2)"><path d="M22.34 0 L27.79 4 V33.7 H4.75 L0 29.4 Z" fill="#1a1408" fill-opacity=".3"/><path d="M22.34 0 L26.79 3.2 V32.9 H4.15 L0 29.4 Z" fill="#2e281c" fill-opacity=".55"/><path d="M22.34 0 L26.09 2.8 V32.2 H22.34 V29.4 Z" fill="url(#sr)"/><path d="M0 29.4 L3.75 32.2 H26.09 L22.34 29.4 Z" fill="url(#sb)"/><rect width="22.34" height="29.4" fill="#fdfdfd"/><rect x="1.5" y="1.5" width="19.14" height="26" rx="1.6" fill="url(#fi)"/><path d="M21.79 0 V28.85 H0" fill="none" stroke="#c4c4c7" stroke-width="1.7" stroke-opacity=".75"/><path d="M22.04 0 V29.1 H0" fill="none" stroke="#adadb1" stroke-width=".6"/><text x="2.4" y="6.2" font-family="'Liberation Sans',sans-serif" font-size="4.3" font-weight="700" fill="#111" stroke="#111" stroke-width=".3">1</text><path d="M3.6 9.8 C6.4 11 8.8 13.6 9.6 17.2 C6.4 16.6 4 13.6 3.6 9.8Z" fill="#2c8a50"/><path d="M18.9 15.6 C17.8 18.6 15.4 20.6 12.4 21.2 C13.2 18.4 15.8 16.2 18.9 15.6Z" fill="#2c8a50"/><path d="M9.4 20.4 C8.8 14.4 12.6 5.4 18.3 1.9 C19.9 7.4 17.4 15.4 12.6 20.8 Z" fill="#1b1b1b"/><path d="M11.4 17.6 L17.1 4.8" stroke="#fff" stroke-opacity=".8" stroke-width="1" stroke-dasharray=".9 1.2" fill="none"/><path d="M13.4 17 L18 7.4" stroke="#fff" stroke-opacity=".5" stroke-width=".7" stroke-dasharray=".7 1.2" fill="none"/><path d="M10.2 15.4 L14.8 5.6" stroke="#fff" stroke-opacity=".35" stroke-width=".6" stroke-dasharray=".6 1.3" fill="none"/><path d="M4.9 19.3 C6.8 21.6 10.6 22.2 14.3 21 C15.6 23.4 13.4 26.2 9.8 26.2 C6.6 26 4.7 23 4.9 19.3Z" fill="#fff" stroke="#1b1b1b" stroke-width="1"/><path d="M7 23.4 C9.2 24.8 12 24.6 13.8 23" stroke="#1b1b1b" stroke-width=".8" fill="none"/><path d="M9.4 26 C11.4 26.6 13.4 25.8 14.2 24.4" stroke="#1b1b1b" stroke-width="1.2" fill="none"/><circle cx="4.1" cy="18.5" r=".85" fill="#c6501e"/></g>
<g transform="translate(113.36 228.2)"><path d="M22.34 0 L27.79 4 V33.7 H4.75 L0 29.4 Z" fill="#1a1408" fill-opacity=".3"/><path d="M22.34 0 L26.79 3.2 V32.9 H4.15 L0 29.4 Z" fill="#2e281c" fill-opacity=".55"/><path d="M22.34 0 L26.09 2.8 V32.2 H22.34 V29.4 Z" fill="url(#sr)"/><path d="M0 29.4 L3.75 32.2 H26.09 L22.34 29.4 Z" fill="url(#sb)"/><rect width="22.34" height="29.4" fill="#fdfdfd"/><rect x="1.5" y="1.5" width="19.14" height="26" rx="1.6" fill="url(#fi)"/><path d="M21.79 0 V28.85 H0" fill="none" stroke="#c4c4c7" stroke-width="1.7" stroke-opacity=".75"/><path d="M22.04 0 V29.1 H0" fill="none" stroke="#adadb1" stroke-width=".6"/><text x="1.6" y="6.5" font-family="'Liberation Sans',sans-serif" font-size="4.4" font-weight="700" fill="#111" stroke="#111" stroke-width=".3">6</text><rect x="4.25" y="3.1" width="3.3" height="10.2" rx="1.2" fill="#1f7f48"/><rect x="5.1" y="4" width="1.6" height="8.4" rx=".4" fill="#fff" fill-opacity=".74"/><rect x="4.65" y="7.45" width="2.5" height="1.5" fill="#1f7f48"/><rect x="4.25" y="16.2" width="3.3" height="10.6" rx="1.2" fill="#1f7f48"/><rect x="5.1" y="17.1" width="1.6" height="8.8" rx=".4" fill="#fff" fill-opacity=".74"/><rect x="4.65" y="20.75" width="2.5" height="1.5" fill="#1f7f48"/><rect x="9.35" y="3.1" width="3.3" height="10.2" rx="1.2" fill="#1f7f48"/><rect x="10.2" y="4" width="1.6" height="8.4" rx=".4" fill="#fff" fill-opacity=".74"/><rect x="9.75" y="7.45" width="2.5" height="1.5" fill="#1f7f48"/><rect x="9.35" y="16.2" width="3.3" height="10.6" rx="1.2" fill="#1f7f48"/><rect x="10.2" y="17.1" width="1.6" height="8.8" rx=".4" fill="#fff" fill-opacity=".74"/><rect x="9.75" y="20.75" width="2.5" height="1.5" fill="#1f7f48"/><rect x="14.35" y="3.1" width="3.3" height="10.2" rx="1.2" fill="#1f7f48"/><rect x="15.2" y="4" width="1.6" height="8.4" rx=".4" fill="#fff" fill-opacity=".74"/><rect x="14.75" y="7.45" width="2.5" height="1.5" fill="#1f7f48"/><rect x="14.35" y="16.2" width="3.3" height="10.6" rx="1.2" fill="#1f7f48"/><rect x="15.2" y="17.1" width="1.6" height="8.8" rx=".4" fill="#fff" fill-opacity=".74"/><rect x="14.75" y="20.75" width="2.5" height="1.5" fill="#1f7f48"/></g>
<g transform="translate(135.7 228.2)"><path d="M22.34 0 L27.79 4 V33.7 H4.75 L0 29.4 Z" fill="#1a1408" fill-opacity=".3"/><path d="M22.34 0 L26.79 3.2 V32.9 H4.15 L0 29.4 Z" fill="#2e281c" fill-opacity=".55"/><path d="M22.34 0 L26.09 2.8 V32.2 H22.34 V29.4 Z" fill="url(#sr)"/><path d="M0 29.4 L3.75 32.2 H26.09 L22.34 29.4 Z" fill="url(#sb)"/><rect width="22.34" height="29.4" fill="#fdfdfd"/><rect x="1.5" y="1.5" width="19.14" height="26" rx="1.6" fill="url(#fi)"/><path d="M21.79 0 V28.85 H0" fill="none" stroke="#c4c4c7" stroke-width="1.7" stroke-opacity=".75"/><path d="M22.04 0 V29.1 H0" fill="none" stroke="#adadb1" stroke-width=".6"/><text x="2.8" y="6.7" font-family="'Liberation Sans',sans-serif" font-size="4.6" font-weight="700" fill="#111" stroke="#111" stroke-width=".3">1</text><circle cx="10.9" cy="15.1" r="7.6" fill="#33956a" stroke="#4a4a4a" stroke-width="0.9"/><circle cx="10.9" cy="15.1" r="5.07" fill="none" stroke="#fff" stroke-width="1.7" stroke-dasharray="1.5 .95"/><circle cx="10.9" cy="15.1" r="3.5" fill="#c4623a"/><circle cx="10.9" cy="15.1" r="1.6" fill="none" stroke="#fff" stroke-opacity=".8" stroke-width=".8"/><path d="M10.1 15.1 h1.6 M10.9 14.3 v1.6" stroke="#fff" stroke-opacity=".7" stroke-width=".5"/></g>
<g transform="translate(158.04 228.2)"><path d="M22.34 0 L27.79 4 V33.7 H4.75 L0 29.4 Z" fill="#1a1408" fill-opacity=".3"/><path d="M22.34 0 L26.79 3.2 V32.9 H4.15 L0 29.4 Z" fill="#2e281c" fill-opacity=".55"/><path d="M22.34 0 L26.09 2.8 V32.2 H22.34 V29.4 Z" fill="url(#sr)"/><path d="M0 29.4 L3.75 32.2 H26.09 L22.34 29.4 Z" fill="url(#sb)"/><rect width="22.34" height="29.4" fill="#fdfdfd"/><rect x="1.5" y="1.5" width="19.14" height="26" rx="1.6" fill="url(#fi)"/><path d="M21.79 0 V28.85 H0" fill="none" stroke="#c4c4c7" stroke-width="1.7" stroke-opacity=".75"/><path d="M22.04 0 V29.1 H0" fill="none" stroke="#adadb1" stroke-width=".6"/><text x="1.9" y="6.5" font-family="'Liberation Sans',sans-serif" font-size="4.4" font-weight="700" fill="#111" stroke="#111" stroke-width=".3">5</text><rect x="4.75" y="2.8" width="3.3" height="10.5" rx="1.2" fill="#1f7f48"/><rect x="5.6" y="3.7" width="1.6" height="8.7" rx=".4" fill="#fff" fill-opacity=".74"/><rect x="5.15" y="7.3" width="2.5" height="1.5" fill="#1f7f48"/><rect x="4.75" y="16.2" width="3.3" height="10.6" rx="1.2" fill="#1f7f48"/><rect x="5.6" y="17.1" width="1.6" height="8.8" rx=".4" fill="#fff" fill-opacity=".74"/><rect x="5.15" y="20.75" width="2.5" height="1.5" fill="#1f7f48"/><rect x="13.85" y="2.8" width="3.3" height="10.5" rx="1.2" fill="#1f7f48"/><rect x="14.7" y="3.7" width="1.6" height="8.7" rx=".4" fill="#fff" fill-opacity=".74"/><rect x="14.25" y="7.3" width="2.5" height="1.5" fill="#1f7f48"/><rect x="13.85" y="16.2" width="3.3" height="10.6" rx="1.2" fill="#1f7f48"/><rect x="14.7" y="17.1" width="1.6" height="8.8" rx=".4" fill="#fff" fill-opacity=".74"/><rect x="14.25" y="20.75" width="2.5" height="1.5" fill="#1f7f48"/><rect x="9.65" y="9" width="2.5" height="10.8" rx="1.2" fill="#c25a30"/><rect x="10.5" y="9.9" width="0.8" height="9" rx=".4" fill="#fff" fill-opacity=".74"/><rect x="10.05" y="13.65" width="1.7" height="1.5" fill="#c25a30"/></g>
<g transform="translate(180.38 228.2)"><path d="M22.34 0 L27.79 4 V33.7 H4.75 L0 29.4 Z" fill="#1a1408" fill-opacity=".3"/><path d="M22.34 0 L26.79 3.2 V32.9 H4.15 L0 29.4 Z" fill="#2e281c" fill-opacity=".55"/><path d="M22.34 0 L26.09 2.8 V32.2 H22.34 V29.4 Z" fill="url(#sr)"/><path d="M0 29.4 L3.75 32.2 H26.09 L22.34 29.4 Z" fill="url(#sb)"/><rect width="22.34" height="29.4" fill="#fdfdfd"/><rect x="1.5" y="1.5" width="19.14" height="26" rx="1.6" fill="url(#fi)"/><path d="M21.79 0 V28.85 H0" fill="none" stroke="#c4c4c7" stroke-width="1.7" stroke-opacity=".75"/><path d="M22.04 0 V29.1 H0" fill="none" stroke="#adadb1" stroke-width=".6"/><text x="1.6" y="6.5" font-family="'Liberation Sans',sans-serif" font-size="4.4" font-weight="700" fill="#111" stroke="#111" stroke-width=".3">6</text><rect x="4.25" y="3.1" width="3.3" height="10.2" rx="1.2" fill="#1f7f48"/><rect x="5.1" y="4" width="1.6" height="8.4" rx=".4" fill="#fff" fill-opacity=".74"/><rect x="4.65" y="7.45" width="2.5" height="1.5" fill="#1f7f48"/><rect x="4.25" y="16.2" width="3.3" height="10.6" rx="1.2" fill="#1f7f48"/><rect x="5.1" y="17.1" width="1.6" height="8.8" rx=".4" fill="#fff" fill-opacity=".74"/><rect x="4.65" y="20.75" width="2.5" height="1.5" fill="#1f7f48"/><rect x="9.35" y="3.1" width="3.3" height="10.2" rx="1.2" fill="#1f7f48"/><rect x="10.2" y="4" width="1.6" height="8.4" rx=".4" fill="#fff" fill-opacity=".74"/><rect x="9.75" y="7.45" width="2.5" height="1.5" fill="#1f7f48"/><rect x="9.35" y="16.2" width="3.3" height="10.6" rx="1.2" fill="#1f7f48"/><rect x="10.2" y="17.1" width="1.6" height="8.8" rx=".4" fill="#fff" fill-opacity=".74"/><rect x="9.75" y="20.75" width="2.5" height="1.5" fill="#1f7f48"/><rect x="14.35" y="3.1" width="3.3" height="10.2" rx="1.2" fill="#1f7f48"/><rect x="15.2" y="4" width="1.6" height="8.4" rx=".4" fill="#fff" fill-opacity=".74"/><rect x="14.75" y="7.45" width="2.5" height="1.5" fill="#1f7f48"/><rect x="14.35" y="16.2" width="3.3" height="10.6" rx="1.2" fill="#1f7f48"/><rect x="15.2" y="17.1" width="1.6" height="8.8" rx=".4" fill="#fff" fill-opacity=".74"/><rect x="14.75" y="20.75" width="2.5" height="1.5" fill="#1f7f48"/></g>
<g transform="translate(202.72 228.2)"><path d="M22.34 0 L27.79 4 V33.7 H4.75 L0 29.4 Z" fill="#1a1408" fill-opacity=".3"/><path d="M22.34 0 L26.79 3.2 V32.9 H4.15 L0 29.4 Z" fill="#2e281c" fill-opacity=".55"/><path d="M22.34 0 L26.09 2.8 V32.2 H22.34 V29.4 Z" fill="url(#sr)"/><path d="M0 29.4 L3.75 32.2 H26.09 L22.34 29.4 Z" fill="url(#sb)"/><rect width="22.34" height="29.4" fill="#fdfdfd"/><rect x="1.5" y="1.5" width="19.14" height="26" rx="1.6" fill="url(#fi)"/><path d="M21.79 0 V28.85 H0" fill="none" stroke="#c4c4c7" stroke-width="1.7" stroke-opacity=".75"/><path d="M22.04 0 V29.1 H0" fill="none" stroke="#adadb1" stroke-width=".6"/><text x="2.2" y="6.5" font-family="'Liberation Sans',sans-serif" font-size="4.4" font-weight="700" fill="#111" stroke="#111" stroke-width=".3">2</text><rect x="9.55" y="2.9" width="3.3" height="9.9" rx="1.2" fill="#1f7f48"/><rect x="10.4" y="3.8" width="1.6" height="8.1" rx=".4" fill="#fff" fill-opacity=".74"/><rect x="9.95" y="7.1" width="2.5" height="1.5" fill="#1f7f48"/><rect x="9.55" y="16.7" width="3.3" height="10.1" rx="1.2" fill="#1f7f48"/><rect x="10.4" y="17.6" width="1.6" height="8.3" rx=".4" fill="#fff" fill-opacity=".74"/><rect x="9.95" y="21" width="2.5" height="1.5" fill="#1f7f48"/></g>
<g transform="translate(225.06 228.2)"><path d="M22.34 0 L27.79 4 V33.7 H4.75 L0 29.4 Z" fill="#1a1408" fill-opacity=".3"/><path d="M22.34 0 L26.79 3.2 V32.9 H4.15 L0 29.4 Z" fill="#2e281c" fill-opacity=".55"/><path d="M22.34 0 L26.09 2.8 V32.2 H22.34 V29.4 Z" fill="url(#sr)"/><path d="M0 29.4 L3.75 32.2 H26.09 L22.34 29.4 Z" fill="url(#sb)"/><rect width="22.34" height="29.4" fill="#fdfdfd"/><rect x="1.5" y="1.5" width="19.14" height="26" rx="1.6" fill="url(#fi)"/><path d="M21.79 0 V28.85 H0" fill="none" stroke="#c4c4c7" stroke-width="1.7" stroke-opacity=".75"/><path d="M22.04 0 V29.1 H0" fill="none" stroke="#adadb1" stroke-width=".6"/><text x="2" y="6" font-family="'Liberation Sans',sans-serif" font-size="4.3" font-weight="700" fill="#111" stroke="#111" stroke-width=".3">2</text><text transform="translate(17.59 7.28) scale(0.49 0.61)" text-anchor="middle" font-family="'Liberation Sans','Noto Sans CJK SC',sans-serif" font-size="10" font-weight="700" fill="#c24e22">夏</text><rect x="6.7" y="23.4" width="9.4" height="3.2" fill="#fff" stroke="#2a7440" stroke-width="1.15"/><path d="M11.4 23 L11 19.6 M12.6 23 L12.8 19.8 M8.6 15.6 L7.4 9" stroke="#3a3a3a" stroke-width=".75" fill="none"/><ellipse cx="7.3" cy="6.3" rx="2.2" ry="2.8" fill="#fff" stroke="#c4562a" stroke-width=".95"/><path d="M6.2 7.6 Q7.3 4.6 8.5 7.6 M7.3 3.6 V5.4" stroke="#c4562a" stroke-width=".55" fill="none"/><ellipse cx="7.25" cy="15.3" rx="3.3" ry="1.25" transform="rotate(-165 7.25 15.3)" fill="#fff" stroke="#c4562a" stroke-width=".8"/><ellipse cx="13.95" cy="15.3" rx="3.3" ry="1.25" transform="rotate(-15 13.95 15.3)" fill="#fff" stroke="#c4562a" stroke-width=".8"/><ellipse cx="7.84" cy="17.21" rx="2.8" ry="1.15" transform="rotate(160 7.84 17.21)" fill="#fff" stroke="#c4562a" stroke-width=".8"/><ellipse cx="13.36" cy="17.21" rx="2.8" ry="1.15" transform="rotate(20 13.36 17.21)" fill="#fff" stroke="#c4562a" stroke-width=".8"/><ellipse cx="8.44" cy="13.63" rx="3.2" ry="1.35" transform="rotate(-130 8.44 13.63)" fill="#fff" stroke="#c4562a" stroke-width=".8"/><ellipse cx="12.76" cy="13.63" rx="3.2" ry="1.35" transform="rotate(-50 12.76 13.63)" fill="#fff" stroke="#c4562a" stroke-width=".8"/><ellipse cx="10.6" cy="12.73" rx="3.3" ry="1.5" transform="rotate(-90 10.6 12.73)" fill="#fff" stroke="#c4562a" stroke-width=".8"/><ellipse cx="9.21" cy="18.18" rx="2.3" ry="1" transform="rotate(125 9.21 18.18)" fill="#fff" stroke="#c4562a" stroke-width=".8"/><ellipse cx="11.99" cy="18.18" rx="2.3" ry="1" transform="rotate(55 11.99 18.18)" fill="#fff" stroke="#c4562a" stroke-width=".8"/><circle cx="10.6" cy="15.8" r="1.1" fill="#fff" stroke="#c4562a" stroke-width=".6"/></g>
<g transform="translate(247.4 228.2)"><path d="M22.34 0 L27.79 4 V33.7 H4.75 L0 29.4 Z" fill="#1a1408" fill-opacity=".3"/><path d="M22.34 0 L26.79 3.2 V32.9 H4.15 L0 29.4 Z" fill="#2e281c" fill-opacity=".55"/><path d="M22.34 0 L26.09 2.8 V32.2 H22.34 V29.4 Z" fill="url(#sr)"/><path d="M0 29.4 L3.75 32.2 H26.09 L22.34 29.4 Z" fill="url(#sb)"/><rect width="22.34" height="29.4" fill="#fdfdfd"/><rect x="1.5" y="1.5" width="19.14" height="26" rx="1.6" fill="url(#fi)"/><path d="M21.79 0 V28.85 H0" fill="none" stroke="#c4c4c7" stroke-width="1.7" stroke-opacity=".75"/><path d="M22.04 0 V29.1 H0" fill="none" stroke="#adadb1" stroke-width=".6"/><text x="2.8" y="6.7" font-family="'Liberation Sans',sans-serif" font-size="4.6" font-weight="700" fill="#111" stroke="#111" stroke-width=".3">1</text><text transform="translate(11.52 10.7) scale(1.11 1.35)" text-anchor="middle" font-family="'Liberation Sans','Noto Sans CJK SC',sans-serif" font-size="10" font-weight="700" fill="#151515">一</text><text transform="translate(11.16 25.4) scale(1.46 1.71)" text-anchor="middle" font-family="'Liberation Sans','Noto Sans CJK SC',sans-serif" font-size="10" font-weight="500" fill="#ab3a12">萬</text></g>
<g transform="translate(269.74 228.2)"><path d="M22.34 0 L27.79 4 V33.7 H4.75 L0 29.4 Z" fill="#1a1408" fill-opacity=".3"/><path d="M22.34 0 L26.79 3.2 V32.9 H4.15 L0 29.4 Z" fill="#2e281c" fill-opacity=".55"/><path d="M22.34 0 L26.09 2.8 V32.2 H22.34 V29.4 Z" fill="url(#sr)"/><path d="M0 29.4 L3.75 32.2 H26.09 L22.34 29.4 Z" fill="url(#sb)"/><rect width="22.34" height="29.4" fill="#fdfdfd"/><rect x="1.5" y="1.5" width="19.14" height="26" rx="1.6" fill="url(#fi)"/><path d="M21.79 0 V28.85 H0" fill="none" stroke="#c4c4c7" stroke-width="1.7" stroke-opacity=".75"/><path d="M22.04 0 V29.1 H0" fill="none" stroke="#adadb1" stroke-width=".6"/><text x="2" y="6" font-family="'Liberation Sans',sans-serif" font-size="4.3" font-weight="700" fill="#111" stroke="#111" stroke-width=".3">1</text><text transform="translate(16.79 7.24) scale(0.47 0.54)" text-anchor="middle" font-family="'Liberation Sans','Noto Sans CJK SC',sans-serif" font-size="10" font-weight="700" fill="#c24e22">春</text><rect x="6.7" y="23.4" width="9.4" height="3.2" fill="#fff" stroke="#2a7440" stroke-width="1.15"/><path d="M11 23 L10.6 16 L7.2 4.8 M10.7 18 L9 10 L9.4 4.4 M11 19 L13 10 L12.2 4.6 M11 20.4 L15 12 L15.4 8" stroke="#3a3a3a" stroke-width=".7" fill="none"/><ellipse cx="5.4" cy="7.6" rx="1.6" ry="0.75" transform="rotate(40 5.4 7.6)" fill="#eef6ef" stroke="#4a9a62" stroke-width=".7"/><ellipse cx="4.8" cy="15.2" rx="1.6" ry="0.75" transform="rotate(-20 4.8 15.2)" fill="#eef6ef" stroke="#4a9a62" stroke-width=".7"/><ellipse cx="15.6" cy="13.2" rx="1.6" ry="0.75" transform="rotate(-35 15.6 13.2)" fill="#eef6ef" stroke="#4a9a62" stroke-width=".7"/><ellipse cx="16.6" cy="17.4" rx="1.6" ry="0.75" transform="rotate(20 16.6 17.4)" fill="#eef6ef" stroke="#4a9a62" stroke-width=".7"/><ellipse cx="10.6" cy="4.4" rx="1.3" ry="0.6" transform="rotate(-60 10.6 4.4)" fill="#eef6ef" stroke="#4a9a62" stroke-width=".7"/><ellipse cx="6.2" cy="11.6" rx="1.3" ry="0.6" transform="rotate(10 6.2 11.6)" fill="#eef6ef" stroke="#4a9a62" stroke-width=".7"/><circle cx="9.7" cy="10.2" r="2" fill="#fff" stroke="#c4562a" stroke-width=".9"/><path d="M8.6 10.2 L10.8 10.2 M9.7 9.1 L9.7 11.3" stroke="#c4562a" stroke-width=".5" stroke-opacity=".8"/><circle cx="7.7" cy="15" r="1.9" fill="#fff" stroke="#c4562a" stroke-width=".9"/><path d="M6.66 15 L8.75 15 M7.7 13.96 L7.7 16.05" stroke="#c4562a" stroke-width=".5" stroke-opacity=".8"/><circle cx="11.2" cy="14.7" r="1.9" fill="#fff" stroke="#c4562a" stroke-width=".9"/><path d="M10.15 14.7 L12.24 14.7 M11.2 13.65 L11.2 15.74" stroke="#c4562a" stroke-width=".5" stroke-opacity=".8"/></g>
<g transform="translate(292.08 228.2)"><path d="M22.34 0 L27.79 4 V33.7 H4.75 L0 29.4 Z" fill="#1a1408" fill-opacity=".3"/><path d="M22.34 0 L26.79 3.2 V32.9 H4.15 L0 29.4 Z" fill="#2e281c" fill-opacity=".55"/><path d="M22.34 0 L26.09 2.8 V32.2 H22.34 V29.4 Z" fill="url(#sr)"/><path d="M0 29.4 L3.75 32.2 H26.09 L22.34 29.4 Z" fill="url(#sb)"/><rect width="22.34" height="29.4" fill="#fdfdfd"/><rect x="1.5" y="1.5" width="19.14" height="26" rx="1.6" fill="url(#fi)"/><path d="M21.79 0 V28.85 H0" fill="none" stroke="#c4c4c7" stroke-width="1.7" stroke-opacity=".75"/><path d="M22.04 0 V29.1 H0" fill="none" stroke="#adadb1" stroke-width=".6"/><rect x="4.15" y="3" width="2.9" height="10.6" rx="1.2" fill="#1f7f48"/><rect x="5" y="3.9" width="1.2" height="8.8" rx=".4" fill="#fff" fill-opacity=".74"/><rect x="4.55" y="7.55" width="2.1" height="1.5" fill="#1f7f48"/><rect x="15.75" y="3" width="2.9" height="10.6" rx="1.2" fill="#1f7f48"/><rect x="16.6" y="3.9" width="1.2" height="8.8" rx=".4" fill="#fff" fill-opacity=".74"/><rect x="16.15" y="7.55" width="2.1" height="1.5" fill="#1f7f48"/><line x1="8" y1="4.1" x2="10.6" y2="9.6" stroke="#1f7f48" stroke-width="2.6" stroke-linecap="round"/><line x1="8" y1="4.1" x2="10.6" y2="9.6" stroke="#fff" stroke-opacity=".8" stroke-width=".8" stroke-dasharray="3 1"/><line x1="14.8" y1="4.1" x2="12.2" y2="9.6" stroke="#1f7f48" stroke-width="2.6" stroke-linecap="round"/><line x1="14.8" y1="4.1" x2="12.2" y2="9.6" stroke="#fff" stroke-opacity=".8" stroke-width=".8" stroke-dasharray="3 1"/><rect x="4.15" y="16.6" width="2.9" height="10.2" rx="1.2" fill="#1f7f48"/><rect x="5" y="17.5" width="1.2" height="8.4" rx=".4" fill="#fff" fill-opacity=".74"/><rect x="4.55" y="20.95" width="2.1" height="1.5" fill="#1f7f48"/><rect x="15.75" y="16.6" width="2.9" height="10.2" rx="1.2" fill="#1f7f48"/><rect x="16.6" y="17.5" width="1.2" height="8.4" rx=".4" fill="#fff" fill-opacity=".74"/><rect x="16.15" y="20.95" width="2.1" height="1.5" fill="#1f7f48"/><line x1="8" y1="25.7" x2="10.6" y2="20.2" stroke="#1f7f48" stroke-width="2.6" stroke-linecap="round"/><line x1="8" y1="25.7" x2="10.6" y2="20.2" stroke="#fff" stroke-opacity=".8" stroke-width=".8" stroke-dasharray="3 1"/><line x1="14.8" y1="25.7" x2="12.2" y2="20.2" stroke="#1f7f48" stroke-width="2.6" stroke-linecap="round"/><line x1="14.8" y1="25.7" x2="12.2" y2="20.2" stroke="#fff" stroke-opacity=".8" stroke-width=".8" stroke-dasharray="3 1"/><text x="10.2" y="16.6" font-family="'Liberation Sans',sans-serif" font-size="3.9" font-weight="700" fill="#111" stroke="#111" stroke-width=".3">8</text></g>
<g transform="translate(314.42 228.2)"><path d="M22.34 0 L27.79 4 V33.7 H4.75 L0 29.4 Z" fill="#1a1408" fill-opacity=".3"/><path d="M22.34 0 L26.79 3.2 V32.9 H4.15 L0 29.4 Z" fill="#2e281c" fill-opacity=".55"/><path d="M22.34 0 L26.09 2.8 V32.2 H22.34 V29.4 Z" fill="url(#sr)"/><path d="M0 29.4 L3.75 32.2 H26.09 L22.34 29.4 Z" fill="url(#sb)"/><rect width="22.34" height="29.4" fill="#fdfdfd"/><rect x="1.5" y="1.5" width="19.14" height="26" rx="1.6" fill="url(#fi)"/><path d="M21.79 0 V28.85 H0" fill="none" stroke="#c4c4c7" stroke-width="1.7" stroke-opacity=".75"/><path d="M22.04 0 V29.1 H0" fill="none" stroke="#adadb1" stroke-width=".6"/><text x="0.9" y="6.5" font-family="'Liberation Sans',sans-serif" font-size="4.4" font-weight="700" fill="#111" stroke="#111" stroke-width=".3">9</text><rect x="4.25" y="2.3" width="3.1" height="7.2" rx="1.2" fill="#1f7f48"/><rect x="5.1" y="3.2" width="1.4" height="5.4" rx=".4" fill="#fff" fill-opacity=".74"/><rect x="4.65" y="5.15" width="2.3" height="1.5" fill="#1f7f48"/><rect x="4.25" y="11.1" width="3.1" height="7.2" rx="1.2" fill="#1f7f48"/><rect x="5.1" y="12" width="1.4" height="5.4" rx=".4" fill="#fff" fill-opacity=".74"/><rect x="4.65" y="13.95" width="2.3" height="1.5" fill="#1f7f48"/><rect x="4.25" y="19.9" width="3.1" height="7.6" rx="1.2" fill="#1f7f48"/><rect x="5.1" y="20.8" width="1.4" height="5.8" rx=".4" fill="#fff" fill-opacity=".74"/><rect x="4.65" y="22.95" width="2.3" height="1.5" fill="#1f7f48"/><rect x="9.45" y="2.3" width="3.1" height="7.2" rx="1.2" fill="#c25a30"/><rect x="10.3" y="3.2" width="1.4" height="5.4" rx=".4" fill="#fff" fill-opacity=".74"/><rect x="9.85" y="5.15" width="2.3" height="1.5" fill="#c25a30"/><rect x="9.45" y="11.1" width="3.1" height="7.2" rx="1.2" fill="#c25a30"/><rect x="10.3" y="12" width="1.4" height="5.4" rx=".4" fill="#fff" fill-opacity=".74"/><rect x="9.85" y="13.95" width="2.3" height="1.5" fill="#c25a30"/><rect x="9.45" y="19.9" width="3.1" height="7.6" rx="1.2" fill="#c25a30"/><rect x="10.3" y="20.8" width="1.4" height="5.8" rx=".4" fill="#fff" fill-opacity=".74"/><rect x="9.85" y="22.95" width="2.3" height="1.5" fill="#c25a30"/><rect x="14.55" y="2.3" width="3.1" height="7.2" rx="1.2" fill="#1f7f48"/><rect x="15.4" y="3.2" width="1.4" height="5.4" rx=".4" fill="#fff" fill-opacity=".74"/><rect x="14.95" y="5.15" width="2.3" height="1.5" fill="#1f7f48"/><rect x="14.55" y="11.1" width="3.1" height="7.2" rx="1.2" fill="#1f7f48"/><rect x="15.4" y="12" width="1.4" height="5.4" rx=".4" fill="#fff" fill-opacity=".74"/><rect x="14.95" y="13.95" width="2.3" height="1.5" fill="#1f7f48"/><rect x="14.55" y="19.9" width="3.1" height="7.6" rx="1.2" fill="#1f7f48"/><rect x="15.4" y="20.8" width="1.4" height="5.8" rx=".4" fill="#fff" fill-opacity=".74"/><rect x="14.95" y="22.95" width="2.3" height="1.5" fill="#1f7f48"/></g>
<g transform="translate(336.76 228.2)"><path d="M22.34 0 L27.79 4 V33.7 H4.75 L0 29.4 Z" fill="#1a1408" fill-opacity=".3"/><path d="M22.34 0 L26.79 3.2 V32.9 H4.15 L0 29.4 Z" fill="#2e281c" fill-opacity=".55"/><path d="M22.34 0 L26.09 2.8 V32.2 H22.34 V29.4 Z" fill="url(#sr)"/><path d="M0 29.4 L3.75 32.2 H26.09 L22.34 29.4 Z" fill="url(#sb)"/><rect width="22.34" height="29.4" fill="#fdfdfd"/><rect x="1.5" y="1.5" width="19.14" height="26" rx="1.6" fill="url(#fi)"/><path d="M21.79 0 V28.85 H0" fill="none" stroke="#c4c4c7" stroke-width="1.7" stroke-opacity=".75"/><path d="M22.04 0 V29.1 H0" fill="none" stroke="#adadb1" stroke-width=".6"/><text x="2.3" y="6.2" font-family="'Liberation Sans',sans-serif" font-size="4.2" font-weight="700" fill="#111" stroke="#111" stroke-width=".3">W</text><text transform="translate(10.75 23.97) scale(1.54 2.01)" text-anchor="middle" font-family="'Liberation Sans','Noto Sans CJK SC',sans-serif" font-size="10" font-weight="500" fill="#0d0d0d">西</text></g>
<g transform="translate(359.1 228.2)"><path d="M22.34 0 L27.79 4 V33.7 H4.75 L0 29.4 Z" fill="#1a1408" fill-opacity=".3"/><path d="M22.34 0 L26.79 3.2 V32.9 H4.15 L0 29.4 Z" fill="#2e281c" fill-opacity=".55"/><path d="M22.34 0 L26.09 2.8 V32.2 H22.34 V29.4 Z" fill="url(#sr)"/><path d="M0 29.4 L3.75 32.2 H26.09 L22.34 29.4 Z" fill="url(#sb)"/><rect width="22.34" height="29.4" fill="#fdfdfd"/><rect x="1.5" y="1.5" width="19.14" height="26" rx="1.6" fill="url(#fi)"/><path d="M21.79 0 V28.85 H0" fill="none" stroke="#c4c4c7" stroke-width="1.7" stroke-opacity=".75"/><path d="M22.04 0 V29.1 H0" fill="none" stroke="#adadb1" stroke-width=".6"/><text x="2.8" y="6.7" font-family="'Liberation Sans',sans-serif" font-size="4.6" font-weight="700" fill="#111" stroke="#111" stroke-width=".3">6</text><text transform="translate(12.71 9.47) scale(1.14 0.79)" text-anchor="middle" font-family="'Liberation Sans','Noto Sans CJK SC',sans-serif" font-size="10" font-weight="700" fill="#151515">六</text><text transform="translate(11.16 25.4) scale(1.46 1.71)" text-anchor="middle" font-family="'Liberation Sans','Noto Sans CJK SC',sans-serif" font-size="10" font-weight="500" fill="#ab3a12">萬</text></g>
<g transform="translate(381.44 228.2)"><path d="M22.34 0 L27.79 4 V33.7 H4.75 L0 29.4 Z" fill="#1a1408" fill-opacity=".3"/><path d="M22.34 0 L26.79 3.2 V32.9 H4.15 L0 29.4 Z" fill="#2e281c" fill-opacity=".55"/><path d="M22.34 0 L26.09 2.8 V32.2 H22.34 V29.4 Z" fill="url(#sr)"/><path d="M0 29.4 L3.75 32.2 H26.09 L22.34 29.4 Z" fill="url(#sb)"/><rect width="22.34" height="29.4" fill="#fdfdfd"/><rect x="1.5" y="1.5" width="19.14" height="26" rx="1.6" fill="url(#fi)"/><path d="M21.79 0 V28.85 H0" fill="none" stroke="#c4c4c7" stroke-width="1.7" stroke-opacity=".75"/><path d="M22.04 0 V29.1 H0" fill="none" stroke="#adadb1" stroke-width=".6"/><text x="1.6" y="16.6" font-family="'Liberation Sans',sans-serif" font-size="4.2" font-weight="700" fill="#111" stroke="#111" stroke-width=".3">5</text><circle cx="5.6" cy="6.5" r="3.8" fill="#33956a"/><circle cx="5.6" cy="6.5" r="2.36" fill="none" stroke="#fff" stroke-opacity=".55" stroke-width="0.76"/><circle cx="5.6" cy="6.5" r="0.95" fill="none" stroke="#fff" stroke-opacity=".4" stroke-width="0.53"/><circle cx="16.4" cy="6.5" r="3.8" fill="#5c5c5c"/><circle cx="16.4" cy="6.5" r="2.36" fill="none" stroke="#fff" stroke-opacity=".55" stroke-width="0.76"/><circle cx="16.4" cy="6.5" r="0.95" fill="none" stroke="#fff" stroke-opacity=".4" stroke-width="0.53"/><circle cx="11" cy="14.5" r="3.8" fill="#c4623a"/><circle cx="11" cy="14.5" r="2.36" fill="none" stroke="#fff" stroke-opacity=".55" stroke-width="0.76"/><circle cx="11" cy="14.5" r="0.95" fill="none" stroke="#fff" stroke-opacity=".4" stroke-width="0.53"/><circle cx="5.6" cy="22.5" r="3.8" fill="#5c5c5c"/><circle cx="5.6" cy="22.5" r="2.36" fill="none" stroke="#fff" stroke-opacity=".55" stroke-width="0.76"/><circle cx="5.6" cy="22.5" r="0.95" fill="none" stroke="#fff" stroke-opacity=".4" stroke-width="0.53"/><circle cx="16.4" cy="22.5" r="3.8" fill="#33956a"/><circle cx="16.4" cy="22.5" r="2.36" fill="none" stroke="#fff" stroke-opacity=".55" stroke-width="0.76"/><circle cx="16.4" cy="22.5" r="0.95" fill="none" stroke="#fff" stroke-opacity=".4" stroke-width="0.53"/></g>
<g transform="translate(403.78 228.2)"><path d="M22.34 0 L27.79 4 V33.7 H4.75 L0 29.4 Z" fill="#1a1408" fill-opacity=".3"/><path d="M22.34 0 L26.79 3.2 V32.9 H4.15 L0 29.4 Z" fill="#2e281c" fill-opacity=".55"/><path d="M22.34 0 L26.09 2.8 V32.2 H22.34 V29.4 Z" fill="url(#sr)"/><path d="M0 29.4 L3.75 32.2 H26.09 L22.34 29.4 Z" fill="url(#sb)"/><rect width="22.34" height="29.4" fill="#fdfdfd"/><rect x="1.5" y="1.5" width="19.14" height="26" rx="1.6" fill="url(#fi)"/><path d="M21.79 0 V28.85 H0" fill="none" stroke="#c4c4c7" stroke-width="1.7" stroke-opacity=".75"/><path d="M22.04 0 V29.1 H0" fill="none" stroke="#adadb1" stroke-width=".6"/><rect x="4.15" y="3" width="2.9" height="10.6" rx="1.2" fill="#1f7f48"/><rect x="5" y="3.9" width="1.2" height="8.8" rx=".4" fill="#fff" fill-opacity=".74"/><rect x="4.55" y="7.55" width="2.1" height="1.5" fill="#1f7f48"/><rect x="15.75" y="3" width="2.9" height="10.6" rx="1.2" fill="#1f7f48"/><rect x="16.6" y="3.9" width="1.2" height="8.8" rx=".4" fill="#fff" fill-opacity=".74"/><rect x="16.15" y="7.55" width="2.1" height="1.5" fill="#1f7f48"/><line x1="8" y1="4.1" x2="10.6" y2="9.6" stroke="#1f7f48" stroke-width="2.6" stroke-linecap="round"/><line x1="8" y1="4.1" x2="10.6" y2="9.6" stroke="#fff" stroke-opacity=".8" stroke-width=".8" stroke-dasharray="3 1"/><line x1="14.8" y1="4.1" x2="12.2" y2="9.6" stroke="#1f7f48" stroke-width="2.6" stroke-linecap="round"/><line x1="14.8" y1="4.1" x2="12.2" y2="9.6" stroke="#fff" stroke-opacity=".8" stroke-width=".8" stroke-dasharray="3 1"/><rect x="4.15" y="16.6" width="2.9" height="10.2" rx="1.2" fill="#1f7f48"/><rect x="5" y="17.5" width="1.2" height="8.4" rx=".4" fill="#fff" fill-opacity=".74"/><rect x="4.55" y="20.95" width="2.1" height="1.5" fill="#1f7f48"/><rect x="15.75" y="16.6" width="2.9" height="10.2" rx="1.2" fill="#1f7f48"/><rect x="16.6" y="17.5" width="1.2" height="8.4" rx=".4" fill="#fff" fill-opacity=".74"/><rect x="16.15" y="20.95" width="2.1" height="1.5" fill="#1f7f48"/><line x1="8" y1="25.7" x2="10.6" y2="20.2" stroke="#1f7f48" stroke-width="2.6" stroke-linecap="round"/><line x1="8" y1="25.7" x2="10.6" y2="20.2" stroke="#fff" stroke-opacity=".8" stroke-width=".8" stroke-dasharray="3 1"/><line x1="14.8" y1="25.7" x2="12.2" y2="20.2" stroke="#1f7f48" stroke-width="2.6" stroke-linecap="round"/><line x1="14.8" y1="25.7" x2="12.2" y2="20.2" stroke="#fff" stroke-opacity=".8" stroke-width=".8" stroke-dasharray="3 1"/><text x="10.2" y="16.6" font-family="'Liberation Sans',sans-serif" font-size="3.9" font-weight="700" fill="#111" stroke="#111" stroke-width=".3">8</text></g>
<g transform="translate(24 257.6)"><path d="M22.34 0 L27.79 4 V33.7 H4.75 L0 29.4 Z" fill="#1a1408" fill-opacity=".3"/><path d="M22.34 0 L26.79 3.2 V32.9 H4.15 L0 29.4 Z" fill="#2e281c" fill-opacity=".55"/><path d="M22.34 0 L26.09 2.8 V32.2 H22.34 V29.4 Z" fill="url(#sr)"/><path d="M0 29.4 L3.75 32.2 H26.09 L22.34 29.4 Z" fill="url(#sb)"/><rect width="22.34" height="29.4" fill="#fdfdfd"/><rect x="1.5" y="1.5" width="19.14" height="26" rx="1.6" fill="url(#fi)"/><path d="M21.79 0 V28.85 H0" fill="none" stroke="#c4c4c7" stroke-width="1.7" stroke-opacity=".75"/><path d="M22.04 0 V29.1 H0" fill="none" stroke="#adadb1" stroke-width=".6"/><text x="2.3" y="6.2" font-family="'Liberation Sans',sans-serif" font-size="4.2" font-weight="700" fill="#111" stroke="#111" stroke-width=".3">N</text><text transform="translate(11.31 22.89) scale(1.61 1.76)" text-anchor="middle" font-family="'Liberation Sans','Noto Sans CJK SC',sans-serif" font-size="10" font-weight="500" fill="#0d0d0d">北</text></g>
<g transform="translate(46.34 257.6)"><path d="M22.34 0 L27.79 4 V33.7 H4.75 L0 29.4 Z" fill="#1a1408" fill-opacity=".3"/><path d="M22.34 0 L26.79 3.2 V32.9 H4.15 L0 29.4 Z" fill="#2e281c" fill-opacity=".55"/><path d="M22.34 0 L26.09 2.8 V32.2 H22.34 V29.4 Z" fill="url(#sr)"/><path d="M0 29.4 L3.75 32.2 H26.09 L22.34 29.4 Z" fill="url(#sb)"/><rect width="22.34" height="29.4" fill="#fdfdfd"/><rect x="1.5" y="1.5" width="19.14" height="26" rx="1.6" fill="url(#fi)"/><path d="M21.79 0 V28.85 H0" fill="none" stroke="#c4c4c7" stroke-width="1.7" stroke-opacity=".75"/><path d="M22.04 0 V29.1 H0" fill="none" stroke="#adadb1" stroke-width=".6"/><text x="2" y="6" font-family="'Liberation Sans',sans-serif" font-size="4.3" font-weight="700" fill="#111" stroke="#111" stroke-width=".3">1</text><text transform="translate(16.79 7.24) scale(0.47 0.54)" text-anchor="middle" font-family="'Liberation Sans','Noto Sans CJK SC',sans-serif" font-size="10" font-weight="700" fill="#c24e22">春</text><rect x="6.7" y="23.4" width="9.4" height="3.2" fill="#fff" stroke="#2a7440" stroke-width="1.15"/><path d="M11 23 L10.6 16 L7.2 4.8 M10.7 18 L9 10 L9.4 4.4 M11 19 L13 10 L12.2 4.6 M11 20.4 L15 12 L15.4 8" stroke="#3a3a3a" stroke-width=".7" fill="none"/><ellipse cx="5.4" cy="7.6" rx="1.6" ry="0.75" transform="rotate(40 5.4 7.6)" fill="#eef6ef" stroke="#4a9a62" stroke-width=".7"/><ellipse cx="4.8" cy="15.2" rx="1.6" ry="0.75" transform="rotate(-20 4.8 15.2)" fill="#eef6ef" stroke="#4a9a62" stroke-width=".7"/><ellipse cx="15.6" cy="13.2" rx="1.6" ry="0.75" transform="rotate(-35 15.6 13.2)" fill="#eef6ef" stroke="#4a9a62" stroke-width=".7"/><ellipse cx="16.6" cy="17.4" rx="1.6" ry="0.75" transform="rotate(20 16.6 17.4)" fill="#eef6ef" stroke="#4a9a62" stroke-width=".7"/><ellipse cx="10.6" cy="4.4" rx="1.3" ry="0.6" transform="rotate(-60 10.6 4.4)" fill="#eef6ef" stroke="#4a9a62" stroke-width=".7"/><ellipse cx="6.2" cy="11.6" rx="1.3" ry="0.6" transform="rotate(10 6.2 11.6)" fill="#eef6ef" stroke="#4a9a62" stroke-width=".7"/><circle cx="9.7" cy="10.2" r="2" fill="#fff" stroke="#c4562a" stroke-width=".9"/><path d="M8.6 10.2 L10.8 10.2 M9.7 9.1 L9.7 11.3" stroke="#c4562a" stroke-width=".5" stroke-opacity=".8"/><circle cx="7.7" cy="15" r="1.9" fill="#fff" stroke="#c4562a" stroke-width=".9"/><path d="M6.66 15 L8.75 15 M7.7 13.96 L7.7 16.05" stroke="#c4562a" stroke-width=".5" stroke-opacity=".8"/><circle cx="11.2" cy="14.7" r="1.9" fill="#fff" stroke="#c4562a" stroke-width=".9"/><path d="M10.15 14.7 L12.24 14.7 M11.2 13.65 L11.2 15.74" stroke="#c4562a" stroke-width=".5" stroke-opacity=".8"/></g>
<g transform="translate(68.68 257.6)"><path d="M22.34 0 L27.79 4 V33.7 H4.75 L0 29.4 Z" fill="#1a1408" fill-opacity=".3"/><path d="M22.34 0 L26.79 3.2 V32.9 H4.15 L0 29.4 Z" fill="#2e281c" fill-opacity=".55"/><path d="M22.34 0 L26.09 2.8 V32.2 H22.34 V29.4 Z" fill="url(#sr)"/><path d="M0 29.4 L3.75 32.2 H26.09 L22.34 29.4 Z" fill="url(#sb)"/><rect width="22.34" height="29.4" fill="#fdfdfd"/><rect x="1.5" y="1.5" width="19.14" height="26" rx="1.6" fill="url(#fi)"/><path d="M21.79 0 V28.85 H0" fill="none" stroke="#c4c4c7" stroke-width="1.7" stroke-opacity=".75"/><path d="M22.04 0 V29.1 H0" fill="none" stroke="#adadb1" stroke-width=".6"/><text x="2.8" y="6.7" font-family="'Liberation Sans',sans-serif" font-size="4.6" font-weight="700" fill="#111" stroke="#111" stroke-width=".3">5</text><text transform="translate(12.26 8.95) scale(1.18 0.72)" text-anchor="middle" font-family="'Liberation Sans','Noto Sans CJK SC',sans-serif" font-size="10" font-weight="700" fill="#151515">伍</text><text transform="translate(11.16 25.4) scale(1.46 1.71)" text-anchor="middle" font-family="'Liberation Sans','Noto Sans CJK SC',sans-serif" font-size="10" font-weight="500" fill="#ab3a12">萬</text></g>
<g transform="translate(91.02 257.6)"><path d="M22.34 0 L27.79 4 V33.7 H4.75 L0 29.4 Z" fill="#1a1408" fill-opacity=".3"/><path d="M22.34 0 L26.79 3.2 V32.9 H4.15 L0 29.4 Z" fill="#2e281c" fill-opacity=".55"/><path d="M22.34 0 L26.09 2.8 V32.2 H22.34 V29.4 Z" fill="url(#sr)"/><path d="M0 29.4 L3.75 32.2 H26.09 L22.34 29.4 Z" fill="url(#sb)"/><rect width="22.34" height="29.4" fill="#fdfdfd"/><rect x="1.5" y="1.5" width="19.14" height="26" rx="1.6" fill="url(#fi)"/><path d="M21.79 0 V28.85 H0" fill="none" stroke="#c4c4c7" stroke-width="1.7" stroke-opacity=".75"/><path d="M22.04 0 V29.1 H0" fill="none" stroke="#adadb1" stroke-width=".6"/><text x="2.3" y="6.2" font-family="'Liberation Sans',sans-serif" font-size="4.2" font-weight="700" fill="#111" stroke="#111" stroke-width=".3">S</text><text transform="translate(11.05 23.62) scale(1.79 2.12)" text-anchor="middle" font-family="'Liberation Sans','Noto Sans CJK SC',sans-serif" font-size="10" font-weight="500" fill="#0d0d0d">南</text></g>
<g transform="translate(113.36 257.6)"><path d="M22.34 0 L27.79 4 V33.7 H4.75 L0 29.4 Z" fill="#1a1408" fill-opacity=".3"/><path d="M22.34 0 L26.79 3.2 V32.9 H4.15 L0 29.4 Z" fill="#2e281c" fill-opacity=".55"/><path d="M22.34 0 L26.09 2.8 V32.2 H22.34 V29.4 Z" fill="url(#sr)"/><path d="M0 29.4 L3.75 32.2 H26.09 L22.34 29.4 Z" fill="url(#sb)"/><rect width="22.34" height="29.4" fill="#fdfdfd"/><rect x="1.5" y="1.5" width="19.14" height="26" rx="1.6" fill="url(#fi)"/><path d="M21.79 0 V28.85 H0" fill="none" stroke="#c4c4c7" stroke-width="1.7" stroke-opacity=".75"/><path d="M22.04 0 V29.1 H0" fill="none" stroke="#adadb1" stroke-width=".6"/><text x="2.2" y="6.5" font-family="'Liberation Sans',sans-serif" font-size="4.4" font-weight="700" fill="#111" stroke="#111" stroke-width=".3">4</text><rect x="5.05" y="3.1" width="3.3" height="9.9" rx="1.2" fill="#1f7f48"/><rect x="5.9" y="4" width="1.6" height="8.1" rx=".4" fill="#fff" fill-opacity=".74"/><rect x="5.45" y="7.3" width="2.5" height="1.5" fill="#1f7f48"/><rect x="5.05" y="16.5" width="3.3" height="10.1" rx="1.2" fill="#1f7f48"/><rect x="5.9" y="17.4" width="1.6" height="8.3" rx=".4" fill="#fff" fill-opacity=".74"/><rect x="5.45" y="20.8" width="2.5" height="1.5" fill="#1f7f48"/><rect x="14.25" y="3.1" width="3.3" height="9.9" rx="1.2" fill="#1f7f48"/><rect x="15.1" y="4" width="1.6" height="8.1" rx=".4" fill="#fff" fill-opacity=".74"/><rect x="14.65" y="7.3" width="2.5" height="1.5" fill="#1f7f48"/><rect x="14.25" y="16.5" width="3.3" height="10.1" rx="1.2" fill="#1f7f48"/><rect x="15.1" y="17.4" width="1.6" height="8.3" rx=".4" fill="#fff" fill-opacity=".74"/><rect x="14.65" y="20.8" width="2.5" height="1.5" fill="#1f7f48"/></g>
<g transform="translate(135.7 257.6)"><path d="M22.34 0 L27.79 4 V33.7 H4.75 L0 29.4 Z" fill="#1a1408" fill-opacity=".3"/><path d="M22.34 0 L26.79 3.2 V32.9 H4.15 L0 29.4 Z" fill="#2e281c" fill-opacity=".55"/><path d="M22.34 0 L26.09 2.8 V32.2 H22.34 V29.4 Z" fill="url(#sr)"/><path d="M0 29.4 L3.75 32.2 H26.09 L22.34 29.4 Z" fill="url(#sb)"/><rect width="22.34" height="29.4" fill="#fdfdfd"/><rect x="1.5" y="1.5" width="19.14" height="26" rx="1.6" fill="url(#fi)"/><path d="M21.79 0 V28.85 H0" fill="none" stroke="#c4c4c7" stroke-width="1.7" stroke-opacity=".75"/><path d="M22.04 0 V29.1 H0" fill="none" stroke="#adadb1" stroke-width=".6"/><text x="2.1" y="6.7" font-family="'Liberation Sans',sans-serif" font-size="4.6" font-weight="700" fill="#111" stroke="#111" stroke-width=".3">3</text><circle cx="16" cy="6" r="4.5" fill="#33956a"/><path d="M13.03 3.03 L18.97 8.97 M18.97 3.03 L13.03 8.97" stroke="#fff" stroke-opacity=".22" stroke-width="0.9"/><circle cx="11.2" cy="14.7" r="4.5" fill="#c4623a"/><path d="M8.23 11.73 L14.17 17.67 M14.17 11.73 L8.23 17.67" stroke="#fff" stroke-opacity=".22" stroke-width="0.9"/><circle cx="6.1" cy="23" r="4.5" fill="#5c5c5c"/><path d="M3.13 20.03 L9.07 25.97 M9.07 20.03 L3.13 25.97" stroke="#fff" stroke-opacity=".22" stroke-width="0.9"/></g>
<g transform="translate(158.04 257.6)"><path d="M22.34 0 L27.79 4 V33.7 H4.75 L0 29.4 Z" fill="#1a1408" fill-opacity=".3"/><path d="M22.34 0 L26.79 3.2 V32.9 H4.15 L0 29.4 Z" fill="#2e281c" fill-opacity=".55"/><path d="M22.34 0 L26.09 2.8 V32.2 H22.34 V29.4 Z" fill="url(#sr)"/><path d="M0 29.4 L3.75 32.2 H26.09 L22.34 29.4 Z" fill="url(#sb)"/><rect width="22.34" height="29.4" fill="#fdfdfd"/><rect x="1.5" y="1.5" width="19.14" height="26" rx="1.6" fill="url(#fi)"/><path d="M21.79 0 V28.85 H0" fill="none" stroke="#c4c4c7" stroke-width="1.7" stroke-opacity=".75"/><path d="M22.04 0 V29.1 H0" fill="none" stroke="#adadb1" stroke-width=".6"/><text x="2.4" y="6.2" font-family="'Liberation Sans',sans-serif" font-size="4.3" font-weight="700" fill="#111" stroke="#111" stroke-width=".3">1</text><path d="M3.6 9.8 C6.4 11 8.8 13.6 9.6 17.2 C6.4 16.6 4 13.6 3.6 9.8Z" fill="#2c8a50"/><path d="M18.9 15.6 C17.8 18.6 15.4 20.6 12.4 21.2 C13.2 18.4 15.8 16.2 18.9 15.6Z" fill="#2c8a50"/><path d="M9.4 20.4 C8.8 14.4 12.6 5.4 18.3 1.9 C19.9 7.4 17.4 15.4 12.6 20.8 Z" fill="#1b1b1b"/><path d="M11.4 17.6 L17.1 4.8" stroke="#fff" stroke-opacity=".8" stroke-width="1" stroke-dasharray=".9 1.2" fill="none"/><path d="M13.4 17 L18 7.4" stroke="#fff" stroke-opacity=".5" stroke-width=".7" stroke-dasharray=".7 1.2" fill="none"/><path d="M10.2 15.4 L14.8 5.6" stroke="#fff" stroke-opacity=".35" stroke-width=".6" stroke-dasharray=".6 1.3" fill="none"/><path d="M4.9 19.3 C6.8 21.6 10.6 22.2 14.3 21 C15.6 23.4 13.4 26.2 9.8 26.2 C6.6 26 4.7 23 4.9 19.3Z" fill="#fff" stroke="#1b1b1b" stroke-width="1"/><path d="M7 23.4 C9.2 24.8 12 24.6 13.8 23" stroke="#1b1b1b" stroke-width=".8" fill="none"/><path d="M9.4 26 C11.4 26.6 13.4 25.8 14.2 24.4" stroke="#1b1b1b" stroke-width="1.2" fill="none"/><circle cx="4.1" cy="18.5" r=".85" fill="#c6501e"/></g>
<g transform="translate(180.38 257.6)"><path d="M22.34 0 L27.79 4 V33.7 H4.75 L0 29.4 Z" fill="#1a1408" fill-opacity=".3"/><path d="M22.34 0 L26.79 3.2 V32.9 H4.15 L0 29.4 Z" fill="#2e281c" fill-opacity=".55"/><path d="M22.34 0 L26.09 2.8 V32.2 H22.34 V29.4 Z" fill="url(#sr)"/><path d="M0 29.4 L3.75 32.2 H26.09 L22.34 29.4 Z" fill="url(#sb)"/><rect width="22.34" height="29.4" fill="#fdfdfd"/><rect x="1.5" y="1.5" width="19.14" height="26" rx="1.6" fill="url(#fi)"/><path d="M21.79 0 V28.85 H0" fill="none" stroke="#c4c4c7" stroke-width="1.7" stroke-opacity=".75"/><path d="M22.04 0 V29.1 H0" fill="none" stroke="#adadb1" stroke-width=".6"/><text x="2" y="6" font-family="'Liberation Sans',sans-serif" font-size="4.3" font-weight="700" fill="#111" stroke="#111" stroke-width=".3">2</text><text transform="translate(17.59 7.28) scale(0.49 0.61)" text-anchor="middle" font-family="'Liberation Sans','Noto Sans CJK SC',sans-serif" font-size="10" font-weight="700" fill="#c24e22">夏</text><rect x="6.7" y="23.4" width="9.4" height="3.2" fill="#fff" stroke="#2a7440" stroke-width="1.15"/><path d="M11.4 23 L11 19.6 M12.6 23 L12.8 19.8 M8.6 15.6 L7.4 9" stroke="#3a3a3a" stroke-width=".75" fill="none"/><ellipse cx="7.3" cy="6.3" rx="2.2" ry="2.8" fill="#fff" stroke="#c4562a" stroke-width=".95"/><path d="M6.2 7.6 Q7.3 4.6 8.5 7.6 M7.3 3.6 V5.4" stroke="#c4562a" stroke-width=".55" fill="none"/><ellipse cx="7.25" cy="15.3" rx="3.3" ry="1.25" transform="rotate(-165 7.25 15.3)" fill="#fff" stroke="#c4562a" stroke-width=".8"/><ellipse cx="13.95" cy="15.3" rx="3.3" ry="1.25" transform="rotate(-15 13.95 15.3)" fill="#fff" stroke="#c4562a" stroke-width=".8"/><ellipse cx="7.84" cy="17.21" rx="2.8" ry="1.15" transform="rotate(160 7.84 17.21)" fill="#fff" stroke="#c4562a" stroke-width=".8"/><ellipse cx="13.36" cy="17.21" rx="2.8" ry="1.15" transform="rotate(20 13.36 17.21)" fill="#fff" stroke="#c4562a" stroke-width=".8"/><ellipse cx="8.44" cy="13.63" rx="3.2" ry="1.35" transform="rotate(-130 8.44 13.63)" fill="#fff" stroke="#c4562a" stroke-width=".8"/><ellipse cx="12.76" cy="13.63" rx="3.2" ry="1.35" transform="rotate(-50 12.76 13.63)" fill="#fff" stroke="#c4562a" stroke-width=".8"/><ellipse cx="10.6" cy="12.73" rx="3.3" ry="1.5" transform="rotate(-90 10.6 12.73)" fill="#fff" stroke="#c4562a" stroke-width=".8"/><ellipse cx="9.21" cy="18.18" rx="2.3" ry="1" transform="rotate(125 9.21 18.18)" fill="#fff" stroke="#c4562a" stroke-width=".8"/><ellipse cx="11.99" cy="18.18" rx="2.3" ry="1" transform="rotate(55 11.99 18.18)" fill="#fff" stroke="#c4562a" stroke-width=".8"/><circle cx="10.6" cy="15.8" r="1.1" fill="#fff" stroke="#c4562a" stroke-width=".6"/></g>
<g transform="translate(202.72 257.6)"><path d="M22.34 0 L27.79 4 V33.7 H4.75 L0 29.4 Z" fill="#1a1408" fill-opacity=".3"/><path d="M22.34 0 L26.79 3.2 V32.9 H4.15 L0 29.4 Z" fill="#2e281c" fill-opacity=".55"/><path d="M22.34 0 L26.09 2.8 V32.2 H22.34 V29.4 Z" fill="url(#sr)"/><path d="M0 29.4 L3.75 32.2 H26.09 L22.34 29.4 Z" fill="url(#sb)"/><rect width="22.34" height="29.4" fill="#fdfdfd"/><rect x="1.5" y="1.5" width="19.14" height="26" rx="1.6" fill="url(#fi)"/><path d="M21.79 0 V28.85 H0" fill="none" stroke="#c4c4c7" stroke-width="1.7" stroke-opacity=".75"/><path d="M22.04 0 V29.1 H0" fill="none" stroke="#adadb1" stroke-width=".6"/><circle cx="4" cy="5.2" r="3.1" fill="#33956a"/><path d="M1.95 3.15 L6.05 7.25 M6.05 3.15 L1.95 7.25" stroke="#fff" stroke-opacity=".22" stroke-width="0.62"/><circle cx="10.9" cy="5.2" r="3.1" fill="#33956a"/><path d="M8.85 3.15 L12.95 7.25 M12.95 3.15 L8.85 7.25" stroke="#fff" stroke-opacity=".22" stroke-width="0.62"/><circle cx="17.9" cy="5.2" r="3.1" fill="#33956a"/><path d="M15.85 3.15 L19.95 7.25 M19.95 3.15 L15.85 7.25" stroke="#fff" stroke-opacity=".22" stroke-width="0.62"/><circle cx="4" cy="14.5" r="3.1" fill="#c4623a"/><path d="M1.95 12.45 L6.05 16.55 M6.05 12.45 L1.95 16.55" stroke="#fff" stroke-opacity=".22" stroke-width="0.62"/><circle cx="10.9" cy="14.5" r="3.1" fill="#c4623a"/><path d="M8.85 12.45 L12.95 16.55 M12.95 12.45 L8.85 16.55" stroke="#fff" stroke-opacity=".22" stroke-width="0.62"/><circle cx="17.9" cy="14.5" r="3.1" fill="#c4623a"/><path d="M15.85 12.45 L19.95 16.55 M19.95 12.45 L15.85 16.55" stroke="#fff" stroke-opacity=".22" stroke-width="0.62"/><circle cx="4" cy="24" r="3.1" fill="#5c5c5c"/><path d="M1.95 21.95 L6.05 26.05 M6.05 21.95 L1.95 26.05" stroke="#fff" stroke-opacity=".22" stroke-width="0.62"/><circle cx="10.9" cy="24" r="3.1" fill="#5c5c5c"/><path d="M8.85 21.95 L12.95 26.05 M12.95 21.95 L8.85 26.05" stroke="#fff" stroke-opacity=".22" stroke-width="0.62"/><circle cx="17.9" cy="24" r="3.1" fill="#5c5c5c"/><path d="M15.85 21.95 L19.95 26.05 M19.95 21.95 L15.85 26.05" stroke="#fff" stroke-opacity=".22" stroke-width="0.62"/><text x="6.3" y="11.4" font-family="'Liberation Sans',sans-serif" font-size="4.2" font-weight="700" fill="#111" stroke="#111" stroke-width=".3">9</text></g>
<g transform="translate(225.06 257.6)"><path d="M22.34 0 L27.79 4 V33.7 H4.75 L0 29.4 Z" fill="#1a1408" fill-opacity=".3"/><path d="M22.34 0 L26.79 3.2 V32.9 H4.15 L0 29.4 Z" fill="#2e281c" fill-opacity=".55"/><path d="M22.34 0 L26.09 2.8 V32.2 H22.34 V29.4 Z" fill="url(#sr)"/><path d="M0 29.4 L3.75 32.2 H26.09 L22.34 29.4 Z" fill="url(#sb)"/><rect width="22.34" height="29.4" fill="#fdfdfd"/><rect x="1.5" y="1.5" width="19.14" height="26" rx="1.6" fill="url(#fi)"/><path d="M21.79 0 V28.85 H0" fill="none" stroke="#c4c4c7" stroke-width="1.7" stroke-opacity=".75"/><path d="M22.04 0 V29.1 H0" fill="none" stroke="#adadb1" stroke-width=".6"/><text x="2.2" y="6.5" font-family="'Liberation Sans',sans-serif" font-size="4.4" font-weight="700" fill="#111" stroke="#111" stroke-width=".3">4</text><rect x="5.05" y="3.1" width="3.3" height="9.9" rx="1.2" fill="#1f7f48"/><rect x="5.9" y="4" width="1.6" height="8.1" rx=".4" fill="#fff" fill-opacity=".74"/><rect x="5.45" y="7.3" width="2.5" height="1.5" fill="#1f7f48"/><rect x="5.05" y="16.5" width="3.3" height="10.1" rx="1.2" fill="#1f7f48"/><rect x="5.9" y="17.4" width="1.6" height="8.3" rx=".4" fill="#fff" fill-opacity=".74"/><rect x="5.45" y="20.8" width="2.5" height="1.5" fill="#1f7f48"/><rect x="14.25" y="3.1" width="3.3" height="9.9" rx="1.2" fill="#1f7f48"/><rect x="15.1" y="4" width="1.6" height="8.1" rx=".4" fill="#fff" fill-opacity=".74"/><rect x="14.65" y="7.3" width="2.5" height="1.5" fill="#1f7f48"/><rect x="14.25" y="16.5" width="3.3" height="10.1" rx="1.2" fill="#1f7f48"/><rect x="15.1" y="17.4" width="1.6" height="8.3" rx=".4" fill="#fff" fill-opacity=".74"/><rect x="14.65" y="20.8" width="2.5" height="1.5" fill="#1f7f48"/></g>
<g transform="translate(247.4 257.6)"><path d="M22.34 0 L27.79 4 V33.7 H4.75 L0 29.4 Z" fill="#1a1408" fill-opacity=".3"/><path d="M22.34 0 L26.79 3.2 V32.9 H4.15 L0 29.4 Z" fill="#2e281c" fill-opacity=".55"/><path d="M22.34 0 L26.09 2.8 V32.2 H22.34 V29.4 Z" fill="url(#sr)"/><path d="M0 29.4 L3.75 32.2 H26.09 L22.34 29.4 Z" fill="url(#sb)"/><rect width="22.34" height="29.4" fill="#fdfdfd"/><rect x="1.5" y="1.5" width="19.14" height="26" rx="1.6" fill="url(#fi)"/><path d="M21.79 0 V28.85 H0" fill="none" stroke="#c4c4c7" stroke-width="1.7" stroke-opacity=".75"/><path d="M22.04 0 V29.1 H0" fill="none" stroke="#adadb1" stroke-width=".6"/><text x="2" y="6" font-family="'Liberation Sans',sans-serif" font-size="4.3" font-weight="700" fill="#111" stroke="#111" stroke-width=".3">1</text><text transform="translate(16.79 7.24) scale(0.47 0.54)" text-anchor="middle" font-family="'Liberation Sans','Noto Sans CJK SC',sans-serif" font-size="10" font-weight="700" fill="#c24e22">春</text><rect x="6.7" y="23.4" width="9.4" height="3.2" fill="#fff" stroke="#2a7440" stroke-width="1.15"/><path d="M11 23 L10.6 16 L7.2 4.8 M10.7 18 L9 10 L9.4 4.4 M11 19 L13 10 L12.2 4.6 M11 20.4 L15 12 L15.4 8" stroke="#3a3a3a" stroke-width=".7" fill="none"/><ellipse cx="5.4" cy="7.6" rx="1.6" ry="0.75" transform="rotate(40 5.4 7.6)" fill="#eef6ef" stroke="#4a9a62" stroke-width=".7"/><ellipse cx="4.8" cy="15.2" rx="1.6" ry="0.75" transform="rotate(-20 4.8 15.2)" fill="#eef6ef" stroke="#4a9a62" stroke-width=".7"/><ellipse cx="15.6" cy="13.2" rx="1.6" ry="0.75" transform="rotate(-35 15.6 13.2)" fill="#eef6ef" stroke="#4a9a62" stroke-width=".7"/><ellipse cx="16.6" cy="17.4" rx="1.6" ry="0.75" transform="rotate(20 16.6 17.4)" fill="#eef6ef" stroke="#4a9a62" stroke-width=".7"/><ellipse cx="10.6" cy="4.4" rx="1.3" ry="0.6" transform="rotate(-60 10.6 4.4)" fill="#eef6ef" stroke="#4a9a62" stroke-width=".7"/><ellipse cx="6.2" cy="11.6" rx="1.3" ry="0.6" transform="rotate(10 6.2 11.6)" fill="#eef6ef" stroke="#4a9a62" stroke-width=".7"/><circle cx="9.7" cy="10.2" r="2" fill="#fff" stroke="#c4562a" stroke-width=".9"/><path d="M8.6 10.2 L10.8 10.2 M9.7 9.1 L9.7 11.3" stroke="#c4562a" stroke-width=".5" stroke-opacity=".8"/><circle cx="7.7" cy="15" r="1.9" fill="#fff" stroke="#c4562a" stroke-width=".9"/><path d="M6.66 15 L8.75 15 M7.7 13.96 L7.7 16.05" stroke="#c4562a" stroke-width=".5" stroke-opacity=".8"/><circle cx="11.2" cy="14.7" r="1.9" fill="#fff" stroke="#c4562a" stroke-width=".9"/><path d="M10.15 14.7 L12.24 14.7 M11.2 13.65 L11.2 15.74" stroke="#c4562a" stroke-width=".5" stroke-opacity=".8"/></g>
<g transform="translate(269.74 257.6)"><path d="M22.34 0 L27.79 4 V33.7 H4.75 L0 29.4 Z" fill="#1a1408" fill-opacity=".3"/><path d="M22.34 0 L26.79 3.2 V32.9 H4.15 L0 29.4 Z" fill="#2e281c" fill-opacity=".55"/><path d="M22.34 0 L26.09 2.8 V32.2 H22.34 V29.4 Z" fill="url(#sr)"/><path d="M0 29.4 L3.75 32.2 H26.09 L22.34 29.4 Z" fill="url(#sb)"/><rect width="22.34" height="29.4" fill="#fdfdfd"/><rect x="1.5" y="1.5" width="19.14" height="26" rx="1.6" fill="url(#fi)"/><path d="M21.79 0 V28.85 H0" fill="none" stroke="#c4c4c7" stroke-width="1.7" stroke-opacity=".75"/><path d="M22.04 0 V29.1 H0" fill="none" stroke="#adadb1" stroke-width=".6"/><text x="9.9" y="16.8" font-family="'Liberation Sans',sans-serif" font-size="4.2" font-weight="700" fill="#111" stroke="#111" stroke-width=".3">4</text><circle cx="5.6" cy="6.5" r="4" fill="#33956a"/><circle cx="5.6" cy="6.5" r="2.48" fill="none" stroke="#fff" stroke-opacity=".55" stroke-width="0.8"/><circle cx="5.6" cy="6.5" r="1" fill="none" stroke="#fff" stroke-opacity=".4" stroke-width="0.56"/><circle cx="16.4" cy="6.5" r="4" fill="#5c5c5c"/><circle cx="16.4" cy="6.5" r="2.48" fill="none" stroke="#fff" stroke-opacity=".55" stroke-width="0.8"/><circle cx="16.4" cy="6.5" r="1" fill="none" stroke="#fff" stroke-opacity=".4" stroke-width="0.56"/><circle cx="5.6" cy="22.5" r="4" fill="#5c5c5c"/><circle cx="5.6" cy="22.5" r="2.48" fill="none" stroke="#fff" stroke-opacity=".55" stroke-width="0.8"/><circle cx="5.6" cy="22.5" r="1" fill="none" stroke="#fff" stroke-opacity=".4" stroke-width="0.56"/><circle cx="16.4" cy="22.5" r="4" fill="#33956a"/><circle cx="16.4" cy="22.5" r="2.48" fill="none" stroke="#fff" stroke-opacity=".55" stroke-width="0.8"/><circle cx="16.4" cy="22.5" r="1" fill="none" stroke="#fff" stroke-opacity=".4" stroke-width="0.56"/></g>
<g transform="translate(292.08 257.6)"><path d="M22.34 0 L27.79 4 V33.7 H4.75 L0 29.4 Z" fill="#1a1408" fill-opacity=".3"/><path d="M22.34 0 L26.79 3.2 V32.9 H4.15 L0 29.4 Z" fill="#2e281c" fill-opacity=".55"/><path d="M22.34 0 L26.09 2.8 V32.2 H22.34 V29.4 Z" fill="url(#sr)"/><path d="M0 29.4 L3.75 32.2 H26.09 L22.34 29.4 Z" fill="url(#sb)"/><rect width="22.34" height="29.4" fill="#fdfdfd"/><rect x="1.5" y="1.5" width="19.14" height="26" rx="1.6" fill="url(#fi)"/><path d="M21.79 0 V28.85 H0" fill="none" stroke="#c4c4c7" stroke-width="1.7" stroke-opacity=".75"/><path d="M22.04 0 V29.1 H0" fill="none" stroke="#adadb1" stroke-width=".6"/><text x="2.8" y="6.7" font-family="'Liberation Sans',sans-serif" font-size="4.6" font-weight="700" fill="#111" stroke="#111" stroke-width=".3">2</text><text transform="translate(11.8 8.37) scale(1.17 0.67)" text-anchor="middle" font-family="'Liberation Sans','Noto Sans CJK SC',sans-serif" font-size="10" font-weight="700" fill="#151515">二</text><text transform="translate(11.16 25.4) scale(1.46 1.71)" text-anchor="middle" font-family="'Liberation Sans','Noto Sans CJK SC',sans-serif" font-size="10" font-weight="500" fill="#ab3a12">萬</text></g>
<g transform="translate(314.42 257.6)"><path d="M22.34 0 L27.79 4 V33.7 H4.75 L0 29.4 Z" fill="#1a1408" fill-opacity=".3"/><path d="M22.34 0 L26.79 3.2 V32.9 H4.15 L0 29.4 Z" fill="#2e281c" fill-opacity=".55"/><path d="M22.34 0 L26.09 2.8 V32.2 H22.34 V29.4 Z" fill="url(#sr)"/><path d="M0 29.4 L3.75 32.2 H26.09 L22.34 29.4 Z" fill="url(#sb)"/><rect width="22.34" height="29.4" fill="#fdfdfd"/><rect x="1.5" y="1.5" width="19.14" height="26" rx="1.6" fill="url(#fi)"/><path d="M21.79 0 V28.85 H0" fill="none" stroke="#c4c4c7" stroke-width="1.7" stroke-opacity=".75"/><path d="M22.04 0 V29.1 H0" fill="none" stroke="#adadb1" stroke-width=".6"/><text x="2.3" y="6.2" font-family="'Liberation Sans',sans-serif" font-size="4.2" font-weight="700" fill="#111" stroke="#111" stroke-width=".3">E</text><text transform="translate(11.11 23.78) scale(1.53 2.23)" text-anchor="middle" font-family="'Liberation Sans','Noto Sans CJK SC',sans-serif" font-size="10" font-weight="500" fill="#0d0d0d">東</text></g>
<g transform="translate(336.76 257.6)"><path d="M22.34 0 L27.79 4 V33.7 H4.75 L0 29.4 Z" fill="#1a1408" fill-opacity=".3"/><path d="M22.34 0 L26.79 3.2 V32.9 H4.15 L0 29.4 Z" fill="#2e281c" fill-opacity=".55"/><path d="M22.34 0 L26.09 2.8 V32.2 H22.34 V29.4 Z" fill="url(#sr)"/><path d="M0 29.4 L3.75 32.2 H26.09 L22.34 29.4 Z" fill="url(#sb)"/><rect width="22.34" height="29.4" fill="#fdfdfd"/><rect x="1.5" y="1.5" width="19.14" height="26" rx="1.6" fill="url(#fi)"/><path d="M21.79 0 V28.85 H0" fill="none" stroke="#c4c4c7" stroke-width="1.7" stroke-opacity=".75"/><path d="M22.04 0 V29.1 H0" fill="none" stroke="#adadb1" stroke-width=".6"/><text x="2.8" y="6.7" font-family="'Liberation Sans',sans-serif" font-size="4.6" font-weight="700" fill="#111" stroke="#111" stroke-width=".3">9</text><text transform="translate(11.47 9.8) scale(1.07 0.77)" text-anchor="middle" font-family="'Liberation Sans','Noto Sans CJK SC',sans-serif" font-size="10" font-weight="700" fill="#151515">九</text><text transform="translate(11.16 25.4) scale(1.46 1.71)" text-anchor="middle" font-family="'Liberation Sans','Noto Sans CJK SC',sans-serif" font-size="10" font-weight="500" fill="#ab3a12">萬</text></g>
<g transform="translate(359.1 257.6)"><path d="M22.34 0 L27.79 4 V33.7 H4.75 L0 29.4 Z" fill="#1a1408" fill-opacity=".3"/><path d="M22.34 0 L26.79 3.2 V32.9 H4.15 L0 29.4 Z" fill="#2e281c" fill-opacity=".55"/><path d="M22.34 0 L26.09 2.8 V32.2 H22.34 V29.4 Z" fill="url(#sr)"/><path d="M0 29.4 L3.75 32.2 H26.09 L22.34 29.4 Z" fill="url(#sb)"/><rect width="22.34" height="29.4" fill="#fdfdfd"/><rect x="1.5" y="1.5" width="19.14" height="26" rx="1.6" fill="url(#fi)"/><path d="M21.79 0 V28.85 H0" fill="none" stroke="#c4c4c7" stroke-width="1.7" stroke-opacity=".75"/><path d="M22.04 0 V29.1 H0" fill="none" stroke="#adadb1" stroke-width=".6"/><text x="1.9" y="6.5" font-family="'Liberation Sans',sans-serif" font-size="4.4" font-weight="700" fill="#111" stroke="#111" stroke-width=".3">5</text><rect x="4.75" y="2.8" width="3.3" height="10.5" rx="1.2" fill="#1f7f48"/><rect x="5.6" y="3.7" width="1.6" height="8.7" rx=".4" fill="#fff" fill-opacity=".74"/><rect x="5.15" y="7.3" width="2.5" height="1.5" fill="#1f7f48"/><rect x="4.75" y="16.2" width="3.3" height="10.6" rx="1.2" fill="#1f7f48"/><rect x="5.6" y="17.1" width="1.6" height="8.8" rx=".4" fill="#fff" fill-opacity=".74"/><rect x="5.15" y="20.75" width="2.5" height="1.5" fill="#1f7f48"/><rect x="13.85" y="2.8" width="3.3" height="10.5" rx="1.2" fill="#1f7f48"/><rect x="14.7" y="3.7" width="1.6" height="8.7" rx=".4" fill="#fff" fill-opacity=".74"/><rect x="14.25" y="7.3" width="2.5" height="1.5" fill="#1f7f48"/><rect x="13.85" y="16.2" width="3.3" height="10.6" rx="1.2" fill="#1f7f48"/><rect x="14.7" y="17.1" width="1.6" height="8.8" rx=".4" fill="#fff" fill-opacity=".74"/><rect x="14.25" y="20.75" width="2.5" height="1.5" fill="#1f7f48"/><rect x="9.65" y="9" width="2.5" height="10.8" rx="1.2" fill="#c25a30"/><rect x="10.5" y="9.9" width="0.8" height="9" rx=".4" fill="#fff" fill-opacity=".74"/><rect x="10.05" y="13.65" width="1.7" height="1.5" fill="#c25a30"/></g>
<g transform="translate(381.44 257.6)"><path d="M22.34 0 L27.79 4 V33.7 H4.75 L0 29.4 Z" fill="#1a1408" fill-opacity=".3"/><path d="M22.34 0 L26.79 3.2 V32.9 H4.15 L0 29.4 Z" fill="#2e281c" fill-opacity=".55"/><path d="M22.34 0 L26.09 2.8 V32.2 H22.34 V29.4 Z" fill="url(#sr)"/><path d="M0 29.4 L3.75 32.2 H26.09 L22.34 29.4 Z" fill="url(#sb)"/><rect width="22.34" height="29.4" fill="#fdfdfd"/><rect x="1.5" y="1.5" width="19.14" height="26" rx="1.6" fill="url(#fi)"/><path d="M21.79 0 V28.85 H0" fill="none" stroke="#c4c4c7" stroke-width="1.7" stroke-opacity=".75"/><path d="M22.04 0 V29.1 H0" fill="none" stroke="#adadb1" stroke-width=".6"/><circle cx="6" cy="6.4" r="4" fill="#33956a"/><circle cx="6" cy="6.4" r="2.48" fill="none" stroke="#fff" stroke-opacity=".55" stroke-width="0.8"/><circle cx="6" cy="6.4" r="1" fill="none" stroke="#fff" stroke-opacity=".4" stroke-width="0.56"/><circle cx="16.7" cy="6.4" r="4" fill="#33956a"/><circle cx="16.7" cy="6.4" r="2.48" fill="none" stroke="#fff" stroke-opacity=".55" stroke-width="0.8"/><circle cx="16.7" cy="6.4" r="1" fill="none" stroke="#fff" stroke-opacity=".4" stroke-width="0.56"/><circle cx="5.6" cy="16" r="4" fill="#c4623a"/><circle cx="5.6" cy="16" r="2.48" fill="none" stroke="#fff" stroke-opacity=".55" stroke-width="0.8"/><circle cx="5.6" cy="16" r="1" fill="none" stroke="#fff" stroke-opacity=".4" stroke-width="0.56"/><circle cx="16.7" cy="16" r="4" fill="#c4623a"/><circle cx="16.7" cy="16" r="2.48" fill="none" stroke="#fff" stroke-opacity=".55" stroke-width="0.8"/><circle cx="16.7" cy="16" r="1" fill="none" stroke="#fff" stroke-opacity=".4" stroke-width="0.56"/><circle cx="5.6" cy="22.8" r="4" fill="#c4623a"/><circle cx="5.6" cy="22.8" r="2.48" fill="none" stroke="#fff" stroke-opacity=".55" stroke-width="0.8"/><circle cx="5.6" cy="22.8" r="1" fill="none" stroke="#fff" stroke-opacity=".4" stroke-width="0.56"/><circle cx="16.7" cy="22.8" r="4" fill="#c4623a"/><circle cx="16.7" cy="22.8" r="2.48" fill="none" stroke="#fff" stroke-opacity=".55" stroke-width="0.8"/><circle cx="16.7" cy="22.8" r="1" fill="none" stroke="#fff" stroke-opacity=".4" stroke-width="0.56"/><text x="9.9" y="12.8" font-family="'Liberation Sans',sans-serif" font-size="4.2" font-weight="700" fill="#111" stroke="#111" stroke-width=".3">6</text></g>
<g transform="translate(403.78 257.6)"><path d="M22.34 0 L27.79 4 V33.7 H4.75 L0 29.4 Z" fill="#1a1408" fill-opacity=".3"/><path d="M22.34 0 L26.79 3.2 V32.9 H4.15 L0 29.4 Z" fill="#2e281c" fill-opacity=".55"/><path d="M22.34 0 L26.09 2.8 V32.2 H22.34 V29.4 Z" fill="url(#sr)"/><path d="M0 29.4 L3.75 32.2 H26.09 L22.34 29.4 Z" fill="url(#sb)"/><rect width="22.34" height="29.4" fill="#fdfdfd"/><rect x="1.5" y="1.5" width="19.14" height="26" rx="1.6" fill="url(#fi)"/><path d="M21.79 0 V28.85 H0" fill="none" stroke="#c4c4c7" stroke-width="1.7" stroke-opacity=".75"/><path d="M22.04 0 V29.1 H0" fill="none" stroke="#adadb1" stroke-width=".6"/><text x="2.4" y="6.2" font-family="'Liberation Sans',sans-serif" font-size="4.3" font-weight="700" fill="#111" stroke="#111" stroke-width=".3">1</text><path d="M3.6 9.8 C6.4 11 8.8 13.6 9.6 17.2 C6.4 16.6 4 13.6 3.6 9.8Z" fill="#2c8a50"/><path d="M18.9 15.6 C17.8 18.6 15.4 20.6 12.4 21.2 C13.2 18.4 15.8 16.2 18.9 15.6Z" fill="#2c8a50"/><path d="M9.4 20.4 C8.8 14.4 12.6 5.4 18.3 1.9 C19.9 7.4 17.4 15.4 12.6 20.8 Z" fill="#1b1b1b"/><path d="M11.4 17.6 L17.1 4.8" stroke="#fff" stroke-opacity=".8" stroke-width="1" stroke-dasharray=".9 1.2" fill="none"/><path d="M13.4 17 L18 7.4" stroke="#fff" stroke-opacity=".5" stroke-width=".7" stroke-dasharray=".7 1.2" fill="none"/><path d="M10.2 15.4 L14.8 5.6" stroke="#fff" stroke-opacity=".35" stroke-width=".6" stroke-dasharray=".6 1.3" fill="none"/><path d="M4.9 19.3 C6.8 21.6 10.6 22.2 14.3 21 C15.6 23.4 13.4 26.2 9.8 26.2 C6.6 26 4.7 23 4.9 19.3Z" fill="#fff" stroke="#1b1b1b" stroke-width="1"/><path d="M7 23.4 C9.2 24.8 12 24.6 13.8 23" stroke="#1b1b1b" stroke-width=".8" fill="none"/><path d="M9.4 26 C11.4 26.6 13.4 25.8 14.2 24.4" stroke="#1b1b1b" stroke-width="1.2" fill="none"/><circle cx="4.1" cy="18.5" r=".85" fill="#c6501e"/></g></svg>
<div class="t sb" style="left:3.2px">Select a matching tile</div>
<div class="t sb" style="right:4.4px;transform-origin:100% 0">Your time: 00:01:29&nbsp;&nbsp;&nbsp;Removed: 10/144</div>
</div>
</body></html>
